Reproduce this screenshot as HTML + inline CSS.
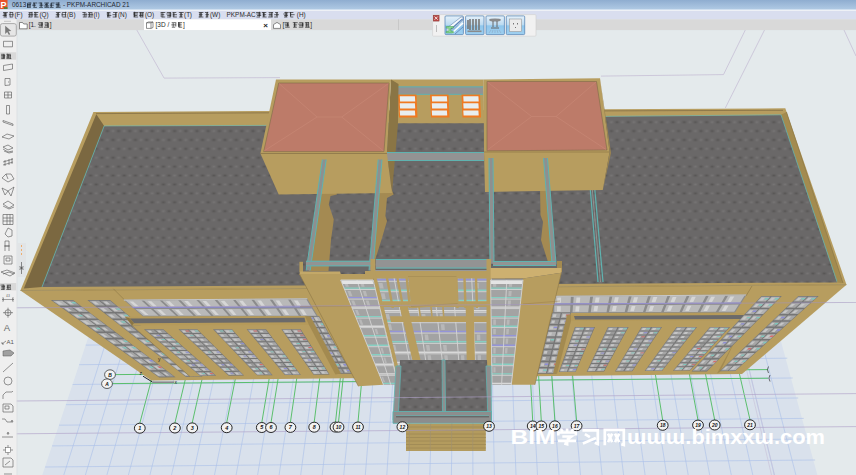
<!DOCTYPE html>
<html><head><meta charset="utf-8"><style>
html,body{margin:0;padding:0;width:856px;height:475px;overflow:hidden;background:#e5e9ec}
svg{display:block}
text{font-family:"Liberation Sans",sans-serif}
</style></head><body>
<svg width="856" height="475" viewBox="0 0 856 475">
<defs>
<radialGradient id="rd"><stop offset="0" stop-color="#545251"/><stop offset="1" stop-color="#6a6868" stop-opacity="0"/></radialGradient>
<radialGradient id="rl"><stop offset="0" stop-color="#7a7878"/><stop offset="1" stop-color="#6a6868" stop-opacity="0"/></radialGradient>
<pattern id="roof" patternUnits="userSpaceOnUse" width="11.2" height="17.8" x="1" y="2"><rect width="11.2" height="17.8" fill="#6a6868"/><ellipse cx="5.6" cy="4.45" rx="4" ry="2.6" fill="url(#rd)"/><ellipse cx="0" cy="13.35" rx="4" ry="2.6" fill="url(#rd)"/><ellipse cx="11.2" cy="13.35" rx="4" ry="2.6" fill="url(#rd)"/><ellipse cx="0" cy="4.45" rx="3.5" ry="2.5" fill="url(#rl)"/><ellipse cx="11.2" cy="4.45" rx="3.5" ry="2.5" fill="url(#rl)"/><ellipse cx="5.6" cy="13.35" rx="3.5" ry="2.5" fill="url(#rl)"/></pattern>
</defs>
<rect x="0" y="0" width="856" height="475" fill="#e4eaec"/>
<polyline points="136.8,30 164.1,78.1 280,77.6" fill="none" stroke="#c7bfd6" stroke-width="0.8"/>
<polyline points="745.3,30 723.5,74.6 601,76.1" fill="none" stroke="#c7bfd6" stroke-width="0.8"/>
<line x1="764.5" y1="30.0" x2="725.3" y2="108.0" stroke="#c7bfd6" stroke-width="0.8"/>
<line x1="844.0" y1="30.0" x2="856.0" y2="56.0" stroke="#c7bfd6" stroke-width="0.8"/>
<polygon points="100.7,300.0 769.7,300.0 817.4,475.0 42.3,475.0" fill="#d9e1ec"/>
<line x1="119.3" y1="300" x2="63.8" y2="475" stroke="#a9c0ea" stroke-width="0.6"/>
<line x1="137.9" y1="300" x2="85.4" y2="475" stroke="#a9c0ea" stroke-width="0.6"/>
<line x1="156.5" y1="300" x2="106.9" y2="475" stroke="#a9c0ea" stroke-width="0.6"/>
<line x1="175.1" y1="300" x2="128.4" y2="475" stroke="#a9c0ea" stroke-width="0.6"/>
<line x1="193.6" y1="300" x2="149.9" y2="475" stroke="#a9c0ea" stroke-width="0.6"/>
<line x1="212.2" y1="300" x2="171.5" y2="475" stroke="#a9c0ea" stroke-width="0.6"/>
<line x1="230.8" y1="300" x2="193.0" y2="475" stroke="#a9c0ea" stroke-width="0.6"/>
<line x1="249.4" y1="300" x2="214.5" y2="475" stroke="#a9c0ea" stroke-width="0.6"/>
<line x1="268.0" y1="300" x2="236.1" y2="475" stroke="#a9c0ea" stroke-width="0.6"/>
<line x1="286.5" y1="300" x2="257.6" y2="475" stroke="#a9c0ea" stroke-width="0.6"/>
<line x1="305.1" y1="300" x2="279.1" y2="475" stroke="#a9c0ea" stroke-width="0.6"/>
<line x1="323.7" y1="300" x2="300.7" y2="475" stroke="#a9c0ea" stroke-width="0.6"/>
<line x1="342.3" y1="300" x2="322.2" y2="475" stroke="#a9c0ea" stroke-width="0.6"/>
<line x1="360.9" y1="300" x2="343.7" y2="475" stroke="#a9c0ea" stroke-width="0.6"/>
<line x1="379.5" y1="300" x2="365.3" y2="475" stroke="#a9c0ea" stroke-width="0.6"/>
<line x1="398.0" y1="300" x2="386.8" y2="475" stroke="#a9c0ea" stroke-width="0.6"/>
<line x1="416.6" y1="300" x2="408.3" y2="475" stroke="#a9c0ea" stroke-width="0.6"/>
<line x1="435.2" y1="300" x2="429.8" y2="475" stroke="#a9c0ea" stroke-width="0.6"/>
<line x1="453.8" y1="300" x2="451.4" y2="475" stroke="#a9c0ea" stroke-width="0.6"/>
<line x1="472.4" y1="300" x2="472.9" y2="475" stroke="#a9c0ea" stroke-width="0.6"/>
<line x1="490.9" y1="300" x2="494.4" y2="475" stroke="#a9c0ea" stroke-width="0.6"/>
<line x1="509.5" y1="300" x2="516.0" y2="475" stroke="#a9c0ea" stroke-width="0.6"/>
<line x1="528.1" y1="300" x2="537.5" y2="475" stroke="#a9c0ea" stroke-width="0.6"/>
<line x1="546.7" y1="300" x2="559.0" y2="475" stroke="#a9c0ea" stroke-width="0.6"/>
<line x1="565.3" y1="300" x2="580.5" y2="475" stroke="#a9c0ea" stroke-width="0.6"/>
<line x1="583.9" y1="300" x2="602.1" y2="475" stroke="#a9c0ea" stroke-width="0.6"/>
<line x1="602.4" y1="300" x2="623.6" y2="475" stroke="#a9c0ea" stroke-width="0.6"/>
<line x1="621.0" y1="300" x2="645.1" y2="475" stroke="#a9c0ea" stroke-width="0.6"/>
<line x1="639.6" y1="300" x2="666.7" y2="475" stroke="#a9c0ea" stroke-width="0.6"/>
<line x1="658.2" y1="300" x2="688.2" y2="475" stroke="#a9c0ea" stroke-width="0.6"/>
<line x1="676.8" y1="300" x2="709.7" y2="475" stroke="#a9c0ea" stroke-width="0.6"/>
<line x1="695.3" y1="300" x2="731.3" y2="475" stroke="#a9c0ea" stroke-width="0.6"/>
<line x1="713.9" y1="300" x2="752.8" y2="475" stroke="#a9c0ea" stroke-width="0.6"/>
<line x1="732.5" y1="300" x2="774.3" y2="475" stroke="#a9c0ea" stroke-width="0.6"/>
<line x1="751.1" y1="300" x2="795.9" y2="475" stroke="#a9c0ea" stroke-width="0.6"/>
<line x1="98.4" y1="306.9" x2="771.6" y2="300.8" stroke="#a9c0ea" stroke-width="0.6"/>
<line x1="92.1" y1="325.9" x2="776.7" y2="319.6" stroke="#a9c0ea" stroke-width="0.6"/>
<line x1="85.7" y1="345.1" x2="782.0" y2="338.8" stroke="#a9c0ea" stroke-width="0.6"/>
<line x1="79.2" y1="364.7" x2="787.3" y2="358.2" stroke="#a9c0ea" stroke-width="0.6"/>
<line x1="72.6" y1="384.5" x2="792.7" y2="378.0" stroke="#a9c0ea" stroke-width="0.6"/>
<line x1="65.9" y1="404.7" x2="798.2" y2="398.0" stroke="#a9c0ea" stroke-width="0.6"/>
<line x1="59.1" y1="425.2" x2="803.7" y2="418.4" stroke="#a9c0ea" stroke-width="0.6"/>
<line x1="52.1" y1="445.9" x2="809.4" y2="439.0" stroke="#a9c0ea" stroke-width="0.6"/>
<line x1="45.1" y1="467.0" x2="815.1" y2="460.0" stroke="#a9c0ea" stroke-width="0.6"/>
<line x1="739.5" y1="340.0" x2="771.5" y2="475.0" stroke="#c7bfd6" stroke-width="0.6"/>
<line x1="742.2" y1="340.0" x2="774.5" y2="475.0" stroke="#c7bfd6" stroke-width="0.6"/>
<line x1="112.0" y1="383.6" x2="768.0" y2="378.2" stroke="#4dbb5f" stroke-width="0.9"/>
<line x1="115.0" y1="374.6" x2="768.0" y2="369.6" stroke="#4dbb5f" stroke-width="0.9"/>
<line x1="139.8" y1="423.2" x2="153.5" y2="372.0" stroke="#4dbb5f" stroke-width="0.9"/>
<line x1="174.9" y1="423.0" x2="187.1" y2="372.0" stroke="#4dbb5f" stroke-width="0.9"/>
<line x1="192.2" y1="422.9" x2="203.7" y2="372.0" stroke="#4dbb5f" stroke-width="0.9"/>
<line x1="226.7" y1="422.7" x2="236.7" y2="372.0" stroke="#4dbb5f" stroke-width="0.9"/>
<line x1="261.8" y1="422.5" x2="270.3" y2="372.0" stroke="#4dbb5f" stroke-width="0.9"/>
<line x1="271.0" y1="422.5" x2="279.2" y2="372.0" stroke="#4dbb5f" stroke-width="0.9"/>
<line x1="290.4" y1="422.4" x2="297.7" y2="372.0" stroke="#4dbb5f" stroke-width="0.9"/>
<line x1="314.2" y1="422.2" x2="320.5" y2="372.0" stroke="#4dbb5f" stroke-width="0.9"/>
<line x1="335.5" y1="422.1" x2="341.0" y2="372.0" stroke="#4dbb5f" stroke-width="0.9"/>
<line x1="338.5" y1="422.1" x2="343.8" y2="372.0" stroke="#4dbb5f" stroke-width="0.9"/>
<line x1="358.0" y1="422.0" x2="362.5" y2="372.0" stroke="#4dbb5f" stroke-width="0.9"/>
<line x1="402.4" y1="421.8" x2="405.1" y2="372.0" stroke="#4dbb5f" stroke-width="0.9"/>
<line x1="489.0" y1="421.3" x2="488.2" y2="372.0" stroke="#4dbb5f" stroke-width="0.9"/>
<line x1="532.7" y1="421.0" x2="530.1" y2="372.0" stroke="#4dbb5f" stroke-width="0.9"/>
<line x1="541.3" y1="421.0" x2="538.4" y2="372.0" stroke="#4dbb5f" stroke-width="0.9"/>
<line x1="554.9" y1="420.9" x2="551.5" y2="372.0" stroke="#4dbb5f" stroke-width="0.9"/>
<line x1="576.6" y1="420.8" x2="572.3" y2="372.0" stroke="#4dbb5f" stroke-width="0.9"/>
<line x1="662.7" y1="420.3" x2="655.0" y2="372.0" stroke="#4dbb5f" stroke-width="0.9"/>
<line x1="698.0" y1="420.1" x2="689.0" y2="372.0" stroke="#4dbb5f" stroke-width="0.9"/>
<line x1="714.7" y1="420.0" x2="705.1" y2="372.0" stroke="#4dbb5f" stroke-width="0.9"/>
<line x1="750.0" y1="419.8" x2="739.0" y2="372.0" stroke="#4dbb5f" stroke-width="0.9"/>
<polygon points="93.4,112.0 276.0,111.0 600.0,109.2 785.3,108.3 846.5,284.7 20.4,290.5" fill="#b79d5f"/>
<polyline points="96,113.6 276,112.8 600,110.9 783,110.3" fill="none" stroke="#8a7548" stroke-width="0.9"/>
<polygon points="96.3,114.2 104.2,125.9 42.0,287.0 23.8,288.5" fill="#7b6841"/>
<polygon points="781.0,114.8 786.5,112.0 843.0,283.0 837.0,282.4" fill="#a38b4f"/>
<line x1="786.5" y1="112.0" x2="843.0" y2="283.0" stroke="#7f6c40" stroke-width="0.5"/>
<polygon points="104.2,125.9 265.0,125.4 610.0,116.3 781.0,114.8 837.0,282.4 42.0,287.0" fill="url(#roof)"/>
<line x1="104.2" y1="125.9" x2="42.0" y2="287.0" stroke="#5fb3b0" stroke-width="0.8"/>
<line x1="781.0" y1="114.8" x2="837.0" y2="281.6" stroke="#5fb3b0" stroke-width="0.8"/>
<polyline points="104.2,125.9 265,125.4 610,116.3 781,114.8" fill="none" stroke="#7fb8a4" stroke-width="0.8"/>
<line x1="590.0" y1="186.0" x2="598.0" y2="282.0" stroke="#5fb3b0" stroke-width="1.2"/>
<line x1="594.5" y1="186.0" x2="603.0" y2="282.0" stroke="#5fb3b0" stroke-width="1.2"/>
<line x1="592.0" y1="186.0" x2="600.5" y2="282.0" stroke="#9a9a9a" stroke-width="0.8"/>
<polygon points="391.0,79.6 483.7,79.6 484.0,123.6 397.0,123.6" fill="#b79d5f"/>
<polygon points="392.6,86.4 483.0,86.4 483.0,94.8 392.6,94.8" fill="#939393"/>
<line x1="392.6" y1="86.9" x2="483.0" y2="86.9" stroke="#5fb3b0" stroke-width="1.0"/>
<line x1="392.6" y1="94.3" x2="483.0" y2="94.3" stroke="#5fb3b0" stroke-width="1.0"/>
<polygon points="398.0,94.5 416.5,94.5 417.5,117.5 399.0,117.5" fill="#f07a22"/>
<polygon points="399.8,96.2 414.9,96.2 415.2,101.4 400.1,101.4" fill="#e8eef0"/>
<polygon points="399.8,103.3 414.9,103.3 415.2,108.5 400.1,108.5" fill="#e8eef0"/>
<polygon points="399.8,110.4 414.9,110.4 415.2,115.6 400.1,115.6" fill="#e8eef0"/>
<polygon points="430.0,94.5 448.5,94.5 449.5,117.5 431.0,117.5" fill="#f07a22"/>
<polygon points="431.8,96.2 446.9,96.2 447.2,101.4 432.1,101.4" fill="#e8eef0"/>
<polygon points="431.8,103.3 446.9,103.3 447.2,108.5 432.1,108.5" fill="#e8eef0"/>
<polygon points="431.8,110.4 446.9,110.4 447.2,115.6 432.1,115.6" fill="#e8eef0"/>
<polygon points="461.5,94.5 480.0,94.5 481.0,117.5 462.5,117.5" fill="#f07a22"/>
<polygon points="463.3,96.2 478.4,96.2 478.7,101.4 463.6,101.4" fill="#e8eef0"/>
<polygon points="463.3,103.3 478.4,103.3 478.7,108.5 463.6,108.5" fill="#e8eef0"/>
<polygon points="463.3,110.4 478.4,110.4 478.7,115.6 463.6,115.6" fill="#e8eef0"/>
<polygon points="397.0,123.6 484.0,123.6 491.0,262.0 376.0,262.0" fill="url(#roof)"/>
<polygon points="391.0,79.6 398.5,84.0 398.0,123.6 392.0,193.0 386.9,153.5" fill="#8a7545"/>
<polygon points="387.0,152.0 484.0,152.0 484.0,161.0 387.0,161.0" fill="#939393"/>
<line x1="387.0" y1="152.5" x2="484.0" y2="152.5" stroke="#5fb3b0" stroke-width="1.0"/>
<line x1="387.0" y1="160.5" x2="484.0" y2="160.5" stroke="#5fb3b0" stroke-width="1.0"/>
<polygon points="325.0,161.0 337.0,194.6 330.5,196.0 328.8,204.6 333.8,219.5 331.0,240.0 328.5,271.0 309.0,271.0" fill="#a48a52"/>
<polygon points="380.0,161.3 393.7,194.6 387.0,198.0 385.4,216.0 387.0,221.0 382.0,238.0 373.7,264.5 371.0,266.0" fill="#a48a52"/>
<polygon points="544.5,158.0 540.0,188.0 540.5,215.0 543.0,222.0 541.0,240.0 548.0,262.0 552.0,264.0" fill="#a48a52"/>
<polygon points="276.0,79.6 391.0,79.6 386.9,153.5 260.4,153.5" fill="#b79d5f"/>
<polygon points="278.7,83.0 389.0,83.0 384.0,151.6 263.7,151.6" fill="#bd7b69" stroke="#7e6a48" stroke-width="0.6"/>
<line x1="279.0" y1="83.5" x2="317.0" y2="117.0" stroke="#c98a77" stroke-width="0.6"/>
<line x1="388.5" y1="83.5" x2="341.7" y2="117.0" stroke="#c98a77" stroke-width="0.6"/>
<line x1="264.0" y1="151.0" x2="317.0" y2="117.0" stroke="#c98a77" stroke-width="0.6"/>
<line x1="383.5" y1="151.0" x2="341.7" y2="117.0" stroke="#c98a77" stroke-width="0.6"/>
<line x1="317.0" y1="117.0" x2="341.7" y2="117.0" stroke="#c98a77" stroke-width="0.6"/>
<polygon points="260.4,153.5 386.9,153.5 392.0,193.0 278.7,194.5" fill="#b79d5f"/>
<line x1="260.4" y1="153.5" x2="386.9" y2="153.5" stroke="#8c7645" stroke-width="0.7"/>
<polygon points="483.7,79.6 600.0,78.2 609.6,152.0 484.0,152.0" fill="#b79d5f"/>
<polygon points="487.0,81.5 596.5,81.5 607.0,150.0 487.0,150.8" fill="#bd7b69" stroke="#7e6a48" stroke-width="0.6"/>
<line x1="487.5" y1="82.0" x2="531.6" y2="116.5" stroke="#c98a77" stroke-width="0.6"/>
<line x1="596.0" y1="82.0" x2="556.0" y2="116.5" stroke="#c98a77" stroke-width="0.6"/>
<line x1="487.5" y1="150.0" x2="531.6" y2="116.5" stroke="#c98a77" stroke-width="0.6"/>
<line x1="606.0" y1="149.5" x2="556.0" y2="116.5" stroke="#c98a77" stroke-width="0.6"/>
<line x1="531.6" y1="116.5" x2="556.0" y2="116.5" stroke="#c98a77" stroke-width="0.6"/>
<polygon points="484.0,152.0 609.6,152.0 602.8,190.0 485.0,192.0" fill="#b79d5f"/>
<line x1="484.0" y1="152.0" x2="609.6" y2="152.0" stroke="#8c7645" stroke-width="0.7"/>
<polygon points="600.0,78.2 609.6,152.0 602.8,190.0 611.0,153.0" fill="#9c8550"/>
<polygon points="322.4,159.6 326.2,159.6 310.2,270.4 306.2,270.4" fill="#8f8f8f"/>
<line x1="322.4" y1="159.6" x2="306.2" y2="270.4" stroke="#5fb3b0" stroke-width="1.0"/>
<line x1="326.2" y1="159.6" x2="310.2" y2="270.4" stroke="#5fb3b0" stroke-width="1.0"/>
<polygon points="378.2,159.6 382.0,159.6 372.8,270.4 369.0,270.4" fill="#8f8f8f"/>
<line x1="378.2" y1="159.6" x2="369.0" y2="270.4" stroke="#5fb3b0" stroke-width="1.0"/>
<line x1="382.0" y1="159.6" x2="372.8" y2="270.4" stroke="#5fb3b0" stroke-width="1.0"/>
<polygon points="489.0,158.0 493.0,158.0 494.0,263.7 490.0,263.7" fill="#8f8f8f"/>
<line x1="489.0" y1="158.0" x2="490.0" y2="263.7" stroke="#5fb3b0" stroke-width="1.0"/>
<line x1="493.0" y1="158.0" x2="494.0" y2="263.7" stroke="#5fb3b0" stroke-width="1.0"/>
<polygon points="543.5,158.0 547.5,158.0 556.0,263.7 552.0,263.7" fill="#8f8f8f"/>
<line x1="543.5" y1="158.0" x2="552.0" y2="263.7" stroke="#5fb3b0" stroke-width="1.0"/>
<line x1="547.5" y1="158.0" x2="556.0" y2="263.7" stroke="#5fb3b0" stroke-width="1.0"/>
<polygon points="20.4,290.5 846.5,284.7 742.0,374.0 151.5,380.5" fill="#b79d5f"/>
<line x1="20.4" y1="290.5" x2="846.5" y2="284.7" stroke="#8f7a48" stroke-width="0.6"/>
<line x1="113.4" y1="288.8" x2="124.1" y2="299.5" stroke="#8c7645" stroke-width="0.6"/>
<polygon points="50.8,299.9 73.0,299.9 175.5,377.2 159.2,377.4" fill="#767676"/>
<polygon points="52.7,300.7 62.2,300.7 68.9,305.6 59.5,305.6" fill="#b2b2b2"/>
<polygon points="55.3,301.6 59.0,301.6 63.1,304.6 59.5,304.6" fill="#c6c6c6"/>
<polygon points="61.7,307.1 71.0,307.1 77.7,312.0 68.5,312.0" fill="#999999"/>
<polygon points="64.3,308.1 67.9,308.1 72.0,311.1 68.5,311.1" fill="#c6c6c6"/>
<polygon points="70.7,313.6 79.8,313.6 86.5,318.5 77.5,318.5" fill="#a6a6a6"/>
<polygon points="73.3,314.6 76.8,314.6 80.9,317.5 77.4,317.5" fill="#c6c6c6"/>
<polygon points="77.8,314.9 81.4,314.9 83.4,316.3 79.7,316.3" fill="#80c8be"/>
<polygon points="79.7,320.1 88.6,320.0 95.3,324.9 86.6,325.0" fill="#b2b2b2"/>
<polygon points="82.3,321.0 85.7,321.0 89.8,324.0 86.4,324.0" fill="#c6c6c6"/>
<polygon points="88.7,326.5 97.4,326.5 104.1,331.4 95.6,331.4" fill="#999999"/>
<polygon points="91.3,327.5 94.6,327.5 98.7,330.4 95.4,330.4" fill="#c6c6c6"/>
<polygon points="95.5,327.8 99.1,327.8 101.0,329.2 97.5,329.2" fill="#80c8be"/>
<polygon points="97.7,333.0 106.2,332.9 112.9,337.8 104.6,337.9" fill="#a6a6a6"/>
<polygon points="100.3,333.9 103.5,333.9 107.6,336.9 104.4,336.9" fill="#c6c6c6"/>
<polygon points="106.7,339.4 115.0,339.4 121.7,344.3 113.6,344.3" fill="#a6a6a6"/>
<polygon points="109.2,340.4 112.4,340.4 116.5,343.3 113.4,343.4" fill="#c6c6c6"/>
<polygon points="115.8,345.9 123.8,345.8 130.5,350.7 122.6,350.8" fill="#a6a6a6"/>
<polygon points="118.2,346.9 121.3,346.8 125.4,349.8 122.4,349.8" fill="#c6c6c6"/>
<polygon points="122.2,347.2 125.5,347.1 127.4,348.6 124.2,348.6" fill="#80c8be"/>
<polygon points="124.8,352.3 132.6,352.3 139.3,357.2 131.6,357.3" fill="#a6a6a6"/>
<polygon points="127.2,353.3 130.2,353.3 134.3,356.3 131.4,356.3" fill="#c6c6c6"/>
<polygon points="133.8,358.8 141.4,358.7 148.1,363.7 140.6,363.7" fill="#a6a6a6"/>
<polygon points="136.2,359.8 139.1,359.7 143.2,362.7 140.3,362.7" fill="#c6c6c6"/>
<polygon points="142.8,365.3 150.2,365.2 156.9,370.1 149.7,370.2" fill="#a6a6a6"/>
<polygon points="145.2,366.2 148.0,366.2 152.1,369.2 149.3,369.2" fill="#c6c6c6"/>
<polygon points="148.9,366.5 151.9,366.5 153.8,367.9 150.8,367.9" fill="#80c8be"/>
<polygon points="151.8,371.7 159.0,371.7 165.7,376.6 158.7,376.6" fill="#a6a6a6"/>
<polygon points="154.2,372.7 156.9,372.7 161.0,375.6 158.3,375.7" fill="#c6c6c6"/>
<polygon points="63.7,300.7 73.2,300.7 79.8,305.6 70.4,305.6" fill="#999999"/>
<polygon points="66.4,301.6 70.0,301.6 74.0,304.6 70.4,304.6" fill="#c6c6c6"/>
<polygon points="71.0,302.0 74.9,302.0 76.7,303.4 72.9,303.4" fill="#80c8be"/>
<polygon points="72.5,307.1 81.8,307.1 88.3,312.0 79.2,312.0" fill="#a6a6a6"/>
<polygon points="75.1,308.1 78.7,308.1 82.7,311.1 79.1,311.1" fill="#c6c6c6"/>
<polygon points="81.3,313.6 90.4,313.6 96.9,318.5 87.9,318.5" fill="#a6a6a6"/>
<polygon points="83.8,314.5 87.3,314.5 91.3,317.5 87.9,317.5" fill="#c6c6c6"/>
<polygon points="90.0,320.0 98.9,320.0 105.4,324.9 96.7,324.9" fill="#a6a6a6"/>
<polygon points="92.6,321.0 96.0,321.0 100.0,324.0 96.6,324.0" fill="#c6c6c6"/>
<polygon points="98.8,326.5 107.5,326.5 114.0,331.4 105.5,331.4" fill="#999999"/>
<polygon points="101.3,327.4 104.6,327.4 108.6,330.4 105.3,330.4" fill="#c6c6c6"/>
<polygon points="107.6,332.9 116.0,332.9 122.5,337.8 114.2,337.8" fill="#999999"/>
<polygon points="110.1,333.9 113.3,333.9 117.3,336.8 114.1,336.9" fill="#c6c6c6"/>
<polygon points="116.3,339.4 124.6,339.3 131.1,344.2 123.0,344.3" fill="#a6a6a6"/>
<polygon points="118.8,340.3 122.0,340.3 125.9,343.3 122.8,343.3" fill="#c6c6c6"/>
<polygon points="122.9,340.7 126.2,340.6 128.1,342.1 124.8,342.1" fill="#80c8be"/>
<polygon points="125.1,345.8 133.2,345.8 139.7,350.7 131.8,350.7" fill="#b2b2b2"/>
<polygon points="127.5,346.8 130.6,346.8 134.6,349.7 131.6,349.8" fill="#c6c6c6"/>
<polygon points="131.5,347.1 134.8,347.1 136.7,348.5 133.4,348.5" fill="#80c8be"/>
<polygon points="133.9,352.3 141.7,352.2 148.2,357.1 140.5,357.2" fill="#a6a6a6"/>
<polygon points="136.3,353.2 139.3,353.2 143.3,356.2 140.3,356.2" fill="#c6c6c6"/>
<polygon points="142.7,358.7 150.3,358.7 156.8,363.6 149.3,363.6" fill="#a6a6a6"/>
<polygon points="145.0,359.7 147.9,359.7 151.9,362.6 149.0,362.7" fill="#c6c6c6"/>
<polygon points="148.8,360.0 151.9,360.0 153.8,361.4 150.7,361.4" fill="#8d8dd6"/>
<polygon points="151.4,365.2 158.8,365.1 165.3,370.0 158.1,370.1" fill="#a6a6a6"/>
<polygon points="153.8,366.1 156.6,366.1 160.6,369.1 157.8,369.1" fill="#c6c6c6"/>
<polygon points="157.5,366.4 160.5,366.4 162.3,367.8 159.4,367.9" fill="#d86a6a"/>
<polygon points="160.2,371.6 167.4,371.6 173.9,376.5 166.9,376.5" fill="#999999"/>
<polygon points="162.5,372.6 165.3,372.6 169.2,375.5 166.5,375.6" fill="#c6c6c6"/>
<polygon points="87.4,299.9 110.0,299.9 202.7,376.9 186.1,377.1" fill="#767676"/>
<polygon points="89.2,300.7 98.9,300.7 104.9,305.6 95.4,305.6" fill="#a6a6a6"/>
<polygon points="91.8,301.6 95.5,301.6 99.2,304.6 95.5,304.6" fill="#c6c6c6"/>
<polygon points="97.4,307.1 106.9,307.1 112.9,312.0 103.6,312.0" fill="#a6a6a6"/>
<polygon points="99.9,308.1 103.6,308.1 107.3,311.0 103.7,311.0" fill="#c6c6c6"/>
<polygon points="105.6,313.5 114.9,313.5 120.9,318.4 111.8,318.4" fill="#a6a6a6"/>
<polygon points="108.1,314.5 111.6,314.5 115.4,317.5 111.9,317.5" fill="#c6c6c6"/>
<polygon points="113.8,320.0 122.8,320.0 128.9,324.8 120.0,324.9" fill="#a6a6a6"/>
<polygon points="116.3,320.9 119.7,320.9 123.5,323.9 120.0,323.9" fill="#c6c6c6"/>
<polygon points="120.7,321.2 124.3,321.2 126.1,322.7 122.4,322.7" fill="#80c8be"/>
<polygon points="122.0,326.4 130.8,326.4 136.9,331.3 128.2,331.3" fill="#a6a6a6"/>
<polygon points="124.5,327.4 127.8,327.4 131.6,330.3 128.2,330.3" fill="#c6c6c6"/>
<polygon points="130.2,332.8 138.8,332.8 144.9,337.7 136.4,337.7" fill="#a6a6a6"/>
<polygon points="132.6,333.8 135.9,333.8 139.7,336.7 136.4,336.8" fill="#c6c6c6"/>
<polygon points="138.4,339.3 146.8,339.2 152.9,344.1 144.6,344.2" fill="#a6a6a6"/>
<polygon points="140.8,340.2 144.0,340.2 147.7,343.2 144.6,343.2" fill="#c6c6c6"/>
<polygon points="144.9,340.5 148.3,340.5 150.1,341.9 146.7,342.0" fill="#80c8be"/>
<polygon points="146.6,345.7 154.8,345.7 160.9,350.6 152.9,350.6" fill="#a6a6a6"/>
<polygon points="149.0,346.7 152.1,346.7 155.8,349.6 152.7,349.6" fill="#c6c6c6"/>
<polygon points="154.8,352.1 162.8,352.1 168.9,357.0 161.1,357.0" fill="#999999"/>
<polygon points="157.2,353.1 160.2,353.1 163.9,356.0 160.9,356.1" fill="#c6c6c6"/>
<polygon points="161.1,353.4 164.3,353.4 166.1,354.8 162.9,354.8" fill="#80c8be"/>
<polygon points="163.0,358.6 170.8,358.5 176.9,363.4 169.3,363.5" fill="#a6a6a6"/>
<polygon points="165.3,359.5 168.3,359.5 172.0,362.5 169.1,362.5" fill="#c6c6c6"/>
<polygon points="171.2,365.0 178.8,365.0 184.9,369.8 177.5,369.9" fill="#b2b2b2"/>
<polygon points="173.5,366.0 176.4,365.9 180.1,368.9 177.3,368.9" fill="#c6c6c6"/>
<polygon points="179.4,371.5 186.8,371.4 192.9,376.3 185.7,376.3" fill="#999999"/>
<polygon points="181.7,372.4 184.5,372.4 188.2,375.3 185.5,375.4" fill="#c6c6c6"/>
<polygon points="185.3,372.7 188.3,372.7 190.1,374.1 187.1,374.1" fill="#80c8be"/>
<polygon points="100.4,300.7 110.1,300.7 116.0,305.5 106.5,305.6" fill="#999999"/>
<polygon points="103.0,301.6 106.7,301.6 110.3,304.6 106.6,304.6" fill="#c6c6c6"/>
<polygon points="108.4,307.1 117.9,307.1 123.8,312.0 114.5,312.0" fill="#a6a6a6"/>
<polygon points="110.9,308.1 114.5,308.1 118.1,311.0 114.6,311.0" fill="#c6c6c6"/>
<polygon points="115.5,308.4 119.3,308.4 121.0,309.8 117.2,309.8" fill="#80c8be"/>
<polygon points="116.4,313.5 125.6,313.5 131.5,318.4 122.4,318.4" fill="#a6a6a6"/>
<polygon points="118.8,314.5 122.4,314.5 126.0,317.4 122.5,317.4" fill="#c6c6c6"/>
<polygon points="123.3,314.8 127.1,314.8 128.8,316.2 125.0,316.2" fill="#80c8be"/>
<polygon points="124.3,320.0 133.4,319.9 139.3,324.8 130.4,324.8" fill="#a6a6a6"/>
<polygon points="126.8,320.9 130.2,320.9 133.8,323.9 130.4,323.9" fill="#c6c6c6"/>
<polygon points="131.1,321.2 134.8,321.2 136.5,322.6 132.9,322.6" fill="#8d8dd6"/>
<polygon points="132.3,326.4 141.1,326.4 147.0,331.2 138.3,331.3" fill="#a6a6a6"/>
<polygon points="134.7,327.3 138.1,327.3 141.7,330.3 138.3,330.3" fill="#c6c6c6"/>
<polygon points="140.2,332.8 148.9,332.8 154.7,337.7 146.3,337.7" fill="#a6a6a6"/>
<polygon points="142.6,333.8 145.9,333.8 149.5,336.7 146.3,336.7" fill="#c6c6c6"/>
<polygon points="148.2,339.2 156.6,339.2 162.5,344.1 154.2,344.1" fill="#999999"/>
<polygon points="150.6,340.2 153.8,340.2 157.4,343.1 154.2,343.1" fill="#c6c6c6"/>
<polygon points="154.6,340.5 158.1,340.5 159.8,341.9 156.4,341.9" fill="#80c8be"/>
<polygon points="156.1,345.7 164.3,345.6 170.2,350.5 162.2,350.5" fill="#a6a6a6"/>
<polygon points="158.5,346.6 161.6,346.6 165.2,349.6 162.1,349.6" fill="#c6c6c6"/>
<polygon points="162.5,346.9 165.8,346.9 167.5,348.3 164.2,348.3" fill="#80c8be"/>
<polygon points="164.1,352.1 172.1,352.0 178.0,356.9 170.2,357.0" fill="#b2b2b2"/>
<polygon points="166.4,353.0 169.5,353.0 173.1,356.0 170.1,356.0" fill="#c6c6c6"/>
<polygon points="170.3,353.3 173.5,353.3 175.3,354.7 172.0,354.8" fill="#d86a6a"/>
<polygon points="172.1,358.5 179.8,358.5 185.7,363.3 178.1,363.4" fill="#a6a6a6"/>
<polygon points="174.3,359.5 177.3,359.4 180.9,362.4 178.0,362.4" fill="#c6c6c6"/>
<polygon points="178.1,359.8 181.3,359.7 183.0,361.2 179.9,361.2" fill="#80c8be"/>
<polygon points="180.0,364.9 187.6,364.9 193.5,369.8 186.1,369.8" fill="#b2b2b2"/>
<polygon points="182.3,365.9 185.2,365.9 188.8,368.8 185.9,368.9" fill="#c6c6c6"/>
<polygon points="188.0,371.4 195.3,371.3 201.2,376.2 194.0,376.3" fill="#999999"/>
<polygon points="190.2,372.3 193.0,372.3 196.6,375.2 193.8,375.3" fill="#c6c6c6"/>
<polygon points="123.2,299.6 307.0,298.3 318.0,316.5 143.0,316.5" fill="#8b8b8b"/>
<polygon points="125.7,300.6 141.4,300.5 149.0,307.3 133.6,307.4" fill="#b9b9b9"/>
<polygon points="129.4,301.4 133.1,301.4 138.9,306.5 135.3,306.5" fill="#d6d6d6"/>
<polygon points="144.0,300.5 159.8,300.4 167.0,307.2 151.5,307.3" fill="#b9b9b9"/>
<polygon points="147.7,301.3 151.3,301.3 156.9,306.4 153.3,306.4" fill="#d6d6d6"/>
<polygon points="162.3,300.4 178.1,300.3 185.0,307.2 169.5,307.2" fill="#b9b9b9"/>
<polygon points="166.0,301.2 169.6,301.2 174.9,306.3 171.3,306.4" fill="#d6d6d6"/>
<polygon points="180.7,300.2 196.4,300.1 203.0,307.1 187.5,307.2" fill="#b9b9b9"/>
<polygon points="184.2,301.1 187.9,301.1 192.9,306.3 189.3,306.3" fill="#d6d6d6"/>
<polygon points="199.0,300.1 214.7,300.0 220.9,307.0 205.5,307.1" fill="#b9b9b9"/>
<polygon points="202.5,301.0 206.2,300.9 211.0,306.2 207.4,306.2" fill="#d6d6d6"/>
<polygon points="217.3,300.0 233.1,299.9 238.9,307.0 223.4,307.0" fill="#b9b9b9"/>
<polygon points="220.8,300.9 224.5,300.8 229.0,306.1 225.4,306.1" fill="#d6d6d6"/>
<polygon points="235.6,299.9 251.4,299.8 256.9,306.9 241.4,306.9" fill="#b9b9b9"/>
<polygon points="239.1,300.7 242.8,300.7 247.0,306.0 243.4,306.1" fill="#d6d6d6"/>
<polygon points="254.0,299.8 269.7,299.6 274.9,306.8 259.4,306.9" fill="#b9b9b9"/>
<polygon points="257.4,300.6 261.0,300.6 265.0,306.0 261.4,306.0" fill="#d6d6d6"/>
<polygon points="272.3,299.6 288.0,299.5 292.8,306.7 277.4,306.8" fill="#b9b9b9"/>
<polygon points="275.7,300.5 279.3,300.5 283.0,305.9 279.4,305.9" fill="#d6d6d6"/>
<polygon points="290.6,299.5 306.4,299.4 310.8,306.7 295.3,306.7" fill="#b9b9b9"/>
<polygon points="293.9,300.4 297.6,300.4 301.1,305.8 297.5,305.8" fill="#d6d6d6"/>
<polygon points="135.5,309.1 150.9,309.0 158.5,315.8 143.4,315.8" fill="#b9b9b9"/>
<polygon points="139.2,309.9 142.8,309.9 148.6,315.0 145.1,315.0" fill="#d6d6d6"/>
<polygon points="153.4,309.0 168.8,309.0 176.1,315.8 161.0,315.8" fill="#b9b9b9"/>
<polygon points="157.0,309.8 160.6,309.8 166.2,315.0 162.7,315.0" fill="#d6d6d6"/>
<polygon points="171.3,308.9 186.7,308.9 193.6,315.8 178.5,315.8" fill="#b9b9b9"/>
<polygon points="174.9,309.8 178.5,309.8 183.8,315.0 180.2,315.0" fill="#d6d6d6"/>
<polygon points="189.2,308.9 204.6,308.8 211.1,315.8 196.0,315.8" fill="#b9b9b9"/>
<polygon points="192.7,309.7 196.3,309.7 201.3,314.9 197.8,314.9" fill="#d6d6d6"/>
<polygon points="207.1,308.8 222.5,308.8 228.7,315.8 213.6,315.8" fill="#b9b9b9"/>
<polygon points="210.6,309.7 214.1,309.7 218.9,314.9 215.4,314.9" fill="#d6d6d6"/>
<polygon points="225.0,308.8 240.4,308.7 246.2,315.8 231.1,315.8" fill="#b9b9b9"/>
<polygon points="228.4,309.6 232.0,309.6 236.5,314.9 233.0,314.9" fill="#d6d6d6"/>
<polygon points="242.9,308.7 258.2,308.7 263.7,315.8 248.6,315.8" fill="#b9b9b9"/>
<polygon points="246.3,309.6 249.8,309.6 254.1,314.9 250.6,314.9" fill="#d6d6d6"/>
<polygon points="260.8,308.7 276.1,308.6 281.3,315.8 266.2,315.8" fill="#b9b9b9"/>
<polygon points="264.1,309.5 267.7,309.5 271.7,314.9 268.1,314.9" fill="#d6d6d6"/>
<polygon points="278.6,308.6 294.0,308.6 298.8,315.8 283.7,315.8" fill="#b9b9b9"/>
<polygon points="281.9,309.5 285.5,309.5 289.2,314.9 285.7,314.9" fill="#d6d6d6"/>
<polygon points="296.5,308.5 311.9,308.5 316.3,315.8 301.3,315.8" fill="#b9b9b9"/>
<polygon points="299.8,309.4 303.4,309.4 306.8,314.9 303.3,314.9" fill="#d6d6d6"/>
<line x1="132.5" y1="307.5" x2="312.2" y2="306.9" stroke="#8a8ad8" stroke-width="1.0"/>
<line x1="123.8" y1="300.1" x2="307.3" y2="298.8" stroke="#d8d8d8" stroke-width="0.8"/>
<polygon points="306.0,316.0 319.0,316.0 352.0,373.8 337.0,373.8" fill="#767676"/>
<polygon points="306.8,316.7 312.4,316.7 314.9,321.1 309.2,321.1" fill="#a6a6a6"/>
<polygon points="308.1,317.6 310.2,317.6 311.7,320.2 309.5,320.2" fill="#c6c6c6"/>
<polygon points="310.7,317.8 313.0,317.8 313.7,319.1 311.4,319.1" fill="#8d8dd6"/>
<polygon points="309.9,322.5 315.6,322.5 318.0,326.9 312.3,326.9" fill="#a6a6a6"/>
<polygon points="311.2,323.3 313.4,323.3 314.8,326.0 312.6,326.0" fill="#c6c6c6"/>
<polygon points="313.0,328.3 318.8,328.3 321.2,332.6 315.4,332.6" fill="#a6a6a6"/>
<polygon points="314.3,329.1 316.5,329.1 318.0,331.8 315.7,331.8" fill="#c6c6c6"/>
<polygon points="316.1,334.0 322.0,334.0 324.4,338.4 318.5,338.4" fill="#a6a6a6"/>
<polygon points="317.4,334.9 319.7,334.9 321.1,337.6 318.9,337.6" fill="#c6c6c6"/>
<polygon points="319.3,339.8 325.2,339.8 327.6,344.2 321.6,344.2" fill="#a6a6a6"/>
<polygon points="320.6,340.7 322.8,340.7 324.3,343.3 322.0,343.3" fill="#c6c6c6"/>
<polygon points="322.4,345.6 328.4,345.6 330.8,350.0 324.7,350.0" fill="#999999"/>
<polygon points="323.7,346.5 326.0,346.5 327.4,349.1 325.1,349.1" fill="#c6c6c6"/>
<polygon points="325.5,351.4 331.6,351.4 334.0,355.8 327.8,355.8" fill="#b2b2b2"/>
<polygon points="326.8,352.2 329.1,352.2 330.6,354.9 328.2,354.9" fill="#c6c6c6"/>
<polygon points="329.7,352.5 332.2,352.5 332.9,353.8 330.4,353.8" fill="#8d8dd6"/>
<polygon points="328.6,357.2 334.8,357.2 337.2,361.5 330.9,361.5" fill="#a6a6a6"/>
<polygon points="329.9,358.0 332.3,358.0 333.7,360.7 331.3,360.7" fill="#c6c6c6"/>
<polygon points="331.7,362.9 338.0,362.9 340.4,367.3 334.0,367.3" fill="#a6a6a6"/>
<polygon points="333.0,363.8 335.4,363.8 336.9,366.5 334.5,366.5" fill="#c6c6c6"/>
<polygon points="336.0,364.1 338.5,364.1 339.2,365.4 336.7,365.4" fill="#80c8be"/>
<polygon points="334.8,368.7 341.2,368.7 343.6,373.1 337.2,373.1" fill="#999999"/>
<polygon points="336.1,369.6 338.6,369.6 340.0,372.2 337.6,372.2" fill="#c6c6c6"/>
<polygon points="313.3,316.7 318.9,316.7 321.4,321.1 315.8,321.1" fill="#b2b2b2"/>
<polygon points="314.6,317.6 316.8,317.6 318.3,320.2 316.1,320.2" fill="#c6c6c6"/>
<polygon points="316.5,322.5 322.2,322.5 324.7,326.9 319.0,326.9" fill="#a6a6a6"/>
<polygon points="317.8,323.3 320.0,323.3 321.5,326.0 319.3,326.0" fill="#c6c6c6"/>
<polygon points="320.5,323.6 322.8,323.6 323.5,324.9 321.2,324.9" fill="#80c8be"/>
<polygon points="319.8,328.3 325.5,328.3 328.0,332.6 322.2,332.6" fill="#a6a6a6"/>
<polygon points="321.0,329.1 323.3,329.1 324.8,331.8 322.5,331.8" fill="#c6c6c6"/>
<polygon points="323.0,334.0 328.8,334.0 331.3,338.4 325.4,338.4" fill="#a6a6a6"/>
<polygon points="324.3,334.9 326.5,334.9 328.0,337.6 325.7,337.6" fill="#c6c6c6"/>
<polygon points="327.0,335.2 329.4,335.2 330.1,336.5 327.7,336.5" fill="#8d8dd6"/>
<polygon points="326.2,339.8 332.1,339.8 334.6,344.2 328.6,344.2" fill="#a6a6a6"/>
<polygon points="327.5,340.7 329.8,340.7 331.3,343.3 329.0,343.3" fill="#c6c6c6"/>
<polygon points="329.4,345.6 335.4,345.6 337.9,350.0 331.8,350.0" fill="#b2b2b2"/>
<polygon points="330.7,346.5 333.0,346.5 334.5,349.1 332.2,349.1" fill="#c6c6c6"/>
<polygon points="333.5,346.7 336.0,346.7 336.7,348.0 334.2,348.0" fill="#80c8be"/>
<polygon points="332.6,351.4 338.7,351.4 341.2,355.8 335.0,355.8" fill="#a6a6a6"/>
<polygon points="333.9,352.2 336.3,352.2 337.8,354.9 335.4,354.9" fill="#c6c6c6"/>
<polygon points="335.8,357.2 342.0,357.2 344.5,361.5 338.2,361.5" fill="#999999"/>
<polygon points="337.1,358.0 339.5,358.0 341.0,360.7 338.6,360.7" fill="#c6c6c6"/>
<polygon points="339.0,362.9 345.3,362.9 347.8,367.3 341.4,367.3" fill="#a6a6a6"/>
<polygon points="340.4,363.8 342.8,363.8 344.3,366.5 341.8,366.5" fill="#c6c6c6"/>
<polygon points="343.3,364.1 345.9,364.1 346.6,365.4 344.0,365.4" fill="#8d8dd6"/>
<polygon points="342.2,368.7 348.6,368.7 351.1,373.1 344.6,373.1" fill="#999999"/>
<polygon points="343.6,369.6 346.0,369.6 347.5,372.2 345.1,372.2" fill="#c6c6c6"/>
<polygon points="346.6,369.9 349.2,369.9 349.9,371.1 347.3,371.1" fill="#8d8dd6"/>
<polygon points="125.0,316.8 306.5,315.9 309.0,325.0 132.0,325.5" fill="#b59a5a"/>
<polygon points="130.0,318.5 304.5,317.8 305.5,322.3 134.0,323.2" fill="#6b6a6a"/>
<polygon points="125.0,316.8 130.0,318.5 134.0,323.2 132.0,325.5" fill="#8a7545"/>
<polygon points="132.0,325.5 309.0,325.0 335.4,374.5 190.0,376.6" fill="#b79d5f"/>
<polygon points="305.0,315.9 310.5,316.5 341.0,373.5 335.4,374.5 309.0,325.0" fill="#a38a50"/>
<line x1="132.0" y1="325.5" x2="190.0" y2="376.6" stroke="#8c7645" stroke-width="0.6"/>
<polygon points="144.0,329.3 163.3,329.3 216.2,375.8 200.4,376.0" fill="#767676"/>
<polygon points="145.3,329.8 153.6,329.8 157.4,333.0 149.2,333.0" fill="#999999"/>
<polygon points="147.2,330.4 150.4,330.4 152.7,332.4 149.6,332.4" fill="#c6c6c6"/>
<polygon points="150.4,334.1 158.6,334.0 162.3,337.3 154.3,337.3" fill="#999999"/>
<polygon points="152.3,334.7 155.4,334.7 157.7,336.6 154.7,336.6" fill="#c6c6c6"/>
<polygon points="156.1,334.9 159.5,334.9 160.5,335.8 157.3,335.8" fill="#8d8dd6"/>
<polygon points="155.5,338.3 163.5,338.3 167.3,341.5 159.4,341.5" fill="#a6a6a6"/>
<polygon points="157.4,338.9 160.5,338.9 162.8,340.9 159.7,340.9" fill="#c6c6c6"/>
<polygon points="161.2,339.1 164.4,339.1 165.5,340.1 162.3,340.1" fill="#80c8be"/>
<polygon points="160.6,342.5 168.5,342.5 172.3,345.7 164.5,345.8" fill="#a6a6a6"/>
<polygon points="162.5,343.2 165.5,343.2 167.8,345.1 164.8,345.1" fill="#c6c6c6"/>
<polygon points="165.8,346.8 173.5,346.7 177.3,350.0 169.6,350.0" fill="#999999"/>
<polygon points="167.6,347.4 170.6,347.4 172.9,349.3 169.9,349.4" fill="#c6c6c6"/>
<polygon points="171.3,347.6 174.4,347.6 175.5,348.5 172.4,348.5" fill="#80c8be"/>
<polygon points="170.9,351.0 178.5,351.0 182.3,354.2 174.8,354.2" fill="#a6a6a6"/>
<polygon points="172.7,351.6 175.6,351.6 177.9,353.6 175.0,353.6" fill="#c6c6c6"/>
<polygon points="176.3,351.8 179.4,351.8 180.5,352.8 177.4,352.8" fill="#80c8be"/>
<polygon points="176.0,355.3 183.5,355.2 187.2,358.4 179.9,358.5" fill="#b2b2b2"/>
<polygon points="177.8,355.9 180.6,355.9 183.0,357.8 180.1,357.8" fill="#c6c6c6"/>
<polygon points="181.1,359.5 188.4,359.5 192.2,362.7 185.0,362.7" fill="#a6a6a6"/>
<polygon points="182.9,360.1 185.7,360.1 188.0,362.1 185.2,362.1" fill="#c6c6c6"/>
<polygon points="186.4,360.3 189.3,360.3 190.4,361.2 187.5,361.3" fill="#80c8be"/>
<polygon points="186.2,363.7 193.4,363.7 197.2,366.9 190.1,367.0" fill="#999999"/>
<polygon points="188.0,364.4 190.7,364.3 193.1,366.3 190.3,366.3" fill="#c6c6c6"/>
<polygon points="191.4,364.6 194.3,364.5 195.4,365.5 192.5,365.5" fill="#8d8dd6"/>
<polygon points="191.3,368.0 198.4,367.9 202.2,371.1 195.2,371.2" fill="#a6a6a6"/>
<polygon points="193.1,368.6 195.8,368.6 198.1,370.5 195.4,370.6" fill="#c6c6c6"/>
<polygon points="196.4,372.2 203.4,372.2 207.2,375.4 200.3,375.4" fill="#a6a6a6"/>
<polygon points="198.2,372.9 200.8,372.8 203.1,374.8 200.5,374.8" fill="#c6c6c6"/>
<polygon points="201.5,373.0 204.3,373.0 205.4,373.9 202.6,374.0" fill="#80c8be"/>
<polygon points="154.9,329.8 163.2,329.8 166.9,333.0 158.7,333.0" fill="#999999"/>
<polygon points="156.8,330.4 160.0,330.4 162.2,332.4 159.1,332.4" fill="#c6c6c6"/>
<polygon points="159.9,334.0 168.0,334.0 171.7,337.2 163.6,337.3" fill="#a6a6a6"/>
<polygon points="161.8,334.7 164.9,334.7 167.1,336.6 164.0,336.6" fill="#c6c6c6"/>
<polygon points="164.8,338.3 172.8,338.3 176.5,341.5 168.6,341.5" fill="#b2b2b2"/>
<polygon points="166.7,338.9 169.8,338.9 172.0,340.8 169.0,340.9" fill="#c6c6c6"/>
<polygon points="170.5,339.1 173.7,339.1 174.8,340.0 171.5,340.0" fill="#80c8be"/>
<polygon points="169.8,342.5 177.7,342.5 181.3,345.7 173.6,345.7" fill="#a6a6a6"/>
<polygon points="171.6,343.1 174.6,343.1 176.9,345.1 173.9,345.1" fill="#c6c6c6"/>
<polygon points="175.3,343.3 178.5,343.3 179.6,344.3 176.4,344.3" fill="#80c8be"/>
<polygon points="174.8,346.7 182.5,346.7 186.2,349.9 178.5,350.0" fill="#a6a6a6"/>
<polygon points="176.6,347.4 179.5,347.4 181.8,349.3 178.8,349.3" fill="#c6c6c6"/>
<polygon points="179.7,351.0 187.3,350.9 191.0,354.2 183.5,354.2" fill="#b2b2b2"/>
<polygon points="181.5,351.6 184.4,351.6 186.7,353.5 183.8,353.6" fill="#c6c6c6"/>
<polygon points="185.1,351.8 188.2,351.8 189.3,352.7 186.2,352.7" fill="#8d8dd6"/>
<polygon points="184.7,355.2 192.1,355.2 195.8,358.4 188.4,358.4" fill="#a6a6a6"/>
<polygon points="186.5,355.8 189.3,355.8 191.6,357.8 188.7,357.8" fill="#c6c6c6"/>
<polygon points="189.6,359.4 197.0,359.4 200.6,362.6 193.4,362.7" fill="#a6a6a6"/>
<polygon points="191.4,360.1 194.2,360.1 196.4,362.0 193.7,362.0" fill="#c6c6c6"/>
<polygon points="194.9,360.3 197.8,360.2 198.9,361.2 195.9,361.2" fill="#8d8dd6"/>
<polygon points="194.6,363.7 201.8,363.6 205.4,366.8 198.4,366.9" fill="#b2b2b2"/>
<polygon points="196.3,364.3 199.1,364.3 201.3,366.2 198.6,366.3" fill="#c6c6c6"/>
<polygon points="199.7,364.5 202.7,364.5 203.7,365.4 200.8,365.4" fill="#8d8dd6"/>
<polygon points="199.5,367.9 206.6,367.8 210.3,371.1 203.3,371.1" fill="#a6a6a6"/>
<polygon points="201.3,368.5 204.0,368.5 206.2,370.5 203.5,370.5" fill="#c6c6c6"/>
<polygon points="204.6,368.7 207.5,368.7 208.5,369.6 205.7,369.7" fill="#8d8dd6"/>
<polygon points="204.5,372.1 211.4,372.1 215.1,375.3 208.3,375.4" fill="#999999"/>
<polygon points="206.2,372.8 208.9,372.7 211.1,374.7 208.5,374.7" fill="#c6c6c6"/>
<polygon points="209.5,372.9 212.3,372.9 213.4,373.9 210.6,373.9" fill="#d86a6a"/>
<polygon points="178.5,329.3 197.2,329.3 244.1,375.5 228.7,375.7" fill="#767676"/>
<polygon points="179.7,329.8 187.7,329.8 191.1,333.0 183.2,333.0" fill="#999999"/>
<polygon points="181.5,330.4 184.6,330.4 186.6,332.4 183.6,332.4" fill="#c6c6c6"/>
<polygon points="185.3,330.6 188.5,330.6 189.5,331.6 186.2,331.6" fill="#d86a6a"/>
<polygon points="184.3,334.0 192.1,334.0 195.5,337.2 187.7,337.2" fill="#a6a6a6"/>
<polygon points="186.0,334.6 189.1,334.6 191.1,336.6 188.1,336.6" fill="#c6c6c6"/>
<polygon points="189.7,334.9 192.9,334.9 193.9,335.8 190.7,335.8" fill="#80c8be"/>
<polygon points="188.8,338.2 196.6,338.2 199.9,341.4 192.3,341.4" fill="#b2b2b2"/>
<polygon points="190.6,338.9 193.5,338.9 195.6,340.8 192.7,340.8" fill="#c6c6c6"/>
<polygon points="193.4,342.4 201.0,342.4 204.4,345.6 196.8,345.6" fill="#a6a6a6"/>
<polygon points="195.1,343.1 198.0,343.1 200.1,345.0 197.2,345.0" fill="#c6c6c6"/>
<polygon points="197.9,346.7 205.4,346.6 208.8,349.8 201.4,349.9" fill="#999999"/>
<polygon points="199.6,347.3 202.5,347.3 204.6,349.2 201.7,349.2" fill="#c6c6c6"/>
<polygon points="202.5,350.9 209.8,350.8 213.2,354.0 205.9,354.1" fill="#a6a6a6"/>
<polygon points="204.2,351.5 207.0,351.5 209.1,353.4 206.3,353.4" fill="#c6c6c6"/>
<polygon points="207.6,351.7 210.6,351.7 211.6,352.6 208.6,352.6" fill="#80c8be"/>
<polygon points="207.0,355.1 214.3,355.0 217.6,358.2 210.5,358.3" fill="#a6a6a6"/>
<polygon points="208.7,355.7 211.5,355.7 213.5,357.6 210.8,357.6" fill="#c6c6c6"/>
<polygon points="211.6,359.3 218.7,359.3 222.0,362.4 215.0,362.5" fill="#a6a6a6"/>
<polygon points="213.2,359.9 216.0,359.9 218.0,361.8 215.3,361.9" fill="#c6c6c6"/>
<polygon points="216.1,363.5 223.1,363.5 226.5,366.7 219.6,366.7" fill="#999999"/>
<polygon points="217.8,364.1 220.5,364.1 222.5,366.1 219.9,366.1" fill="#c6c6c6"/>
<polygon points="221.1,364.3 223.9,364.3 224.9,365.2 222.1,365.2" fill="#8d8dd6"/>
<polygon points="220.7,367.7 227.5,367.7 230.9,370.9 224.1,370.9" fill="#b2b2b2"/>
<polygon points="222.3,368.3 224.9,368.3 227.0,370.3 224.4,370.3" fill="#c6c6c6"/>
<polygon points="225.6,368.5 228.3,368.5 229.3,369.4 226.5,369.5" fill="#80c8be"/>
<polygon points="225.2,371.9 232.0,371.9 235.3,375.1 228.7,375.1" fill="#a6a6a6"/>
<polygon points="226.8,372.6 229.4,372.5 231.5,374.5 228.9,374.5" fill="#c6c6c6"/>
<polygon points="230.0,372.7 232.8,372.7 233.7,373.6 231.0,373.7" fill="#8d8dd6"/>
<polygon points="189.0,329.8 197.1,329.8 200.3,333.0 192.4,333.0" fill="#a6a6a6"/>
<polygon points="190.8,330.4 193.9,330.4 195.9,332.4 192.8,332.4" fill="#c6c6c6"/>
<polygon points="194.6,330.6 197.8,330.6 198.8,331.6 195.5,331.6" fill="#80c8be"/>
<polygon points="193.4,334.0 201.3,334.0 204.6,337.2 196.8,337.2" fill="#a6a6a6"/>
<polygon points="195.2,334.6 198.2,334.6 200.2,336.6 197.2,336.6" fill="#c6c6c6"/>
<polygon points="197.8,338.2 205.6,338.2 208.8,341.4 201.2,341.4" fill="#a6a6a6"/>
<polygon points="199.6,338.8 202.5,338.8 204.5,340.8 201.6,340.8" fill="#c6c6c6"/>
<polygon points="202.2,342.4 209.9,342.4 213.1,345.6 205.6,345.6" fill="#a6a6a6"/>
<polygon points="204.0,343.0 206.9,343.0 208.9,345.0 206.0,345.0" fill="#c6c6c6"/>
<polygon points="206.6,346.6 214.1,346.6 217.4,349.8 210.0,349.8" fill="#b2b2b2"/>
<polygon points="208.3,347.3 211.2,347.2 213.2,349.2 210.4,349.2" fill="#c6c6c6"/>
<polygon points="211.0,350.8 218.4,350.8 221.7,354.0 214.4,354.0" fill="#b2b2b2"/>
<polygon points="212.7,351.5 215.6,351.4 217.5,353.4 214.7,353.4" fill="#c6c6c6"/>
<polygon points="216.2,351.7 219.2,351.6 220.1,352.6 217.1,352.6" fill="#8d8dd6"/>
<polygon points="215.4,355.0 222.7,355.0 225.9,358.2 218.8,358.2" fill="#a6a6a6"/>
<polygon points="217.1,355.7 219.9,355.6 221.9,357.6 219.1,357.6" fill="#c6c6c6"/>
<polygon points="219.8,359.2 227.0,359.2 230.2,362.4 223.2,362.4" fill="#999999"/>
<polygon points="221.5,359.9 224.2,359.8 226.2,361.8 223.5,361.8" fill="#c6c6c6"/>
<polygon points="224.2,363.4 231.2,363.4 234.5,366.6 227.6,366.6" fill="#a6a6a6"/>
<polygon points="225.9,364.1 228.6,364.1 230.5,366.0 227.9,366.0" fill="#c6c6c6"/>
<polygon points="229.2,364.3 232.0,364.2 232.9,365.2 230.1,365.2" fill="#8d8dd6"/>
<polygon points="228.6,367.7 235.5,367.6 238.7,370.8 232.0,370.9" fill="#999999"/>
<polygon points="230.3,368.3 232.9,368.3 234.9,370.2 232.3,370.2" fill="#c6c6c6"/>
<polygon points="233.0,371.9 239.8,371.8 243.0,375.0 236.4,375.1" fill="#a6a6a6"/>
<polygon points="234.6,372.5 237.2,372.5 239.2,374.4 236.7,374.4" fill="#c6c6c6"/>
<polygon points="213.0,329.3 232.0,329.3 272.7,375.2 257.1,375.3" fill="#767676"/>
<polygon points="214.1,329.8 222.3,329.8 225.2,333.0 217.2,333.0" fill="#999999"/>
<polygon points="215.9,330.4 219.0,330.4 220.8,332.4 217.7,332.4" fill="#c6c6c6"/>
<polygon points="219.7,330.6 223.0,330.6 223.8,331.6 220.5,331.6" fill="#80c8be"/>
<polygon points="218.1,334.0 226.2,334.0 229.1,337.2 221.2,337.2" fill="#a6a6a6"/>
<polygon points="219.9,334.6 222.9,334.6 224.7,336.5 221.7,336.5" fill="#c6c6c6"/>
<polygon points="222.1,338.2 230.0,338.2 233.0,341.3 225.2,341.4" fill="#b2b2b2"/>
<polygon points="223.8,338.8 226.9,338.8 228.7,340.7 225.7,340.7" fill="#c6c6c6"/>
<polygon points="226.1,342.4 233.9,342.3 236.8,345.5 229.2,345.5" fill="#a6a6a6"/>
<polygon points="227.8,343.0 230.8,343.0 232.6,344.9 229.6,344.9" fill="#c6c6c6"/>
<polygon points="230.1,346.5 237.8,346.5 240.7,349.7 233.2,349.7" fill="#a6a6a6"/>
<polygon points="231.8,347.2 234.7,347.2 236.5,349.1 233.6,349.1" fill="#c6c6c6"/>
<polygon points="235.4,347.4 238.4,347.3 239.3,348.3 236.2,348.3" fill="#80c8be"/>
<polygon points="234.1,350.7 241.6,350.7 244.6,353.9 237.2,353.9" fill="#a6a6a6"/>
<polygon points="235.8,351.3 238.6,351.3 240.4,353.3 237.6,353.3" fill="#c6c6c6"/>
<polygon points="238.1,354.9 245.5,354.9 248.4,358.0 241.2,358.1" fill="#b2b2b2"/>
<polygon points="239.7,355.5 242.6,355.5 244.4,357.4 241.6,357.5" fill="#c6c6c6"/>
<polygon points="243.2,355.7 246.2,355.7 247.0,356.6 244.1,356.6" fill="#8d8dd6"/>
<polygon points="242.1,359.1 249.4,359.0 252.3,362.2 245.2,362.3" fill="#999999"/>
<polygon points="243.7,359.7 246.5,359.7 248.3,361.6 245.6,361.6" fill="#c6c6c6"/>
<polygon points="246.1,363.3 253.2,363.2 256.2,366.4 249.2,366.5" fill="#999999"/>
<polygon points="247.7,363.9 250.4,363.9 252.2,365.8 249.5,365.8" fill="#c6c6c6"/>
<polygon points="250.1,367.5 257.1,367.4 260.0,370.6 253.2,370.6" fill="#a6a6a6"/>
<polygon points="251.7,368.1 254.4,368.1 256.2,370.0 253.5,370.0" fill="#c6c6c6"/>
<polygon points="255.0,368.3 257.8,368.2 258.6,369.2 255.8,369.2" fill="#80c8be"/>
<polygon points="254.1,371.7 261.0,371.6 263.9,374.8 257.1,374.8" fill="#b2b2b2"/>
<polygon points="255.7,372.3 258.3,372.2 260.1,374.2 257.5,374.2" fill="#c6c6c6"/>
<polygon points="258.9,372.4 261.7,372.4 262.5,373.3 259.7,373.4" fill="#80c8be"/>
<polygon points="223.6,329.8 231.8,329.8 234.6,333.0 226.5,333.0" fill="#b2b2b2"/>
<polygon points="225.3,330.4 228.5,330.4 230.2,332.3 227.1,332.3" fill="#c6c6c6"/>
<polygon points="229.1,330.6 232.4,330.6 233.2,331.6 230.0,331.6" fill="#80c8be"/>
<polygon points="227.5,334.0 235.5,334.0 238.3,337.1 230.4,337.2" fill="#a6a6a6"/>
<polygon points="229.2,334.6 232.2,334.6 234.0,336.5 230.9,336.5" fill="#c6c6c6"/>
<polygon points="231.3,338.2 239.2,338.1 242.0,341.3 234.2,341.3" fill="#b2b2b2"/>
<polygon points="233.0,338.8 236.0,338.8 237.8,340.7 234.8,340.7" fill="#c6c6c6"/>
<polygon points="235.2,342.3 242.9,342.3 245.7,345.5 238.1,345.5" fill="#999999"/>
<polygon points="236.8,343.0 239.8,342.9 241.5,344.9 238.6,344.9" fill="#c6c6c6"/>
<polygon points="240.4,343.2 243.6,343.1 244.4,344.1 241.3,344.1" fill="#8d8dd6"/>
<polygon points="239.0,346.5 246.6,346.5 249.5,349.7 241.9,349.7" fill="#999999"/>
<polygon points="240.6,347.1 243.6,347.1 245.3,349.0 242.4,349.1" fill="#c6c6c6"/>
<polygon points="242.9,350.7 250.4,350.7 253.2,353.8 245.8,353.9" fill="#a6a6a6"/>
<polygon points="244.5,351.3 247.3,351.3 249.1,353.2 246.2,353.2" fill="#c6c6c6"/>
<polygon points="248.0,351.5 251.0,351.5 251.8,352.4 248.8,352.4" fill="#8d8dd6"/>
<polygon points="246.7,354.9 254.1,354.8 256.9,358.0 249.6,358.0" fill="#b2b2b2"/>
<polygon points="248.3,355.5 251.1,355.5 252.9,357.4 250.1,357.4" fill="#c6c6c6"/>
<polygon points="251.7,355.7 254.7,355.7 255.5,356.6 252.6,356.6" fill="#8d8dd6"/>
<polygon points="250.5,359.0 257.8,359.0 260.6,362.2 253.5,362.2" fill="#b2b2b2"/>
<polygon points="252.1,359.7 254.9,359.6 256.6,361.6 253.9,361.6" fill="#c6c6c6"/>
<polygon points="254.4,363.2 261.5,363.2 264.3,366.3 257.3,366.4" fill="#a6a6a6"/>
<polygon points="256.0,363.8 258.7,363.8 260.4,365.7 257.7,365.8" fill="#c6c6c6"/>
<polygon points="259.3,364.0 262.2,364.0 263.0,364.9 260.1,364.9" fill="#d86a6a"/>
<polygon points="258.2,367.4 265.2,367.3 268.0,370.5 261.2,370.6" fill="#b2b2b2"/>
<polygon points="259.8,368.0 262.4,368.0 264.2,369.9 261.5,369.9" fill="#c6c6c6"/>
<polygon points="263.0,368.2 265.9,368.2 266.7,369.1 263.9,369.1" fill="#80c8be"/>
<polygon points="262.1,371.6 268.9,371.5 271.7,374.7 265.0,374.7" fill="#999999"/>
<polygon points="263.6,372.2 266.2,372.2 268.0,374.1 265.4,374.1" fill="#c6c6c6"/>
<polygon points="246.7,329.3 266.0,329.3 300.8,374.9 284.9,375.0" fill="#767676"/>
<polygon points="247.8,329.8 256.1,329.8 258.6,333.0 250.4,333.0" fill="#a6a6a6"/>
<polygon points="249.5,330.4 252.6,330.4 254.2,332.3 251.0,332.3" fill="#c6c6c6"/>
<polygon points="253.3,330.6 256.6,330.6 257.4,331.5 254.0,331.5" fill="#d86a6a"/>
<polygon points="251.3,334.0 259.4,333.9 261.9,337.1 253.9,337.1" fill="#a6a6a6"/>
<polygon points="252.9,334.6 256.0,334.6 257.6,336.5 254.5,336.5" fill="#c6c6c6"/>
<polygon points="254.7,338.1 262.7,338.1 265.3,341.3 257.3,341.3" fill="#999999"/>
<polygon points="256.3,338.7 259.4,338.7 261.0,340.6 257.9,340.6" fill="#c6c6c6"/>
<polygon points="260.1,338.9 263.3,338.9 264.0,339.8 260.8,339.8" fill="#8d8dd6"/>
<polygon points="258.2,342.3 266.1,342.2 268.6,345.4 260.8,345.4" fill="#a6a6a6"/>
<polygon points="259.8,342.9 262.8,342.9 264.4,344.8 261.4,344.8" fill="#c6c6c6"/>
<polygon points="261.6,346.4 269.4,346.4 271.9,349.6 264.3,349.6" fill="#999999"/>
<polygon points="263.2,347.0 266.2,347.0 267.8,348.9 264.8,349.0" fill="#c6c6c6"/>
<polygon points="265.1,350.6 272.7,350.5 275.2,353.7 267.7,353.7" fill="#a6a6a6"/>
<polygon points="266.7,351.2 269.6,351.2 271.2,353.1 268.3,353.1" fill="#c6c6c6"/>
<polygon points="270.2,351.4 273.3,351.4 274.0,352.3 270.9,352.3" fill="#80c8be"/>
<polygon points="268.5,354.7 276.0,354.7 278.6,357.9 271.2,357.9" fill="#a6a6a6"/>
<polygon points="270.1,355.4 273.0,355.3 274.5,357.3 271.7,357.3" fill="#c6c6c6"/>
<polygon points="272.0,358.9 279.4,358.8 281.9,362.0 274.6,362.1" fill="#b2b2b2"/>
<polygon points="273.6,359.5 276.4,359.5 277.9,361.4 275.1,361.4" fill="#c6c6c6"/>
<polygon points="275.5,363.1 282.7,363.0 285.2,366.2 278.1,366.2" fill="#999999"/>
<polygon points="277.0,363.7 279.8,363.6 281.3,365.6 278.6,365.6" fill="#c6c6c6"/>
<polygon points="278.9,367.2 286.0,367.2 288.6,370.3 281.6,370.4" fill="#a6a6a6"/>
<polygon points="280.4,367.8 283.2,367.8 284.7,369.7 282.0,369.7" fill="#c6c6c6"/>
<polygon points="283.7,368.0 286.6,368.0 287.4,368.9 284.5,368.9" fill="#8d8dd6"/>
<polygon points="282.4,371.4 289.4,371.3 291.9,374.5 285.0,374.5" fill="#a6a6a6"/>
<polygon points="283.9,372.0 286.5,372.0 288.1,373.9 285.5,373.9" fill="#c6c6c6"/>
<polygon points="257.4,329.8 265.7,329.8 268.1,332.9 259.9,333.0" fill="#999999"/>
<polygon points="259.1,330.4 262.2,330.4 263.7,332.3 260.6,332.3" fill="#c6c6c6"/>
<polygon points="260.7,333.9 268.9,333.9 271.3,337.1 263.2,337.1" fill="#b2b2b2"/>
<polygon points="262.4,334.6 265.5,334.6 267.0,336.5 263.9,336.5" fill="#c6c6c6"/>
<polygon points="264.0,338.1 272.1,338.1 274.5,341.2 266.6,341.2" fill="#a6a6a6"/>
<polygon points="265.7,338.7 268.7,338.7 270.2,340.6 267.2,340.6" fill="#c6c6c6"/>
<polygon points="267.3,342.2 275.2,342.2 277.7,345.4 269.9,345.4" fill="#a6a6a6"/>
<polygon points="268.9,342.9 272.0,342.9 273.5,344.8 270.5,344.8" fill="#c6c6c6"/>
<polygon points="270.7,346.4 278.4,346.4 280.8,349.5 273.2,349.5" fill="#a6a6a6"/>
<polygon points="272.2,347.0 275.2,347.0 276.7,348.9 273.7,348.9" fill="#c6c6c6"/>
<polygon points="274.0,350.5 281.6,350.5 284.0,353.7 276.5,353.7" fill="#b2b2b2"/>
<polygon points="275.5,351.2 278.4,351.1 279.9,353.1 277.0,353.1" fill="#c6c6c6"/>
<polygon points="277.3,354.7 284.8,354.7 287.2,357.8 279.8,357.8" fill="#b2b2b2"/>
<polygon points="278.8,355.3 281.7,355.3 283.2,357.2 280.3,357.2" fill="#c6c6c6"/>
<polygon points="282.3,355.5 285.3,355.5 286.0,356.4 283.0,356.4" fill="#80c8be"/>
<polygon points="280.6,358.8 287.9,358.8 290.4,361.9 283.1,362.0" fill="#a6a6a6"/>
<polygon points="282.1,359.5 284.9,359.4 286.4,361.3 283.6,361.4" fill="#c6c6c6"/>
<polygon points="285.5,359.6 288.5,359.6 289.2,360.5 286.2,360.6" fill="#80c8be"/>
<polygon points="283.9,363.0 291.1,362.9 293.5,366.1 286.4,366.1" fill="#b2b2b2"/>
<polygon points="285.4,363.6 288.2,363.6 289.6,365.5 286.9,365.5" fill="#c6c6c6"/>
<polygon points="288.7,363.8 291.7,363.8 292.4,364.7 289.4,364.7" fill="#80c8be"/>
<polygon points="287.2,367.1 294.3,367.1 296.7,370.2 289.7,370.3" fill="#a6a6a6"/>
<polygon points="288.7,367.8 291.4,367.7 292.9,369.6 290.2,369.7" fill="#c6c6c6"/>
<polygon points="292.0,367.9 294.9,367.9 295.5,368.8 292.7,368.8" fill="#80c8be"/>
<polygon points="290.5,371.3 297.5,371.2 299.9,374.4 293.0,374.4" fill="#b2b2b2"/>
<polygon points="292.0,371.9 294.6,371.9 296.1,373.8 293.5,373.8" fill="#c6c6c6"/>
<polygon points="281.4,329.3 300.7,329.3 329.6,374.5 313.6,374.7" fill="#767676"/>
<polygon points="282.4,329.8 290.7,329.8 292.8,332.9 284.6,332.9" fill="#b2b2b2"/>
<polygon points="284.0,330.4 287.2,330.4 288.5,332.3 285.3,332.3" fill="#c6c6c6"/>
<polygon points="285.3,333.9 293.5,333.9 295.6,337.0 287.6,337.1" fill="#a6a6a6"/>
<polygon points="286.9,334.5 290.0,334.5 291.3,336.4 288.2,336.4" fill="#c6c6c6"/>
<polygon points="288.3,338.1 296.3,338.0 298.4,341.2 290.5,341.2" fill="#a6a6a6"/>
<polygon points="289.8,338.7 292.9,338.7 294.2,340.6 291.1,340.6" fill="#c6c6c6"/>
<polygon points="291.2,342.2 299.1,342.2 301.2,345.3 293.4,345.3" fill="#a6a6a6"/>
<polygon points="292.7,342.8 295.7,342.8 297.0,344.7 294.0,344.7" fill="#c6c6c6"/>
<polygon points="296.3,343.0 299.5,343.0 300.1,343.9 297.0,343.9" fill="#80c8be"/>
<polygon points="294.1,346.3 301.9,346.3 304.0,349.4 296.3,349.4" fill="#a6a6a6"/>
<polygon points="295.6,346.9 298.6,346.9 299.9,348.8 296.9,348.8" fill="#c6c6c6"/>
<polygon points="297.0,350.4 304.6,350.4 306.8,353.5 299.2,353.6" fill="#a6a6a6"/>
<polygon points="298.5,351.1 301.4,351.0 302.7,352.9 299.8,353.0" fill="#c6c6c6"/>
<polygon points="302.0,351.2 305.1,351.2 305.7,352.1 302.6,352.1" fill="#80c8be"/>
<polygon points="299.9,354.6 307.4,354.5 309.5,357.7 302.1,357.7" fill="#a6a6a6"/>
<polygon points="301.4,355.2 304.3,355.2 305.6,357.1 302.7,357.1" fill="#c6c6c6"/>
<polygon points="302.8,358.7 310.2,358.6 312.3,361.8 305.0,361.8" fill="#b2b2b2"/>
<polygon points="304.3,359.3 307.1,359.3 308.4,361.2 305.6,361.2" fill="#c6c6c6"/>
<polygon points="307.7,359.5 310.7,359.5 311.3,360.4 308.3,360.4" fill="#8d8dd6"/>
<polygon points="305.7,362.8 313.0,362.8 315.1,365.9 308.0,366.0" fill="#a6a6a6"/>
<polygon points="307.2,363.4 310.0,363.4 311.3,365.3 308.5,365.3" fill="#c6c6c6"/>
<polygon points="308.7,367.0 315.8,366.9 317.9,370.0 310.9,370.1" fill="#b2b2b2"/>
<polygon points="310.1,367.6 312.8,367.5 314.1,369.4 311.4,369.5" fill="#c6c6c6"/>
<polygon points="313.4,367.7 316.3,367.7 316.9,368.6 314.0,368.6" fill="#80c8be"/>
<polygon points="311.6,371.1 318.6,371.0 320.7,374.1 313.8,374.2" fill="#b2b2b2"/>
<polygon points="313.0,371.7 315.7,371.7 317.0,373.6 314.3,373.6" fill="#c6c6c6"/>
<polygon points="292.1,329.8 300.3,329.8 302.3,332.9 294.2,332.9" fill="#a6a6a6"/>
<polygon points="293.6,330.4 296.8,330.4 298.0,332.3 294.9,332.3" fill="#c6c6c6"/>
<polygon points="297.4,330.6 300.8,330.6 301.4,331.5 298.0,331.5" fill="#d86a6a"/>
<polygon points="294.8,333.9 303.0,333.9 305.0,337.0 296.9,337.0" fill="#999999"/>
<polygon points="296.4,334.5 299.5,334.5 300.7,336.4 297.6,336.4" fill="#c6c6c6"/>
<polygon points="300.1,334.7 303.4,334.7 304.0,335.6 300.7,335.6" fill="#d86a6a"/>
<polygon points="297.6,338.0 305.6,338.0 307.6,341.1 299.7,341.2" fill="#999999"/>
<polygon points="299.1,338.7 302.2,338.6 303.4,340.5 300.4,340.5" fill="#c6c6c6"/>
<polygon points="302.8,338.9 306.0,338.8 306.6,339.7 303.4,339.8" fill="#d86a6a"/>
<polygon points="300.4,342.2 308.2,342.1 310.2,345.3 302.5,345.3" fill="#b2b2b2"/>
<polygon points="301.9,342.8 304.9,342.8 306.1,344.7 303.1,344.7" fill="#c6c6c6"/>
<polygon points="303.1,346.3 310.9,346.2 312.9,349.4 305.2,349.4" fill="#a6a6a6"/>
<polygon points="304.6,346.9 307.6,346.9 308.8,348.8 305.9,348.8" fill="#c6c6c6"/>
<polygon points="308.2,347.1 311.3,347.1 311.9,348.0 308.8,348.0" fill="#d86a6a"/>
<polygon points="305.9,350.4 313.5,350.4 315.5,353.5 308.0,353.5" fill="#a6a6a6"/>
<polygon points="307.4,351.0 310.3,351.0 311.5,352.9 308.6,352.9" fill="#c6c6c6"/>
<polygon points="310.9,351.2 314.0,351.2 314.5,352.1 311.4,352.1" fill="#80c8be"/>
<polygon points="308.6,354.5 316.2,354.5 318.2,357.6 310.7,357.6" fill="#a6a6a6"/>
<polygon points="310.1,355.1 313.0,355.1 314.2,357.0 311.4,357.0" fill="#c6c6c6"/>
<polygon points="311.4,358.6 318.8,358.6 320.8,361.7 313.5,361.8" fill="#a6a6a6"/>
<polygon points="312.8,359.2 315.7,359.2 316.9,361.1 314.1,361.1" fill="#c6c6c6"/>
<polygon points="314.2,362.8 321.4,362.7 323.4,365.8 316.3,365.9" fill="#a6a6a6"/>
<polygon points="315.6,363.4 318.4,363.3 319.6,365.2 316.9,365.3" fill="#c6c6c6"/>
<polygon points="316.9,366.9 324.1,366.8 326.1,369.9 319.0,370.0" fill="#a6a6a6"/>
<polygon points="318.3,367.5 321.1,367.5 322.3,369.4 319.6,369.4" fill="#c6c6c6"/>
<polygon points="321.6,367.7 324.5,367.6 325.1,368.5 322.2,368.6" fill="#80c8be"/>
<polygon points="319.7,371.0 326.7,370.9 328.7,374.1 321.8,374.1" fill="#b2b2b2"/>
<polygon points="321.1,371.6 323.8,371.6 325.0,373.5 322.4,373.5" fill="#c6c6c6"/>
<polygon points="553.0,295.8 746.7,294.5 735.0,312.5 553.0,313.0" fill="#8b8b8b"/>
<polygon points="554.4,296.8 570.9,296.7 570.5,303.6 554.3,303.7" fill="#b9b9b9"/>
<polygon points="557.2,297.7 561.1,297.6 560.9,302.8 557.2,302.8" fill="#d6d6d6"/>
<polygon points="573.7,296.7 590.2,296.6 589.3,303.5 573.2,303.6" fill="#b9b9b9"/>
<polygon points="576.5,297.5 580.3,297.5 579.8,302.7 576.0,302.7" fill="#d6d6d6"/>
<polygon points="593.0,296.6 609.5,296.5 608.2,303.4 592.0,303.5" fill="#b9b9b9"/>
<polygon points="595.7,297.4 599.6,297.4 598.7,302.6 594.9,302.6" fill="#d6d6d6"/>
<polygon points="612.3,296.4 628.8,296.3 627.0,303.3 610.8,303.4" fill="#b9b9b9"/>
<polygon points="615.0,297.3 618.8,297.3 617.6,302.5 613.8,302.5" fill="#d6d6d6"/>
<polygon points="631.6,296.3 648.1,296.2 645.8,303.3 629.6,303.3" fill="#b9b9b9"/>
<polygon points="634.2,297.2 638.0,297.2 636.5,302.4 632.7,302.4" fill="#d6d6d6"/>
<polygon points="650.8,296.2 667.4,296.1 664.7,303.2 648.5,303.2" fill="#b9b9b9"/>
<polygon points="653.4,297.1 657.3,297.0 655.4,302.3 651.6,302.3" fill="#d6d6d6"/>
<polygon points="670.1,296.1 686.7,296.0 683.5,303.1 667.3,303.1" fill="#b9b9b9"/>
<polygon points="672.7,296.9 676.5,296.9 674.3,302.2 670.5,302.2" fill="#d6d6d6"/>
<polygon points="689.4,295.9 706.0,295.8 702.3,303.0 686.1,303.1" fill="#b9b9b9"/>
<polygon points="691.9,296.8 695.8,296.8 693.2,302.1 689.4,302.2" fill="#d6d6d6"/>
<polygon points="708.7,295.8 725.3,295.7 721.2,302.9 705.0,303.0" fill="#b9b9b9"/>
<polygon points="711.2,296.7 715.0,296.7 712.1,302.0 708.3,302.1" fill="#d6d6d6"/>
<polygon points="728.0,295.7 744.6,295.6 740.0,302.8 723.8,302.9" fill="#b9b9b9"/>
<polygon points="730.4,296.6 734.3,296.6 730.9,301.9 727.2,302.0" fill="#d6d6d6"/>
<polygon points="554.3,305.4 570.4,305.4 570.0,312.3 554.3,312.3" fill="#b9b9b9"/>
<polygon points="557.1,306.3 560.8,306.3 560.7,311.4 557.0,311.4" fill="#d6d6d6"/>
<polygon points="573.0,305.3 589.1,305.3 588.2,312.2 572.5,312.3" fill="#b9b9b9"/>
<polygon points="575.8,306.2 579.5,306.2 579.0,311.4 575.3,311.4" fill="#d6d6d6"/>
<polygon points="591.7,305.3 607.8,305.2 606.5,312.2 590.8,312.2" fill="#b9b9b9"/>
<polygon points="594.4,306.1 598.1,306.1 597.3,311.3 593.6,311.3" fill="#d6d6d6"/>
<polygon points="610.5,305.2 626.5,305.1 624.7,312.1 609.0,312.1" fill="#b9b9b9"/>
<polygon points="613.1,306.0 616.8,306.0 615.6,311.3 611.9,311.3" fill="#d6d6d6"/>
<polygon points="629.2,305.1 645.3,305.0 643.0,312.0 627.3,312.1" fill="#b9b9b9"/>
<polygon points="631.7,305.9 635.5,305.9 633.9,311.2 630.2,311.2" fill="#d6d6d6"/>
<polygon points="647.9,305.0 664.0,304.9 661.2,312.0 645.5,312.0" fill="#b9b9b9"/>
<polygon points="650.4,305.9 654.1,305.9 652.2,311.1 648.6,311.2" fill="#d6d6d6"/>
<polygon points="666.6,304.9 682.7,304.8 679.5,311.9 663.8,312.0" fill="#b9b9b9"/>
<polygon points="669.0,305.8 672.8,305.8 670.5,311.1 666.9,311.1" fill="#d6d6d6"/>
<polygon points="685.3,304.8 701.4,304.8 697.7,311.9 682.0,311.9" fill="#b9b9b9"/>
<polygon points="687.7,305.7 691.4,305.7 688.8,311.0 685.2,311.0" fill="#d6d6d6"/>
<polygon points="704.0,304.7 720.1,304.7 715.9,311.8 700.3,311.9" fill="#b9b9b9"/>
<polygon points="706.4,305.6 710.1,305.6 707.1,311.0 703.5,311.0" fill="#d6d6d6"/>
<polygon points="722.7,304.7 738.8,304.6 734.2,311.8 718.5,311.8" fill="#b9b9b9"/>
<polygon points="725.0,305.5 728.7,305.5 725.4,310.9 721.8,310.9" fill="#d6d6d6"/>
<line x1="553.0" y1="303.9" x2="741.2" y2="303.0" stroke="#8a8ad8" stroke-width="1.0"/>
<line x1="553.0" y1="296.3" x2="746.3" y2="295.0" stroke="#d8d8d8" stroke-width="0.8"/>
<polygon points="552.0,312.6 571.0,312.6 556.0,373.8 537.0,373.8" fill="#767676"/>
<polygon points="552.5,313.3 560.7,313.3 559.5,318.0 551.3,318.0" fill="#a6a6a6"/>
<polygon points="553.4,314.3 556.5,314.3 555.8,317.1 552.7,317.1" fill="#c6c6c6"/>
<polygon points="551.0,319.5 559.2,319.5 558.0,324.1 549.8,324.1" fill="#999999"/>
<polygon points="551.9,320.4 555.0,320.4 554.3,323.2 551.2,323.2" fill="#c6c6c6"/>
<polygon points="549.5,325.6 557.7,325.6 556.5,330.2 548.3,330.2" fill="#b2b2b2"/>
<polygon points="550.4,326.5 553.5,326.5 552.8,329.3 549.7,329.3" fill="#c6c6c6"/>
<polygon points="553.9,326.8 557.3,326.8 556.9,328.1 553.6,328.1" fill="#8d8dd6"/>
<polygon points="548.0,331.7 556.2,331.7 555.0,336.3 546.8,336.3" fill="#b2b2b2"/>
<polygon points="548.9,332.6 552.0,332.6 551.3,335.4 548.2,335.4" fill="#c6c6c6"/>
<polygon points="546.5,337.8 554.7,337.8 553.5,342.5 545.3,342.5" fill="#999999"/>
<polygon points="547.4,338.7 550.5,338.7 549.8,341.5 546.7,341.5" fill="#c6c6c6"/>
<polygon points="550.9,339.0 554.3,339.0 553.9,340.4 550.6,340.4" fill="#80c8be"/>
<polygon points="545.0,343.9 553.2,343.9 552.0,348.6 543.8,348.6" fill="#a6a6a6"/>
<polygon points="545.9,344.9 549.0,344.9 548.3,347.7 545.2,347.7" fill="#c6c6c6"/>
<polygon points="543.5,350.1 551.7,350.1 550.5,354.7 542.3,354.7" fill="#999999"/>
<polygon points="544.4,351.0 547.5,351.0 546.8,353.8 543.7,353.8" fill="#c6c6c6"/>
<polygon points="542.0,356.2 550.2,356.2 549.0,360.8 540.8,360.8" fill="#999999"/>
<polygon points="542.9,357.1 546.0,357.1 545.3,359.9 542.2,359.9" fill="#c6c6c6"/>
<polygon points="540.5,362.3 548.7,362.3 547.5,366.9 539.3,366.9" fill="#a6a6a6"/>
<polygon points="541.4,363.2 544.5,363.2 543.8,366.0 540.7,366.0" fill="#c6c6c6"/>
<polygon points="544.9,363.5 548.3,363.5 547.9,364.9 544.6,364.9" fill="#8d8dd6"/>
<polygon points="539.0,368.4 547.2,368.4 546.0,373.1 537.8,373.1" fill="#b2b2b2"/>
<polygon points="539.9,369.3 543.0,369.3 542.3,372.1 539.2,372.1" fill="#c6c6c6"/>
<polygon points="543.4,369.6 546.8,369.6 546.4,371.0 543.1,371.0" fill="#80c8be"/>
<polygon points="562.0,313.3 570.2,313.3 569.0,318.0 560.8,318.0" fill="#a6a6a6"/>
<polygon points="562.9,314.3 566.0,314.3 565.3,317.1 562.2,317.1" fill="#c6c6c6"/>
<polygon points="566.4,314.6 569.8,314.6 569.4,315.9 566.1,315.9" fill="#d86a6a"/>
<polygon points="560.5,319.5 568.7,319.5 567.5,324.1 559.3,324.1" fill="#b2b2b2"/>
<polygon points="561.4,320.4 564.5,320.4 563.8,323.2 560.7,323.2" fill="#c6c6c6"/>
<polygon points="564.9,320.7 568.3,320.7 567.9,322.0 564.6,322.0" fill="#8d8dd6"/>
<polygon points="559.0,325.6 567.2,325.6 566.0,330.2 557.8,330.2" fill="#999999"/>
<polygon points="559.9,326.5 563.0,326.5 562.3,329.3 559.2,329.3" fill="#c6c6c6"/>
<polygon points="557.5,331.7 565.7,331.7 564.5,336.3 556.3,336.3" fill="#b2b2b2"/>
<polygon points="558.4,332.6 561.5,332.6 560.8,335.4 557.7,335.4" fill="#c6c6c6"/>
<polygon points="556.0,337.8 564.2,337.8 563.0,342.5 554.8,342.5" fill="#a6a6a6"/>
<polygon points="556.9,338.7 560.0,338.7 559.3,341.5 556.2,341.5" fill="#c6c6c6"/>
<polygon points="554.5,343.9 562.7,343.9 561.5,348.6 553.3,348.6" fill="#a6a6a6"/>
<polygon points="555.4,344.9 558.5,344.9 557.8,347.7 554.7,347.7" fill="#c6c6c6"/>
<polygon points="553.0,350.1 561.2,350.1 560.0,354.7 551.8,354.7" fill="#a6a6a6"/>
<polygon points="553.9,351.0 557.0,351.0 556.3,353.8 553.2,353.8" fill="#c6c6c6"/>
<polygon points="551.5,356.2 559.7,356.2 558.5,360.8 550.3,360.8" fill="#a6a6a6"/>
<polygon points="552.4,357.1 555.5,357.1 554.8,359.9 551.7,359.9" fill="#c6c6c6"/>
<polygon points="550.0,362.3 558.2,362.3 557.0,366.9 548.8,366.9" fill="#a6a6a6"/>
<polygon points="550.9,363.2 554.0,363.2 553.3,366.0 550.2,366.0" fill="#c6c6c6"/>
<polygon points="554.4,363.5 557.8,363.5 557.4,364.9 554.1,364.9" fill="#d86a6a"/>
<polygon points="548.5,368.4 556.7,368.4 555.5,373.1 547.3,373.1" fill="#a6a6a6"/>
<polygon points="549.4,369.3 552.5,369.3 551.8,372.1 548.7,372.1" fill="#c6c6c6"/>
<polygon points="571.0,314.5 748.6,313.0 746.0,320.5 571.0,321.0" fill="#b59a5a"/>
<polygon points="574.0,316.0 744.0,315.0 742.0,319.0 575.0,319.5" fill="#6b6a6a"/>
<polygon points="571.0,321.0 746.0,320.5 717.0,373.5 557.0,373.8" fill="#b79d5f"/>
<polygon points="567.0,315.0 571.0,314.5 571.0,321.0 557.0,373.8 553.0,373.8" fill="#a38a50"/>
<polygon points="746.0,320.5 748.6,313.0 720.0,372.0 717.0,373.5" fill="#a38a50"/>
<polygon points="575.0,327.0 595.0,327.0 575.7,371.8 558.9,372.0" fill="#767676"/>
<polygon points="575.5,327.5 584.1,327.5 582.9,330.6 574.4,330.6" fill="#a6a6a6"/>
<polygon points="576.5,328.1 579.8,328.1 579.1,330.0 575.8,330.0" fill="#c6c6c6"/>
<polygon points="580.2,328.3 583.7,328.3 583.3,329.2 579.9,329.2" fill="#80c8be"/>
<polygon points="574.1,331.6 582.5,331.6 581.3,334.7 572.9,334.7" fill="#b2b2b2"/>
<polygon points="575.0,332.2 578.2,332.2 577.5,334.1 574.3,334.1" fill="#c6c6c6"/>
<polygon points="572.6,335.7 580.9,335.7 579.7,338.8 571.5,338.8" fill="#a6a6a6"/>
<polygon points="573.5,336.3 576.7,336.3 576.0,338.2 572.8,338.2" fill="#c6c6c6"/>
<polygon points="571.1,339.8 579.3,339.7 578.1,342.9 570.0,342.9" fill="#a6a6a6"/>
<polygon points="572.0,340.4 575.2,340.4 574.5,342.3 571.3,342.3" fill="#c6c6c6"/>
<polygon points="575.6,340.6 578.9,340.6 578.6,341.5 575.2,341.5" fill="#80c8be"/>
<polygon points="569.6,343.9 577.7,343.8 576.5,346.9 568.5,347.0" fill="#b2b2b2"/>
<polygon points="570.5,344.5 573.6,344.5 572.9,346.3 569.9,346.4" fill="#c6c6c6"/>
<polygon points="574.0,344.7 577.3,344.6 577.0,345.5 573.7,345.6" fill="#8d8dd6"/>
<polygon points="568.2,348.0 576.1,347.9 574.9,351.0 567.0,351.1" fill="#b2b2b2"/>
<polygon points="569.0,348.6 572.1,348.5 571.4,350.4 568.4,350.4" fill="#c6c6c6"/>
<polygon points="566.7,352.0 574.5,352.0 573.3,355.1 565.6,355.2" fill="#a6a6a6"/>
<polygon points="567.6,352.7 570.6,352.6 569.9,354.5 566.9,354.5" fill="#c6c6c6"/>
<polygon points="565.2,356.1 572.9,356.1 571.7,359.2 564.1,359.2" fill="#999999"/>
<polygon points="566.1,356.7 569.0,356.7 568.3,358.6 565.4,358.6" fill="#c6c6c6"/>
<polygon points="563.7,360.2 571.3,360.2 570.1,363.3 562.6,363.3" fill="#999999"/>
<polygon points="564.6,360.8 567.5,360.8 566.8,362.7 563.9,362.7" fill="#c6c6c6"/>
<polygon points="562.3,364.3 569.7,364.3 568.5,367.4 561.1,367.4" fill="#a6a6a6"/>
<polygon points="563.1,364.9 565.9,364.9 565.2,366.8 562.4,366.8" fill="#c6c6c6"/>
<polygon points="566.3,365.1 569.3,365.1 569.0,366.0 566.0,366.0" fill="#80c8be"/>
<polygon points="560.8,368.4 568.1,368.3 566.9,371.4 559.7,371.5" fill="#b2b2b2"/>
<polygon points="561.6,369.0 564.4,369.0 563.7,370.9 560.9,370.9" fill="#c6c6c6"/>
<polygon points="585.5,327.5 594.1,327.5 592.8,330.6 584.3,330.6" fill="#999999"/>
<polygon points="586.5,328.1 589.7,328.1 589.0,330.0 585.7,330.0" fill="#c6c6c6"/>
<polygon points="590.2,328.3 593.6,328.3 593.3,329.2 589.8,329.2" fill="#8d8dd6"/>
<polygon points="583.9,331.6 592.4,331.6 591.0,334.7 582.7,334.7" fill="#a6a6a6"/>
<polygon points="584.8,332.2 588.1,332.2 587.3,334.1 584.1,334.1" fill="#c6c6c6"/>
<polygon points="582.3,335.7 590.6,335.6 589.3,338.7 581.0,338.8" fill="#b2b2b2"/>
<polygon points="583.2,336.3 586.4,336.3 585.6,338.1 582.4,338.1" fill="#c6c6c6"/>
<polygon points="586.8,336.5 590.2,336.5 589.8,337.4 586.4,337.4" fill="#8d8dd6"/>
<polygon points="580.7,339.7 588.9,339.7 587.5,342.8 579.4,342.8" fill="#999999"/>
<polygon points="581.6,340.4 584.7,340.3 583.9,342.2 580.8,342.2" fill="#c6c6c6"/>
<polygon points="579.0,343.8 587.1,343.8 585.8,346.9 577.8,346.9" fill="#b2b2b2"/>
<polygon points="579.9,344.4 583.0,344.4 582.2,346.3 579.2,346.3" fill="#c6c6c6"/>
<polygon points="577.4,347.9 585.4,347.9 584.1,351.0 576.2,351.0" fill="#a6a6a6"/>
<polygon points="578.3,348.5 581.3,348.5 580.6,350.4 577.5,350.4" fill="#c6c6c6"/>
<polygon points="581.7,348.7 584.9,348.7 584.6,349.6 581.3,349.6" fill="#d86a6a"/>
<polygon points="575.8,352.0 583.6,351.9 582.3,355.0 574.6,355.1" fill="#a6a6a6"/>
<polygon points="576.7,352.6 579.7,352.6 578.9,354.5 575.9,354.5" fill="#c6c6c6"/>
<polygon points="580.0,352.8 583.2,352.8 582.8,353.7 579.7,353.7" fill="#80c8be"/>
<polygon points="574.2,356.1 581.9,356.0 580.6,359.1 573.0,359.2" fill="#999999"/>
<polygon points="575.0,356.7 578.0,356.7 577.2,358.5 574.3,358.6" fill="#c6c6c6"/>
<polygon points="572.6,360.2 580.2,360.1 578.8,363.2 571.3,363.3" fill="#b2b2b2"/>
<polygon points="573.4,360.8 576.3,360.7 575.5,362.6 572.6,362.6" fill="#c6c6c6"/>
<polygon points="571.0,364.2 578.4,364.2 577.1,367.3 569.7,367.3" fill="#a6a6a6"/>
<polygon points="571.7,364.8 574.6,364.8 573.8,366.7 571.0,366.7" fill="#c6c6c6"/>
<polygon points="575.0,365.0 578.0,365.0 577.6,365.9 574.6,365.9" fill="#80c8be"/>
<polygon points="569.3,368.3 576.7,368.3 575.4,371.4 568.1,371.4" fill="#a6a6a6"/>
<polygon points="570.1,368.9 572.9,368.9 572.2,370.8 569.4,370.8" fill="#c6c6c6"/>
<polygon points="573.3,369.1 576.2,369.1 575.9,370.0 572.9,370.0" fill="#8d8dd6"/>
<polygon points="608.0,327.0 628.6,327.0 604.1,371.5 586.7,371.7" fill="#767676"/>
<polygon points="608.5,327.5 617.3,327.5 615.8,330.6 607.0,330.6" fill="#a6a6a6"/>
<polygon points="609.4,328.1 612.8,328.1 611.9,330.0 608.5,330.0" fill="#c6c6c6"/>
<polygon points="606.5,331.6 615.3,331.5 613.7,334.6 605.1,334.6" fill="#999999"/>
<polygon points="607.5,332.2 610.8,332.2 609.9,334.0 606.6,334.0" fill="#c6c6c6"/>
<polygon points="604.6,335.6 613.2,335.6 611.6,338.7 603.1,338.7" fill="#a6a6a6"/>
<polygon points="605.5,336.2 608.8,336.2 607.9,338.1 604.6,338.1" fill="#c6c6c6"/>
<polygon points="602.6,339.7 611.1,339.7 609.5,342.7 601.2,342.8" fill="#999999"/>
<polygon points="603.5,340.3 606.8,340.3 605.8,342.1 602.6,342.2" fill="#c6c6c6"/>
<polygon points="600.7,343.7 609.0,343.7 607.5,346.8 599.2,346.8" fill="#a6a6a6"/>
<polygon points="601.6,344.4 604.8,344.3 603.8,346.2 600.7,346.2" fill="#c6c6c6"/>
<polygon points="598.8,347.8 607.0,347.8 605.4,350.9 597.3,350.9" fill="#a6a6a6"/>
<polygon points="599.6,348.4 602.7,348.4 601.8,350.3 598.7,350.3" fill="#c6c6c6"/>
<polygon points="603.1,348.6 606.5,348.6 606.0,349.5 602.7,349.5" fill="#80c8be"/>
<polygon points="596.8,351.9 604.9,351.8 603.3,354.9 595.3,355.0" fill="#a6a6a6"/>
<polygon points="597.6,352.5 600.7,352.5 599.8,354.3 596.7,354.3" fill="#c6c6c6"/>
<polygon points="601.1,352.7 604.4,352.6 603.9,353.5 600.7,353.6" fill="#8d8dd6"/>
<polygon points="594.9,355.9 602.8,355.9 601.2,359.0 593.4,359.0" fill="#a6a6a6"/>
<polygon points="595.7,356.5 598.7,356.5 597.8,358.4 594.8,358.4" fill="#c6c6c6"/>
<polygon points="592.9,360.0 600.7,359.9 599.2,363.0 591.4,363.1" fill="#a6a6a6"/>
<polygon points="593.7,360.6 596.7,360.6 595.8,362.4 592.8,362.5" fill="#c6c6c6"/>
<polygon points="597.1,360.8 600.2,360.8 599.8,361.6 596.6,361.7" fill="#80c8be"/>
<polygon points="591.0,364.1 598.7,364.0 597.1,367.1 589.5,367.2" fill="#a6a6a6"/>
<polygon points="591.7,364.7 594.7,364.6 593.8,366.5 590.8,366.5" fill="#c6c6c6"/>
<polygon points="589.0,368.1 596.6,368.1 595.0,371.1 587.5,371.2" fill="#b2b2b2"/>
<polygon points="589.8,368.7 592.7,368.7 591.8,370.6 588.9,370.6" fill="#c6c6c6"/>
<polygon points="618.8,327.5 627.6,327.5 625.9,330.6 617.2,330.6" fill="#a6a6a6"/>
<polygon points="619.7,328.1 623.1,328.1 622.1,330.0 618.7,330.0" fill="#c6c6c6"/>
<polygon points="623.5,328.3 627.1,328.3 626.6,329.2 623.0,329.2" fill="#80c8be"/>
<polygon points="616.7,331.5 625.4,331.5 623.7,334.6 615.1,334.6" fill="#a6a6a6"/>
<polygon points="617.6,332.1 620.9,332.1 619.9,334.0 616.6,334.0" fill="#c6c6c6"/>
<polygon points="621.3,332.3 624.8,332.3 624.4,333.2 620.8,333.2" fill="#80c8be"/>
<polygon points="614.6,335.6 623.2,335.6 621.5,338.7 613.0,338.7" fill="#999999"/>
<polygon points="615.5,336.2 618.8,336.2 617.8,338.1 614.5,338.1" fill="#c6c6c6"/>
<polygon points="612.5,339.7 621.0,339.6 619.3,342.7 610.9,342.7" fill="#a6a6a6"/>
<polygon points="613.4,340.3 616.6,340.3 615.6,342.1 612.4,342.1" fill="#c6c6c6"/>
<polygon points="610.4,343.7 618.7,343.7 617.0,346.8 608.8,346.8" fill="#a6a6a6"/>
<polygon points="611.2,344.3 614.4,344.3 613.4,346.2 610.3,346.2" fill="#c6c6c6"/>
<polygon points="608.3,347.8 616.5,347.7 614.8,350.8 606.7,350.8" fill="#999999"/>
<polygon points="609.1,348.4 612.3,348.4 611.3,350.2 608.2,350.2" fill="#c6c6c6"/>
<polygon points="612.6,348.6 616.0,348.5 615.5,349.4 612.2,349.4" fill="#80c8be"/>
<polygon points="606.2,351.8 614.3,351.8 612.6,354.9 604.6,354.9" fill="#b2b2b2"/>
<polygon points="607.0,352.4 610.1,352.4 609.1,354.3 606.0,354.3" fill="#c6c6c6"/>
<polygon points="604.1,355.9 612.1,355.8 610.4,358.9 602.5,359.0" fill="#a6a6a6"/>
<polygon points="604.9,356.5 608.0,356.5 607.0,358.3 603.9,358.3" fill="#c6c6c6"/>
<polygon points="602.0,359.9 609.9,359.9 608.2,363.0 600.4,363.0" fill="#a6a6a6"/>
<polygon points="602.8,360.5 605.8,360.5 604.8,362.4 601.8,362.4" fill="#c6c6c6"/>
<polygon points="606.1,360.7 609.3,360.7 608.8,361.6 605.7,361.6" fill="#8d8dd6"/>
<polygon points="599.9,364.0 607.6,363.9 605.9,367.0 598.3,367.1" fill="#999999"/>
<polygon points="600.7,364.6 603.6,364.6 602.6,366.4 599.7,366.5" fill="#c6c6c6"/>
<polygon points="604.0,364.8 607.1,364.7 606.6,365.6 603.5,365.7" fill="#d86a6a"/>
<polygon points="597.8,368.0 605.4,368.0 603.7,371.0 596.2,371.1" fill="#a6a6a6"/>
<polygon points="598.6,368.6 601.5,368.6 600.5,370.5 597.6,370.5" fill="#c6c6c6"/>
<polygon points="601.8,368.8 604.9,368.8 604.4,369.7 601.3,369.7" fill="#80c8be"/>
<polygon points="641.5,327.0 662.0,327.0 632.3,371.2 615.0,371.4" fill="#767676"/>
<polygon points="641.9,327.5 650.7,327.5 648.8,330.5 640.1,330.6" fill="#a6a6a6"/>
<polygon points="642.8,328.1 646.2,328.1 645.0,329.9 641.7,329.9" fill="#c6c6c6"/>
<polygon points="646.5,328.3 650.1,328.3 649.6,329.2 646.0,329.2" fill="#80c8be"/>
<polygon points="639.5,331.5 648.2,331.5 646.2,334.6 637.7,334.6" fill="#a6a6a6"/>
<polygon points="640.3,332.1 643.7,332.1 642.5,334.0 639.2,334.0" fill="#c6c6c6"/>
<polygon points="644.1,332.3 647.6,332.3 647.0,333.2 643.5,333.2" fill="#8d8dd6"/>
<polygon points="637.1,335.6 645.6,335.5 643.7,338.6 635.2,338.6" fill="#999999"/>
<polygon points="637.9,336.2 641.2,336.2 640.0,338.0 636.8,338.0" fill="#c6c6c6"/>
<polygon points="641.6,336.4 645.0,336.3 644.5,337.2 641.0,337.2" fill="#d86a6a"/>
<polygon points="634.7,339.6 643.1,339.6 641.2,342.6 632.8,342.7" fill="#a6a6a6"/>
<polygon points="635.5,340.2 638.7,340.2 637.6,342.0 634.3,342.1" fill="#c6c6c6"/>
<polygon points="632.2,343.6 640.5,343.6 638.6,346.7 630.4,346.7" fill="#999999"/>
<polygon points="633.0,344.2 636.2,344.2 635.1,346.1 631.9,346.1" fill="#c6c6c6"/>
<polygon points="629.8,347.7 638.0,347.6 636.1,350.7 628.0,350.7" fill="#b2b2b2"/>
<polygon points="630.6,348.3 633.7,348.3 632.6,350.1 629.5,350.1" fill="#c6c6c6"/>
<polygon points="634.1,348.5 637.4,348.4 636.8,349.3 633.5,349.3" fill="#8d8dd6"/>
<polygon points="627.4,351.7 635.5,351.7 633.5,354.7 625.6,354.8" fill="#b2b2b2"/>
<polygon points="628.2,352.3 631.2,352.3 630.1,354.1 627.0,354.2" fill="#c6c6c6"/>
<polygon points="631.6,352.5 634.9,352.5 634.3,353.3 631.0,353.4" fill="#80c8be"/>
<polygon points="625.0,355.7 632.9,355.7 631.0,358.7 623.1,358.8" fill="#a6a6a6"/>
<polygon points="625.7,356.3 628.8,356.3 627.6,358.2 624.6,358.2" fill="#c6c6c6"/>
<polygon points="622.6,359.8 630.4,359.7 628.4,362.8 620.7,362.8" fill="#b2b2b2"/>
<polygon points="623.3,360.4 626.3,360.3 625.1,362.2 622.2,362.2" fill="#c6c6c6"/>
<polygon points="626.6,360.5 629.8,360.5 629.2,361.4 626.0,361.4" fill="#80c8be"/>
<polygon points="620.1,363.8 627.8,363.7 625.9,366.8 618.3,366.9" fill="#999999"/>
<polygon points="620.8,364.4 623.8,364.4 622.6,366.2 619.7,366.3" fill="#c6c6c6"/>
<polygon points="617.7,367.8 625.3,367.8 623.3,370.8 615.9,370.9" fill="#a6a6a6"/>
<polygon points="618.4,368.4 621.3,368.4 620.1,370.3 617.3,370.3" fill="#c6c6c6"/>
<polygon points="652.2,327.5 661.0,327.5 658.9,330.5 650.2,330.5" fill="#a6a6a6"/>
<polygon points="653.0,328.1 656.4,328.1 655.2,329.9 651.8,329.9" fill="#c6c6c6"/>
<polygon points="656.7,328.3 660.3,328.3 659.7,329.2 656.2,329.2" fill="#80c8be"/>
<polygon points="649.6,331.5 658.3,331.5 656.2,334.6 647.6,334.6" fill="#999999"/>
<polygon points="650.4,332.1 653.7,332.1 652.5,334.0 649.2,334.0" fill="#c6c6c6"/>
<polygon points="654.1,332.3 657.6,332.3 657.0,333.2 653.5,333.2" fill="#80c8be"/>
<polygon points="647.0,335.5 655.6,335.5 653.5,338.6 645.1,338.6" fill="#a6a6a6"/>
<polygon points="647.8,336.1 651.1,336.1 649.9,338.0 646.6,338.0" fill="#c6c6c6"/>
<polygon points="644.5,339.6 652.9,339.5 650.8,342.6 642.5,342.6" fill="#b2b2b2"/>
<polygon points="645.3,340.2 648.5,340.2 647.3,342.0 644.1,342.0" fill="#c6c6c6"/>
<polygon points="648.8,340.4 652.3,340.3 651.7,341.2 648.3,341.2" fill="#8d8dd6"/>
<polygon points="641.9,343.6 650.2,343.6 648.2,346.6 639.9,346.7" fill="#a6a6a6"/>
<polygon points="642.7,344.2 645.8,344.2 644.6,346.0 641.5,346.0" fill="#c6c6c6"/>
<polygon points="646.2,344.4 649.6,344.4 649.0,345.3 645.6,345.3" fill="#80c8be"/>
<polygon points="639.3,347.6 647.5,347.6 645.5,350.6 637.4,350.7" fill="#a6a6a6"/>
<polygon points="640.1,348.2 643.2,348.2 642.0,350.1 638.9,350.1" fill="#c6c6c6"/>
<polygon points="636.8,351.6 644.8,351.6 642.8,354.7 634.8,354.7" fill="#a6a6a6"/>
<polygon points="637.5,352.2 640.6,352.2 639.4,354.1 636.3,354.1" fill="#c6c6c6"/>
<polygon points="640.9,352.4 644.2,352.4 643.6,353.3 640.3,353.3" fill="#d86a6a"/>
<polygon points="634.2,355.7 642.1,355.6 640.1,358.7 632.3,358.7" fill="#a6a6a6"/>
<polygon points="634.9,356.3 638.0,356.3 636.7,358.1 633.7,358.1" fill="#c6c6c6"/>
<polygon points="631.6,359.7 639.4,359.6 637.4,362.7 629.7,362.8" fill="#a6a6a6"/>
<polygon points="632.3,360.3 635.3,360.3 634.1,362.1 631.1,362.2" fill="#c6c6c6"/>
<polygon points="629.1,363.7 636.8,363.7 634.7,366.7 627.1,366.8" fill="#a6a6a6"/>
<polygon points="629.8,364.3 632.7,364.3 631.5,366.2 628.6,366.2" fill="#c6c6c6"/>
<polygon points="633.0,364.5 636.1,364.5 635.5,365.4 632.4,365.4" fill="#8d8dd6"/>
<polygon points="626.5,367.8 634.1,367.7 632.0,370.7 624.6,370.8" fill="#a6a6a6"/>
<polygon points="627.2,368.4 630.1,368.3 628.9,370.2 626.0,370.2" fill="#c6c6c6"/>
<polygon points="676.6,327.0 697.0,327.0 662.0,370.9 644.7,371.1" fill="#767676"/>
<polygon points="677.0,327.5 685.7,327.5 683.4,330.5 674.8,330.5" fill="#a6a6a6"/>
<polygon points="677.7,328.1 681.1,328.1 679.7,329.9 676.4,329.9" fill="#c6c6c6"/>
<polygon points="674.1,331.5 682.7,331.5 680.4,334.5 671.8,334.5" fill="#b2b2b2"/>
<polygon points="674.8,332.1 678.1,332.1 676.8,333.9 673.5,333.9" fill="#c6c6c6"/>
<polygon points="671.1,335.5 679.7,335.5 677.4,338.5 668.9,338.5" fill="#a6a6a6"/>
<polygon points="671.9,336.1 675.2,336.1 673.8,337.9 670.5,337.9" fill="#c6c6c6"/>
<polygon points="668.2,339.5 676.6,339.5 674.3,342.5 666.0,342.5" fill="#a6a6a6"/>
<polygon points="669.0,340.1 672.2,340.1 670.8,341.9 667.6,341.9" fill="#c6c6c6"/>
<polygon points="665.3,343.5 673.6,343.5 671.3,346.5 663.1,346.6" fill="#b2b2b2"/>
<polygon points="666.0,344.1 669.2,344.1 667.8,345.9 664.7,345.9" fill="#c6c6c6"/>
<polygon points="662.4,347.5 670.6,347.5 668.3,350.5 660.2,350.6" fill="#b2b2b2"/>
<polygon points="663.1,348.1 666.2,348.1 664.9,349.9 661.8,350.0" fill="#c6c6c6"/>
<polygon points="659.5,351.5 667.5,351.5 665.2,354.5 657.3,354.6" fill="#a6a6a6"/>
<polygon points="660.2,352.1 663.2,352.1 661.9,353.9 658.8,354.0" fill="#c6c6c6"/>
<polygon points="656.6,355.5 664.5,355.5 662.2,358.5 654.4,358.6" fill="#a6a6a6"/>
<polygon points="657.2,356.1 660.3,356.1 658.9,357.9 655.9,358.0" fill="#c6c6c6"/>
<polygon points="653.7,359.5 661.5,359.5 659.2,362.5 651.5,362.6" fill="#a6a6a6"/>
<polygon points="654.3,360.1 657.3,360.1 655.9,361.9 653.0,362.0" fill="#c6c6c6"/>
<polygon points="657.6,360.3 660.8,360.3 660.1,361.2 656.9,361.2" fill="#80c8be"/>
<polygon points="650.8,363.5 658.4,363.5 656.1,366.5 648.5,366.6" fill="#a6a6a6"/>
<polygon points="651.4,364.1 654.3,364.1 653.0,365.9 650.0,366.0" fill="#c6c6c6"/>
<polygon points="647.8,367.5 655.4,367.5 653.1,370.5 645.6,370.6" fill="#b2b2b2"/>
<polygon points="648.5,368.1 651.3,368.1 650.0,369.9 647.1,370.0" fill="#c6c6c6"/>
<polygon points="651.6,368.3 654.7,368.3 654.0,369.2 651.0,369.2" fill="#8d8dd6"/>
<polygon points="687.1,327.5 695.9,327.5 693.5,330.5 684.8,330.5" fill="#b2b2b2"/>
<polygon points="687.9,328.1 691.3,328.1 689.8,329.9 686.5,329.9" fill="#c6c6c6"/>
<polygon points="691.6,328.3 695.2,328.3 694.5,329.2 690.9,329.2" fill="#80c8be"/>
<polygon points="684.1,331.5 692.7,331.5 690.3,334.5 681.8,334.5" fill="#a6a6a6"/>
<polygon points="684.8,332.1 688.1,332.1 686.7,333.9 683.4,333.9" fill="#c6c6c6"/>
<polygon points="681.0,335.5 689.6,335.5 687.1,338.5 678.7,338.5" fill="#999999"/>
<polygon points="681.8,336.1 685.0,336.1 683.6,337.9 680.4,337.9" fill="#c6c6c6"/>
<polygon points="678.0,339.5 686.4,339.5 684.0,342.5 675.7,342.5" fill="#a6a6a6"/>
<polygon points="678.7,340.1 681.9,340.1 680.5,341.9 677.3,341.9" fill="#c6c6c6"/>
<polygon points="682.2,340.3 685.7,340.2 685.0,341.1 681.6,341.1" fill="#80c8be"/>
<polygon points="674.9,343.5 683.2,343.4 680.8,346.5 672.6,346.5" fill="#a6a6a6"/>
<polygon points="675.6,344.1 678.8,344.1 677.4,345.9 674.2,345.9" fill="#c6c6c6"/>
<polygon points="671.9,347.5 680.0,347.4 677.6,350.5 669.6,350.5" fill="#a6a6a6"/>
<polygon points="672.6,348.1 675.7,348.0 674.3,349.9 671.2,349.9" fill="#c6c6c6"/>
<polygon points="668.8,351.5 676.9,351.4 674.5,354.5 666.5,354.5" fill="#a6a6a6"/>
<polygon points="669.5,352.1 672.6,352.0 671.1,353.9 668.1,353.9" fill="#c6c6c6"/>
<polygon points="672.9,352.2 676.1,352.2 675.4,353.1 672.2,353.1" fill="#8d8dd6"/>
<polygon points="665.8,355.5 673.7,355.4 671.3,358.4 663.5,358.5" fill="#a6a6a6"/>
<polygon points="666.4,356.1 669.5,356.0 668.0,357.9 665.0,357.9" fill="#c6c6c6"/>
<polygon points="662.7,359.5 670.5,359.4 668.1,362.4 660.4,362.5" fill="#a6a6a6"/>
<polygon points="663.4,360.1 666.3,360.0 664.9,361.9 661.9,361.9" fill="#c6c6c6"/>
<polygon points="659.7,363.5 667.3,363.4 664.9,366.4 657.4,366.5" fill="#a6a6a6"/>
<polygon points="660.3,364.1 663.2,364.0 661.8,365.9 658.9,365.9" fill="#c6c6c6"/>
<polygon points="656.6,367.5 664.2,367.4 661.8,370.4 654.3,370.5" fill="#b2b2b2"/>
<polygon points="657.2,368.0 660.1,368.0 658.7,369.9 655.8,369.9" fill="#c6c6c6"/>
<polygon points="660.4,368.2 663.4,368.2 662.8,369.1 659.7,369.1" fill="#80c8be"/>
<polygon points="710.0,327.0 730.0,327.0 690.0,370.6 673.0,370.8" fill="#767676"/>
<polygon points="710.3,327.5 718.9,327.5 716.2,330.5 707.7,330.5" fill="#b2b2b2"/>
<polygon points="711.0,328.1 714.3,328.1 712.7,329.9 709.4,329.9" fill="#c6c6c6"/>
<polygon points="714.6,328.3 718.1,328.3 717.3,329.1 713.8,329.1" fill="#80c8be"/>
<polygon points="706.9,331.5 715.4,331.4 712.7,334.5 704.4,334.5" fill="#b2b2b2"/>
<polygon points="707.6,332.1 710.8,332.0 709.3,333.9 706.0,333.9" fill="#c6c6c6"/>
<polygon points="703.6,335.4 711.9,335.4 709.3,338.4 701.0,338.5" fill="#a6a6a6"/>
<polygon points="704.2,336.0 707.4,336.0 705.8,337.9 702.7,337.9" fill="#c6c6c6"/>
<polygon points="700.2,339.4 708.4,339.4 705.8,342.4 697.6,342.4" fill="#999999"/>
<polygon points="700.8,340.0 704.0,340.0 702.4,341.8 699.3,341.8" fill="#c6c6c6"/>
<polygon points="696.8,343.4 704.9,343.4 702.3,346.4 694.3,346.4" fill="#999999"/>
<polygon points="697.4,344.0 700.5,344.0 699.0,345.8 695.9,345.8" fill="#c6c6c6"/>
<polygon points="693.4,347.4 701.4,347.3 698.8,350.3 690.9,350.4" fill="#a6a6a6"/>
<polygon points="694.1,348.0 697.1,347.9 695.5,349.8 692.5,349.8" fill="#c6c6c6"/>
<polygon points="697.4,348.1 700.7,348.1 699.9,349.0 696.6,349.0" fill="#d86a6a"/>
<polygon points="690.1,351.3 698.0,351.3 695.3,354.3 687.5,354.4" fill="#b2b2b2"/>
<polygon points="690.7,351.9 693.7,351.9 692.1,353.7 689.1,353.8" fill="#c6c6c6"/>
<polygon points="686.7,355.3 694.5,355.3 691.8,358.3 684.1,358.3" fill="#a6a6a6"/>
<polygon points="687.3,355.9 690.2,355.9 688.7,357.7 685.7,357.7" fill="#c6c6c6"/>
<polygon points="690.5,356.1 693.7,356.1 692.9,356.9 689.8,357.0" fill="#8d8dd6"/>
<polygon points="683.3,359.3 691.0,359.2 688.3,362.3 680.8,362.3" fill="#999999"/>
<polygon points="683.9,359.9 686.8,359.9 685.2,361.7 682.3,361.7" fill="#c6c6c6"/>
<polygon points="680.0,363.3 687.5,363.2 684.8,366.2 677.4,366.3" fill="#a6a6a6"/>
<polygon points="680.5,363.9 683.4,363.8 681.8,365.7 678.9,365.7" fill="#c6c6c6"/>
<polygon points="683.7,364.0 686.7,364.0 685.9,364.9 682.9,364.9" fill="#80c8be"/>
<polygon points="676.6,367.3 684.0,367.2 681.4,370.2 674.0,370.3" fill="#b2b2b2"/>
<polygon points="677.1,367.8 680.0,367.8 678.4,369.6 675.6,369.7" fill="#c6c6c6"/>
<polygon points="680.2,368.0 683.2,368.0 682.5,368.9 679.5,368.9" fill="#80c8be"/>
<polygon points="720.3,327.5 728.9,327.5 726.1,330.5 717.6,330.5" fill="#a6a6a6"/>
<polygon points="720.9,328.1 724.2,328.1 722.6,329.9 719.3,329.9" fill="#c6c6c6"/>
<polygon points="724.6,328.3 728.0,328.3 727.2,329.1 723.8,329.1" fill="#80c8be"/>
<polygon points="716.8,331.4 725.2,331.4 722.5,334.4 714.1,334.5" fill="#a6a6a6"/>
<polygon points="717.4,332.0 720.7,332.0 719.0,333.9 715.8,333.9" fill="#c6c6c6"/>
<polygon points="721.0,332.2 724.4,332.2 723.6,333.1 720.2,333.1" fill="#80c8be"/>
<polygon points="713.3,335.4 721.6,335.4 718.9,338.4 710.6,338.4" fill="#b2b2b2"/>
<polygon points="713.9,336.0 717.1,336.0 715.5,337.8 712.3,337.8" fill="#c6c6c6"/>
<polygon points="717.4,336.2 720.8,336.2 720.0,337.1 716.6,337.1" fill="#80c8be"/>
<polygon points="709.8,339.4 718.0,339.4 715.2,342.4 707.1,342.4" fill="#999999"/>
<polygon points="710.4,340.0 713.5,340.0 711.9,341.8 708.8,341.8" fill="#c6c6c6"/>
<polygon points="713.8,340.2 717.2,340.2 716.4,341.0 713.0,341.0" fill="#80c8be"/>
<polygon points="706.3,343.4 714.4,343.3 711.6,346.3 703.6,346.4" fill="#b2b2b2"/>
<polygon points="706.9,343.9 710.0,343.9 708.3,345.8 705.2,345.8" fill="#c6c6c6"/>
<polygon points="710.3,344.1 713.6,344.1 712.8,345.0 709.5,345.0" fill="#80c8be"/>
<polygon points="702.7,347.3 710.7,347.3 708.0,350.3 700.1,350.3" fill="#b2b2b2"/>
<polygon points="703.3,347.9 706.4,347.9 704.8,349.7 701.7,349.7" fill="#c6c6c6"/>
<polygon points="699.2,351.3 707.1,351.3 704.4,354.3 696.6,354.3" fill="#b2b2b2"/>
<polygon points="699.8,351.9 702.8,351.9 701.2,353.7 698.2,353.7" fill="#c6c6c6"/>
<polygon points="703.1,352.1 706.3,352.0 705.5,352.9 702.3,352.9" fill="#80c8be"/>
<polygon points="695.7,355.3 703.5,355.2 700.7,358.2 693.1,358.3" fill="#999999"/>
<polygon points="696.3,355.9 699.3,355.8 697.6,357.7 694.7,357.7" fill="#c6c6c6"/>
<polygon points="699.5,356.0 702.7,356.0 701.9,356.9 698.7,356.9" fill="#d86a6a"/>
<polygon points="692.2,359.2 699.9,359.2 697.1,362.2 689.6,362.3" fill="#a6a6a6"/>
<polygon points="692.8,359.8 695.7,359.8 694.1,361.6 691.1,361.6" fill="#c6c6c6"/>
<polygon points="696.0,360.0 699.1,360.0 698.3,360.8 695.2,360.9" fill="#80c8be"/>
<polygon points="688.7,363.2 696.3,363.1 693.5,366.1 686.1,366.2" fill="#999999"/>
<polygon points="689.2,363.8 692.1,363.8 690.5,365.6 687.6,365.6" fill="#c6c6c6"/>
<polygon points="692.4,364.0 695.4,363.9 694.6,364.8 691.6,364.8" fill="#d86a6a"/>
<polygon points="685.2,367.2 692.6,367.1 689.9,370.1 682.5,370.2" fill="#b2b2b2"/>
<polygon points="685.7,367.8 688.6,367.7 686.9,369.6 684.1,369.6" fill="#c6c6c6"/>
<line x1="752.0" y1="286.0" x2="746.0" y2="296.0" stroke="#8c7645" stroke-width="0.6"/>
<polygon points="761.5,296.0 781.8,296.0 706.9,371.4 691.5,371.6" fill="#767676"/>
<polygon points="761.5,296.8 770.2,296.8 765.6,301.5 757.1,301.5" fill="#b2b2b2"/>
<polygon points="761.8,297.7 765.2,297.7 762.4,300.6 759.1,300.6" fill="#c6c6c6"/>
<polygon points="765.4,298.0 768.9,298.0 767.6,299.4 764.1,299.4" fill="#80c8be"/>
<polygon points="755.7,303.1 764.2,303.0 759.6,307.8 751.2,307.8" fill="#a6a6a6"/>
<polygon points="756.0,304.0 759.2,304.0 756.5,306.9 753.3,306.9" fill="#c6c6c6"/>
<polygon points="759.4,304.3 762.9,304.3 761.6,305.7 758.1,305.7" fill="#80c8be"/>
<polygon points="749.8,309.3 758.2,309.3 753.6,314.1 745.4,314.1" fill="#a6a6a6"/>
<polygon points="750.1,310.3 753.3,310.3 750.6,313.2 747.4,313.2" fill="#c6c6c6"/>
<polygon points="753.5,310.6 756.9,310.6 755.5,312.0 752.2,312.0" fill="#8d8dd6"/>
<polygon points="744.0,315.6 752.1,315.6 747.6,320.4 739.5,320.4" fill="#b2b2b2"/>
<polygon points="744.2,316.6 747.3,316.6 744.6,319.5 741.5,319.5" fill="#c6c6c6"/>
<polygon points="747.5,316.9 750.8,316.9 749.5,318.3 746.2,318.3" fill="#80c8be"/>
<polygon points="738.1,321.9 746.1,321.9 741.5,326.7 733.7,326.7" fill="#a6a6a6"/>
<polygon points="738.3,322.9 741.4,322.9 738.7,325.8 735.6,325.8" fill="#c6c6c6"/>
<polygon points="741.6,323.2 744.8,323.2 743.5,324.6 740.3,324.6" fill="#8d8dd6"/>
<polygon points="732.3,328.2 740.1,328.2 735.5,333.0 727.8,333.0" fill="#a6a6a6"/>
<polygon points="732.5,329.2 735.5,329.2 732.7,332.1 729.8,332.1" fill="#c6c6c6"/>
<polygon points="726.4,334.5 734.1,334.5 729.5,339.3 722.0,339.3" fill="#a6a6a6"/>
<polygon points="726.6,335.5 729.5,335.5 726.8,338.4 723.9,338.4" fill="#c6c6c6"/>
<polygon points="729.7,335.8 732.8,335.8 731.5,337.1 728.4,337.2" fill="#8d8dd6"/>
<polygon points="720.6,340.8 728.1,340.8 723.5,345.6 716.1,345.6" fill="#b2b2b2"/>
<polygon points="720.7,341.8 723.6,341.8 720.9,344.6 718.0,344.7" fill="#c6c6c6"/>
<polygon points="723.7,342.1 726.8,342.0 725.4,343.4 722.4,343.5" fill="#8d8dd6"/>
<polygon points="714.7,347.1 722.0,347.1 717.5,351.9 710.3,351.9" fill="#a6a6a6"/>
<polygon points="714.8,348.1 717.6,348.0 714.9,350.9 712.1,351.0" fill="#c6c6c6"/>
<polygon points="708.8,353.4 716.0,353.4 711.4,358.2 704.4,358.2" fill="#999999"/>
<polygon points="709.0,354.4 711.7,354.3 709.0,357.2 706.3,357.3" fill="#c6c6c6"/>
<polygon points="711.8,354.7 714.7,354.6 713.4,356.0 710.5,356.0" fill="#80c8be"/>
<polygon points="703.0,359.7 710.0,359.7 705.4,364.4 698.5,364.5" fill="#a6a6a6"/>
<polygon points="703.1,360.7 705.8,360.6 703.0,363.5 700.4,363.6" fill="#c6c6c6"/>
<polygon points="697.1,366.0 704.0,366.0 699.4,370.7 692.7,370.8" fill="#a6a6a6"/>
<polygon points="697.2,367.0 699.8,366.9 697.1,369.8 694.5,369.8" fill="#c6c6c6"/>
<polygon points="699.9,367.2 702.7,367.2 701.3,368.6 698.6,368.6" fill="#80c8be"/>
<polygon points="771.6,296.8 780.3,296.8 775.6,301.5 767.0,301.5" fill="#b2b2b2"/>
<polygon points="771.9,297.7 775.3,297.7 772.4,300.6 769.1,300.6" fill="#c6c6c6"/>
<polygon points="775.5,298.0 779.0,298.0 777.6,299.4 774.1,299.4" fill="#80c8be"/>
<polygon points="765.6,303.0 774.1,303.0 769.4,307.8 761.0,307.8" fill="#b2b2b2"/>
<polygon points="765.9,304.0 769.1,304.0 766.3,306.9 763.1,306.9" fill="#c6c6c6"/>
<polygon points="769.3,304.3 772.8,304.3 771.4,305.7 768.0,305.7" fill="#80c8be"/>
<polygon points="759.5,309.3 767.9,309.3 763.2,314.1 754.9,314.1" fill="#b2b2b2"/>
<polygon points="759.8,310.3 763.0,310.3 760.2,313.2 757.0,313.2" fill="#c6c6c6"/>
<polygon points="753.5,315.6 761.7,315.6 756.9,320.4 748.9,320.4" fill="#a6a6a6"/>
<polygon points="753.7,316.6 756.8,316.6 754.0,319.4 750.9,319.5" fill="#c6c6c6"/>
<polygon points="757.0,316.9 760.3,316.9 759.0,318.2 755.7,318.3" fill="#80c8be"/>
<polygon points="747.4,321.9 755.4,321.9 750.7,326.7 742.8,326.7" fill="#a6a6a6"/>
<polygon points="747.6,322.9 750.7,322.8 747.9,325.7 744.8,325.7" fill="#c6c6c6"/>
<polygon points="741.4,328.2 749.2,328.2 744.5,332.9 736.8,333.0" fill="#a6a6a6"/>
<polygon points="741.6,329.1 744.6,329.1 741.7,332.0 738.8,332.0" fill="#c6c6c6"/>
<polygon points="735.3,334.5 743.0,334.5 738.3,339.2 730.7,339.3" fill="#a6a6a6"/>
<polygon points="735.5,335.4 738.4,335.4 735.6,338.3 732.7,338.3" fill="#c6c6c6"/>
<polygon points="738.6,335.7 741.7,335.7 740.3,337.1 737.2,337.1" fill="#80c8be"/>
<polygon points="729.3,340.8 736.8,340.7 732.0,345.5 724.7,345.6" fill="#999999"/>
<polygon points="729.4,341.7 732.3,341.7 729.5,344.6 726.6,344.6" fill="#c6c6c6"/>
<polygon points="723.2,347.1 730.6,347.0 725.8,351.8 718.6,351.9" fill="#a6a6a6"/>
<polygon points="723.3,348.0 726.1,348.0 723.3,350.9 720.5,350.9" fill="#c6c6c6"/>
<polygon points="726.3,348.3 729.2,348.3 727.9,349.7 724.9,349.7" fill="#80c8be"/>
<polygon points="717.2,353.4 724.3,353.3 719.6,358.1 712.6,358.1" fill="#999999"/>
<polygon points="717.3,354.3 720.0,354.3 717.2,357.2 714.5,357.2" fill="#c6c6c6"/>
<polygon points="711.1,359.7 718.1,359.6 713.4,364.4 706.5,364.4" fill="#b2b2b2"/>
<polygon points="711.2,360.6 713.9,360.6 711.0,363.5 708.4,363.5" fill="#c6c6c6"/>
<polygon points="713.9,360.9 716.8,360.8 715.4,362.2 712.6,362.3" fill="#d86a6a"/>
<polygon points="705.1,365.9 711.9,365.9 707.1,370.6 700.5,370.7" fill="#999999"/>
<polygon points="705.1,366.9 707.7,366.8 704.9,369.7 702.3,369.8" fill="#c6c6c6"/>
<polygon points="798.4,296.0 818.7,296.0 735.2,371.1 719.6,371.3" fill="#767676"/>
<polygon points="798.3,296.8 807.0,296.8 801.9,301.5 793.3,301.5" fill="#a6a6a6"/>
<polygon points="798.5,297.7 801.9,297.7 798.8,300.6 795.5,300.6" fill="#c6c6c6"/>
<polygon points="802.0,298.0 805.6,298.0 804.1,299.4 800.6,299.4" fill="#80c8be"/>
<polygon points="791.7,303.0 800.3,303.0 795.2,307.8 786.7,307.8" fill="#a6a6a6"/>
<polygon points="791.9,304.0 795.2,304.0 792.1,306.8 788.9,306.8" fill="#c6c6c6"/>
<polygon points="785.2,309.3 793.5,309.3 788.4,314.0 780.2,314.1" fill="#a6a6a6"/>
<polygon points="785.3,310.2 788.5,310.2 785.5,313.1 782.3,313.1" fill="#c6c6c6"/>
<polygon points="778.6,315.6 786.8,315.5 781.7,320.3 773.6,320.3" fill="#a6a6a6"/>
<polygon points="778.7,316.5 781.9,316.5 778.8,319.4 775.7,319.4" fill="#c6c6c6"/>
<polygon points="782.0,316.8 785.3,316.8 783.9,318.2 780.5,318.2" fill="#8d8dd6"/>
<polygon points="772.0,321.8 780.0,321.8 774.9,326.6 767.0,326.6" fill="#999999"/>
<polygon points="772.1,322.8 775.2,322.8 772.1,325.6 769.1,325.7" fill="#c6c6c6"/>
<polygon points="775.3,323.1 778.6,323.1 777.1,324.4 773.9,324.5" fill="#80c8be"/>
<polygon points="765.4,328.1 773.3,328.1 768.2,332.8 760.4,332.9" fill="#a6a6a6"/>
<polygon points="765.5,329.0 768.5,329.0 765.5,331.9 762.5,331.9" fill="#c6c6c6"/>
<polygon points="758.9,334.4 766.5,334.3 761.4,339.1 753.9,339.1" fill="#999999"/>
<polygon points="758.9,335.3 761.9,335.3 758.8,338.2 755.9,338.2" fill="#c6c6c6"/>
<polygon points="762.0,335.6 765.1,335.6 763.6,337.0 760.5,337.0" fill="#80c8be"/>
<polygon points="752.3,340.6 759.8,340.6 754.7,345.4 747.3,345.4" fill="#a6a6a6"/>
<polygon points="752.3,341.6 755.2,341.6 752.1,344.4 749.3,344.5" fill="#c6c6c6"/>
<polygon points="745.7,346.9 753.0,346.9 747.9,351.6 740.7,351.7" fill="#a6a6a6"/>
<polygon points="745.7,347.9 748.5,347.8 745.5,350.7 742.7,350.7" fill="#c6c6c6"/>
<polygon points="748.6,348.1 751.6,348.1 750.1,349.5 747.2,349.5" fill="#d86a6a"/>
<polygon points="739.1,353.2 746.3,353.1 741.2,357.9 734.1,358.0" fill="#a6a6a6"/>
<polygon points="739.1,354.1 741.9,354.1 738.8,357.0 736.1,357.0" fill="#c6c6c6"/>
<polygon points="741.9,354.4 744.9,354.4 743.4,355.8 740.5,355.8" fill="#80c8be"/>
<polygon points="732.5,359.5 739.5,359.4 734.4,364.2 727.5,364.2" fill="#a6a6a6"/>
<polygon points="732.5,360.4 735.2,360.4 732.1,363.3 729.5,363.3" fill="#c6c6c6"/>
<polygon points="735.3,360.7 738.1,360.7 736.6,362.0 733.8,362.1" fill="#80c8be"/>
<polygon points="726.0,365.7 732.8,365.7 727.7,370.4 721.0,370.5" fill="#a6a6a6"/>
<polygon points="725.9,366.7 728.5,366.6 725.5,369.5 722.9,369.5" fill="#c6c6c6"/>
<polygon points="808.4,296.8 817.2,296.8 811.9,301.5 803.3,301.5" fill="#a6a6a6"/>
<polygon points="808.6,297.7 812.0,297.7 808.8,300.6 805.5,300.6" fill="#c6c6c6"/>
<polygon points="812.1,298.0 815.7,298.0 814.1,299.4 810.6,299.4" fill="#80c8be"/>
<polygon points="801.7,303.0 810.2,303.0 804.9,307.8 796.5,307.8" fill="#b2b2b2"/>
<polygon points="801.8,304.0 805.1,304.0 801.9,306.8 798.7,306.8" fill="#c6c6c6"/>
<polygon points="794.9,309.3 803.3,309.3 798.0,314.0 789.7,314.0" fill="#a6a6a6"/>
<polygon points="795.0,310.2 798.2,310.2 795.1,313.1 791.9,313.1" fill="#c6c6c6"/>
<polygon points="788.1,315.5 796.3,315.5 791.0,320.3 783.0,320.3" fill="#a6a6a6"/>
<polygon points="788.2,316.5 791.4,316.5 788.2,319.4 785.1,319.4" fill="#c6c6c6"/>
<polygon points="781.3,321.8 789.4,321.8 784.1,326.5 776.2,326.6" fill="#a6a6a6"/>
<polygon points="781.4,322.7 784.5,322.7 781.3,325.6 778.3,325.6" fill="#c6c6c6"/>
<polygon points="774.6,328.1 782.4,328.0 777.1,332.8 769.4,332.8" fill="#999999"/>
<polygon points="774.6,329.0 777.6,329.0 774.5,331.9 771.5,331.9" fill="#c6c6c6"/>
<polygon points="777.8,329.3 780.9,329.3 779.4,330.7 776.2,330.7" fill="#8d8dd6"/>
<polygon points="767.8,334.3 775.5,334.3 770.2,339.1 762.6,339.1" fill="#b2b2b2"/>
<polygon points="767.8,335.3 770.8,335.3 767.6,338.1 764.7,338.1" fill="#c6c6c6"/>
<polygon points="770.9,335.6 774.0,335.5 772.5,336.9 769.4,336.9" fill="#d86a6a"/>
<polygon points="761.0,340.6 768.5,340.6 763.2,345.3 755.9,345.4" fill="#a6a6a6"/>
<polygon points="761.0,341.5 763.9,341.5 760.7,344.4 757.9,344.4" fill="#c6c6c6"/>
<polygon points="764.0,341.8 767.0,341.8 765.5,343.2 762.5,343.2" fill="#80c8be"/>
<polygon points="754.2,346.9 761.6,346.8 756.3,351.6 749.1,351.6" fill="#a6a6a6"/>
<polygon points="754.2,347.8 757.0,347.8 753.9,350.7 751.1,350.7" fill="#c6c6c6"/>
<polygon points="757.1,348.1 760.1,348.1 758.6,349.4 755.6,349.5" fill="#80c8be"/>
<polygon points="747.5,353.1 754.6,353.1 749.3,357.8 742.3,357.9" fill="#b2b2b2"/>
<polygon points="747.4,354.1 750.2,354.0 747.0,356.9 744.3,356.9" fill="#c6c6c6"/>
<polygon points="740.7,359.4 747.7,359.3 742.4,364.1 735.5,364.1" fill="#b2b2b2"/>
<polygon points="740.6,360.3 743.3,360.3 740.1,363.2 737.5,363.2" fill="#c6c6c6"/>
<polygon points="743.4,360.6 746.2,360.6 744.7,362.0 741.9,362.0" fill="#80c8be"/>
<polygon points="733.9,365.7 740.7,365.6 735.4,370.3 728.7,370.4" fill="#b2b2b2"/>
<polygon points="733.8,366.6 736.4,366.6 733.3,369.4 730.7,369.5" fill="#c6c6c6"/>
<polygon points="306.0,260.8 372.0,260.8 372.0,266.3 306.0,266.3" fill="#939393"/>
<line x1="306.0" y1="261.3" x2="372.0" y2="261.3" stroke="#5fb3b0" stroke-width="1.0"/>
<line x1="306.0" y1="265.8" x2="372.0" y2="265.8" stroke="#5fb3b0" stroke-width="1.0"/>
<polygon points="376.0,259.0 491.0,259.0 491.0,268.5 376.0,268.5" fill="#939393"/>
<line x1="376.0" y1="259.5" x2="491.0" y2="259.5" stroke="#5fb3b0" stroke-width="1.0"/>
<line x1="376.0" y1="268.0" x2="491.0" y2="268.0" stroke="#5fb3b0" stroke-width="1.0"/>
<polygon points="493.0,261.0 556.0,261.0 556.0,266.0 493.0,266.0" fill="#939393"/>
<line x1="493.0" y1="261.5" x2="556.0" y2="261.5" stroke="#5fb3b0" stroke-width="1.0"/>
<line x1="493.0" y1="265.5" x2="556.0" y2="265.5" stroke="#5fb3b0" stroke-width="1.0"/>
<polygon points="299.4,261.8 303.0,261.8 303.0,272.3 299.4,272.3" fill="#b39a5c"/>
<polygon points="557.0,261.0 562.0,261.0 562.0,272.0 557.0,272.0" fill="#a38a50"/>
<polygon points="373.2,271.0 491.0,271.0 492.0,384.8 398.0,384.8" fill="#a3a3a3"/>
<polygon points="375.0,279.1 491.1,279.1 491.1,280.5 375.3,280.5" fill="#9494d8"/>
<line x1="373.2" y1="271.0" x2="491.0" y2="271.0" stroke="#d4d4d4" stroke-width="0.9"/>
<polygon points="377.2,289.4 491.2,289.4 491.2,290.9 377.5,290.9" fill="#86cfc2"/>
<line x1="375.5" y1="281.3" x2="491.1" y2="281.3" stroke="#d4d4d4" stroke-width="0.9"/>
<polygon points="379.5,299.8 491.3,299.8 491.3,301.2 379.8,301.2" fill="#86cfc2"/>
<line x1="377.7" y1="291.7" x2="491.2" y2="291.7" stroke="#d4d4d4" stroke-width="0.9"/>
<polygon points="381.7,310.1 491.3,310.1 491.4,311.6 382.0,311.6" fill="#d9d9d9"/>
<line x1="380.0" y1="302.0" x2="491.3" y2="302.0" stroke="#d4d4d4" stroke-width="0.9"/>
<polygon points="384.0,320.5 491.4,320.5 491.4,321.9 384.3,321.9" fill="#86cfc2"/>
<line x1="382.2" y1="312.4" x2="491.4" y2="312.4" stroke="#d4d4d4" stroke-width="0.9"/>
<polygon points="386.2,330.8 491.5,330.8 491.5,332.2 386.5,332.2" fill="#9494d8"/>
<line x1="384.5" y1="322.7" x2="491.5" y2="322.7" stroke="#d4d4d4" stroke-width="0.9"/>
<polygon points="388.5,341.1 491.6,341.1 491.6,342.6 388.8,342.6" fill="#86cfc2"/>
<line x1="386.7" y1="333.1" x2="491.5" y2="333.1" stroke="#d4d4d4" stroke-width="0.9"/>
<polygon points="390.7,351.5 491.7,351.5 491.7,352.9 391.1,352.9" fill="#d9d9d9"/>
<line x1="389.0" y1="343.4" x2="491.6" y2="343.4" stroke="#d4d4d4" stroke-width="0.9"/>
<polygon points="393.0,361.8 491.8,361.8 491.8,363.3 393.3,363.3" fill="#d9d9d9"/>
<line x1="391.2" y1="353.8" x2="491.7" y2="353.8" stroke="#d4d4d4" stroke-width="0.9"/>
<polygon points="395.2,372.2 491.9,372.2 491.9,373.6 395.6,373.6" fill="#d9d9d9"/>
<line x1="393.5" y1="364.1" x2="491.8" y2="364.1" stroke="#d4d4d4" stroke-width="0.9"/>
<polygon points="397.5,382.5 492.0,382.5 492.0,384.0 397.8,384.0" fill="#9494d8"/>
<line x1="395.7" y1="374.5" x2="491.9" y2="374.5" stroke="#d4d4d4" stroke-width="0.9"/>
<line x1="373.2" y1="271.0" x2="398.0" y2="384.8" stroke="#d4d4d4" stroke-width="0.9"/>
<line x1="392.8" y1="271.0" x2="413.7" y2="384.8" stroke="#d4d4d4" stroke-width="0.9"/>
<line x1="412.5" y1="271.0" x2="429.3" y2="384.8" stroke="#d4d4d4" stroke-width="0.9"/>
<line x1="432.1" y1="271.0" x2="445.0" y2="384.8" stroke="#d4d4d4" stroke-width="0.9"/>
<line x1="451.7" y1="271.0" x2="460.7" y2="384.8" stroke="#d4d4d4" stroke-width="0.9"/>
<line x1="471.4" y1="271.0" x2="476.3" y2="384.8" stroke="#d4d4d4" stroke-width="0.9"/>
<line x1="491.0" y1="271.0" x2="492.0" y2="384.8" stroke="#d4d4d4" stroke-width="0.9"/>
<polygon points="376.5,272.6 380.4,272.6 381.6,278.2 377.7,278.2" fill="#b8b8b8"/>
<polygon points="378.7,282.9 382.5,282.9 383.7,288.6 379.9,288.6" fill="#b8b8b8"/>
<polygon points="380.9,293.2 384.6,293.2 385.8,298.9 382.1,298.9" fill="#b8b8b8"/>
<polygon points="385.3,313.9 388.9,313.9 390.1,319.6 386.5,319.6" fill="#b8b8b8"/>
<polygon points="387.5,324.3 391.0,324.3 392.2,330.0 388.7,330.0" fill="#b8b8b8"/>
<polygon points="391.9,345.0 395.3,345.0 396.5,350.7 393.1,350.7" fill="#b8b8b8"/>
<polygon points="396.3,365.7 399.5,365.7 400.7,371.4 397.5,371.4" fill="#b8b8b8"/>
<polygon points="398.5,376.0 401.7,376.0 402.8,381.7 399.7,381.7" fill="#b8b8b8"/>
<polygon points="396.1,272.6 400.0,272.6 400.9,278.2 397.1,278.2" fill="#b8b8b8"/>
<polygon points="407.1,334.6 410.6,334.6 411.5,340.3 408.1,340.3" fill="#b8b8b8"/>
<polygon points="410.8,355.3 414.1,355.3 415.1,361.0 411.8,361.0" fill="#b8b8b8"/>
<polygon points="412.6,365.7 415.9,365.7 416.9,371.4 413.6,371.4" fill="#b8b8b8"/>
<polygon points="418.6,293.2 422.4,293.2 423.1,298.9 419.4,298.9" fill="#b8b8b8"/>
<polygon points="421.6,313.9 425.2,313.9 426.0,319.6 422.4,319.6" fill="#b8b8b8"/>
<polygon points="424.5,334.6 428.0,334.6 428.8,340.3 425.3,340.3" fill="#b8b8b8"/>
<polygon points="426.0,345.0 429.4,345.0 430.2,350.7 426.8,350.7" fill="#b8b8b8"/>
<polygon points="427.5,355.3 430.8,355.3 431.6,361.0 428.3,361.0" fill="#b8b8b8"/>
<polygon points="428.9,365.7 432.2,365.7 433.0,371.4 429.8,371.4" fill="#b8b8b8"/>
<polygon points="436.3,282.9 440.2,282.9 440.8,288.6 436.9,288.6" fill="#b8b8b8"/>
<polygon points="439.7,313.9 443.3,313.9 443.9,319.6 440.3,319.6" fill="#b8b8b8"/>
<polygon points="440.8,324.3 444.4,324.3 444.9,330.0 441.4,330.0" fill="#b8b8b8"/>
<polygon points="443.0,345.0 446.5,345.0 447.0,350.7 443.7,350.7" fill="#b8b8b8"/>
<polygon points="444.2,355.3 447.5,355.3 448.1,361.0 444.8,361.0" fill="#b8b8b8"/>
<polygon points="445.3,365.7 448.5,365.7 449.1,371.4 445.9,371.4" fill="#b8b8b8"/>
<polygon points="446.4,376.0 449.6,376.0 450.2,381.7 447.0,381.7" fill="#b8b8b8"/>
<polygon points="454.8,272.6 458.7,272.6 459.1,278.2 455.2,278.2" fill="#b8b8b8"/>
<polygon points="460.9,355.3 464.2,355.3 464.6,361.0 461.3,361.0" fill="#b8b8b8"/>
<polygon points="474.8,282.9 478.6,282.9 478.8,288.6 475.0,288.6" fill="#b8b8b8"/>
<polygon points="475.6,303.6 479.3,303.6 479.4,309.3 475.8,309.3" fill="#b8b8b8"/>
<polygon points="476.8,334.6 480.2,334.6 480.4,340.3 477.0,340.3" fill="#b8b8b8"/>
<polygon points="477.6,355.3 480.9,355.3 481.1,361.0 477.8,361.0" fill="#b8b8b8"/>
<polygon points="477.9,365.7 481.2,365.7 481.4,371.4 478.2,371.4" fill="#b8b8b8"/>
<polygon points="365.0,271.0 505.0,271.0 505.0,278.2 365.0,278.2" fill="#b79d5f"/>
<polygon points="382.0,301.2 491.0,301.2 491.0,307.0 383.0,307.0" fill="#b79d5f"/>
<polygon points="390.0,316.2 491.0,316.2 491.0,322.0 391.0,322.0" fill="#b79d5f"/>
<polygon points="385.8,278.0 388.2,278.0 394.0,308.0 391.6,308.0" fill="#b79d5f"/>
<polygon points="396.2,278.0 398.6,278.0 404.4,308.0 402.0,308.0" fill="#b79d5f"/>
<polygon points="405.5,278.0 407.9,278.0 411.2,308.0 408.8,308.0" fill="#b79d5f"/>
<polygon points="455.2,278.0 457.6,278.0 458.7,308.0 456.3,308.0" fill="#b79d5f"/>
<polygon points="463.3,278.0 465.7,278.0 466.7,308.0 464.3,308.0" fill="#b79d5f"/>
<polygon points="474.8,278.0 477.2,278.0 478.2,308.0 475.8,308.0" fill="#b79d5f"/>
<polygon points="407.8,273.5 456.4,273.5 457.6,304.8 411.3,308.2" fill="#b79d5f"/>
<line x1="408.0" y1="276.5" x2="456.4" y2="276.5" stroke="#9c8550" stroke-width="0.5"/>
<line x1="411.0" y1="306.5" x2="457.6" y2="303.5" stroke="#9c8550" stroke-width="0.5"/>
<polygon points="418.2,307.0 419.8,307.0 421.8,322.0 420.2,322.0" fill="#b79d5f"/>
<polygon points="430.2,307.0 431.8,307.0 433.3,322.0 431.7,322.0" fill="#b79d5f"/>
<polygon points="442.2,307.0 443.8,307.0 444.8,322.0 443.2,322.0" fill="#b79d5f"/>
<polygon points="399.7,307.0 407.8,307.0 421.7,365.0 413.6,365.0" fill="#b79d5f"/>
<polygon points="465.7,307.0 473.8,307.0 475.0,365.0 466.8,365.0" fill="#b79d5f"/>
<polygon points="370.5,259.0 375.4,259.0 375.4,278.0 370.5,278.0" fill="#b79d5f"/>
<polygon points="372.5,276.0 376.2,276.0 399.5,372.0 396.0,372.0" fill="#b79d5f"/>
<polygon points="486.5,259.0 491.0,259.0 491.0,370.0 486.5,370.0" fill="#b79d5f"/>
<polygon points="300.0,271.6 340.0,271.6 341.0,275.0 299.4,275.0" fill="#c3a868"/>
<polygon points="299.4,274.0 340.7,274.0 383.5,384.8 358.4,386.3" fill="#b79d5f"/>
<line x1="299.4" y1="274.0" x2="358.4" y2="386.3" stroke="#8c7645" stroke-width="0.6"/>
<polygon points="340.7,274.0 373.2,274.0 373.2,280.0 340.7,280.0" fill="#b79d5f"/>
<polygon points="340.7,280.0 373.2,280.0 398.0,384.8 383.5,384.8" fill="#a3a3a3"/>
<polygon points="343.7,287.4 375.0,287.4 375.3,288.8 344.3,288.8" fill="#86cfc2"/>
<line x1="340.7" y1="280.0" x2="373.2" y2="280.0" stroke="#d4d4d4" stroke-width="0.9"/>
<polygon points="347.6,297.0 377.2,297.0 377.5,298.3 348.2,298.3" fill="#9494d8"/>
<line x1="344.6" y1="289.5" x2="375.5" y2="289.5" stroke="#d4d4d4" stroke-width="0.9"/>
<polygon points="351.5,306.5 379.5,306.5 379.8,307.8 352.1,307.8" fill="#d9d9d9"/>
<line x1="348.5" y1="299.1" x2="377.7" y2="299.1" stroke="#d4d4d4" stroke-width="0.9"/>
<polygon points="355.4,316.0 381.7,316.0 382.0,317.3 356.0,317.3" fill="#86cfc2"/>
<line x1="352.4" y1="308.6" x2="380.0" y2="308.6" stroke="#d4d4d4" stroke-width="0.9"/>
<polygon points="359.3,325.5 384.0,325.5 384.3,326.9 359.8,326.9" fill="#d9d9d9"/>
<line x1="356.3" y1="318.1" x2="382.2" y2="318.1" stroke="#d4d4d4" stroke-width="0.9"/>
<polygon points="363.2,335.1 386.2,335.1 386.5,336.4 363.7,336.4" fill="#86cfc2"/>
<line x1="360.2" y1="327.6" x2="384.5" y2="327.6" stroke="#d4d4d4" stroke-width="0.9"/>
<polygon points="367.1,344.6 388.5,344.6 388.8,345.9 367.6,345.9" fill="#86cfc2"/>
<line x1="364.0" y1="337.2" x2="386.7" y2="337.2" stroke="#d4d4d4" stroke-width="0.9"/>
<polygon points="371.0,354.1 390.7,354.1 391.1,355.5 371.5,355.5" fill="#86cfc2"/>
<line x1="367.9" y1="346.7" x2="389.0" y2="346.7" stroke="#d4d4d4" stroke-width="0.9"/>
<polygon points="374.9,363.6 393.0,363.6 393.3,365.0 375.4,365.0" fill="#d9d9d9"/>
<line x1="371.8" y1="356.2" x2="391.2" y2="356.2" stroke="#d4d4d4" stroke-width="0.9"/>
<polygon points="378.8,373.2 395.2,373.2 395.6,374.5 379.3,374.5" fill="#d9d9d9"/>
<line x1="375.7" y1="365.7" x2="393.5" y2="365.7" stroke="#d4d4d4" stroke-width="0.9"/>
<polygon points="382.6,382.7 397.5,382.7 397.8,384.0 383.2,384.0" fill="#86cfc2"/>
<line x1="379.6" y1="375.3" x2="395.7" y2="375.3" stroke="#d4d4d4" stroke-width="0.9"/>
<line x1="340.7" y1="280.0" x2="383.5" y2="384.8" stroke="#d4d4d4" stroke-width="0.9"/>
<line x1="356.9" y1="280.0" x2="390.8" y2="384.8" stroke="#d4d4d4" stroke-width="0.9"/>
<line x1="373.2" y1="280.0" x2="398.0" y2="384.8" stroke="#d4d4d4" stroke-width="0.9"/>
<polygon points="343.7,281.4 346.9,281.4 348.9,286.7 345.8,286.7" fill="#b8b8b8"/>
<polygon points="347.5,291.0 350.5,291.0 352.5,296.2 349.5,296.2" fill="#b8b8b8"/>
<polygon points="351.2,300.5 354.1,300.5 356.1,305.7 353.3,305.7" fill="#b8b8b8"/>
<polygon points="355.0,310.0 357.7,310.0 359.7,315.3 357.1,315.3" fill="#b8b8b8"/>
<polygon points="358.8,319.5 361.3,319.5 363.3,324.8 360.8,324.8" fill="#b8b8b8"/>
<polygon points="381.4,376.7 383.0,376.7 385.0,381.9 383.5,381.9" fill="#b8b8b8"/>
<polygon points="359.8,281.4 363.1,281.4 364.6,286.7 361.5,286.7" fill="#b8b8b8"/>
<polygon points="362.8,291.0 365.8,291.0 367.4,296.2 364.4,296.2" fill="#b8b8b8"/>
<polygon points="365.7,300.5 368.6,300.5 370.2,305.7 367.4,305.7" fill="#b8b8b8"/>
<polygon points="374.6,329.1 377.0,329.1 378.5,334.3 376.2,334.3" fill="#b8b8b8"/>
<polygon points="380.5,348.1 382.6,348.1 384.1,353.4 382.1,353.4" fill="#b8b8b8"/>
<polygon points="383.4,357.6 385.3,357.6 386.9,362.9 385.1,362.9" fill="#b8b8b8"/>
<polygon points="341.5,280.5 372.5,280.5 373.5,284.0 342.5,284.0" fill="#e4e4e4"/>
<line x1="300.0" y1="306.6" x2="352.0" y2="306.0" stroke="#9c7f4a" stroke-width="0.5"/>
<polygon points="490.6,268.0 561.4,268.0 561.4,272.7 523.0,278.6 490.6,278.6" fill="#cdb070"/>
<polygon points="523.0,278.6 561.4,272.7 534.9,384.8 511.3,384.8" fill="#b79d5f"/>
<line x1="561.4" y1="272.7" x2="534.9" y2="384.8" stroke="#8c7645" stroke-width="0.6"/>
<polygon points="490.6,280.0 523.0,280.0 511.3,384.8 492.0,384.8" fill="#a3a3a3"/>
<polygon points="490.7,287.4 522.2,287.4 522.0,288.8 490.7,288.8" fill="#86cfc2"/>
<line x1="490.6" y1="280.0" x2="523.0" y2="280.0" stroke="#d4d4d4" stroke-width="0.9"/>
<polygon points="490.8,297.0 521.1,297.0 521.0,298.3 490.8,298.3" fill="#86cfc2"/>
<line x1="490.7" y1="289.5" x2="521.9" y2="289.5" stroke="#d4d4d4" stroke-width="0.9"/>
<polygon points="491.0,306.5 520.0,306.5 519.9,307.8 491.0,307.8" fill="#d9d9d9"/>
<line x1="490.9" y1="299.1" x2="520.9" y2="299.1" stroke="#d4d4d4" stroke-width="0.9"/>
<polygon points="491.1,316.0 519.0,316.0 518.8,317.3 491.1,317.3" fill="#86cfc2"/>
<line x1="491.0" y1="308.6" x2="519.8" y2="308.6" stroke="#d4d4d4" stroke-width="0.9"/>
<polygon points="491.2,325.5 517.9,325.5 517.8,326.9 491.2,326.9" fill="#86cfc2"/>
<line x1="491.1" y1="318.1" x2="518.7" y2="318.1" stroke="#d4d4d4" stroke-width="0.9"/>
<polygon points="491.3,335.1 516.9,335.1 516.7,336.4 491.4,336.4" fill="#9494d8"/>
<line x1="491.2" y1="327.6" x2="517.7" y2="327.6" stroke="#d4d4d4" stroke-width="0.9"/>
<polygon points="491.5,344.6 515.8,344.6 515.6,345.9 491.5,345.9" fill="#9494d8"/>
<line x1="491.4" y1="337.2" x2="516.6" y2="337.2" stroke="#d4d4d4" stroke-width="0.9"/>
<polygon points="491.6,354.1 514.7,354.1 514.6,355.5 491.6,355.5" fill="#86cfc2"/>
<line x1="491.5" y1="346.7" x2="515.6" y2="346.7" stroke="#d4d4d4" stroke-width="0.9"/>
<polygon points="491.7,363.6 513.7,363.6 513.5,365.0 491.7,365.0" fill="#86cfc2"/>
<line x1="491.6" y1="356.2" x2="514.5" y2="356.2" stroke="#d4d4d4" stroke-width="0.9"/>
<polygon points="491.8,373.2 512.6,373.2 512.4,374.5 491.9,374.5" fill="#86cfc2"/>
<line x1="491.7" y1="365.7" x2="513.4" y2="365.7" stroke="#d4d4d4" stroke-width="0.9"/>
<polygon points="492.0,382.7 511.5,382.7 511.4,384.0 492.0,384.0" fill="#d9d9d9"/>
<line x1="491.9" y1="375.3" x2="512.4" y2="375.3" stroke="#d4d4d4" stroke-width="0.9"/>
<line x1="490.6" y1="280.0" x2="492.0" y2="384.8" stroke="#d4d4d4" stroke-width="0.9"/>
<line x1="506.8" y1="280.0" x2="501.6" y2="384.8" stroke="#d4d4d4" stroke-width="0.9"/>
<line x1="523.0" y1="280.0" x2="511.3" y2="384.8" stroke="#d4d4d4" stroke-width="0.9"/>
<polygon points="493.0,281.4 496.3,281.4 496.2,286.7 493.1,286.7" fill="#b8b8b8"/>
<polygon points="493.2,319.5 495.9,319.5 495.9,324.8 493.2,324.8" fill="#b8b8b8"/>
<polygon points="493.2,329.1 495.9,329.1 495.8,334.3 493.2,334.3" fill="#b8b8b8"/>
<polygon points="493.3,338.6 495.8,338.6 495.7,343.8 493.3,343.8" fill="#b8b8b8"/>
<polygon points="493.3,348.1 495.7,348.1 495.6,353.4 493.3,353.4" fill="#b8b8b8"/>
<polygon points="493.3,357.6 495.6,357.6 495.6,362.9 493.4,362.9" fill="#b8b8b8"/>
<polygon points="493.4,367.2 495.5,367.2 495.5,372.4 493.4,372.4" fill="#b8b8b8"/>
<polygon points="509.1,281.4 512.4,281.4 512.0,286.7 508.8,286.7" fill="#b8b8b8"/>
<polygon points="508.6,291.0 511.7,291.0 511.3,296.2 508.3,296.2" fill="#b8b8b8"/>
<polygon points="508.0,300.5 511.0,300.5 510.6,305.7 507.7,305.7" fill="#b8b8b8"/>
<polygon points="506.9,319.5 509.7,319.5 509.3,324.8 506.6,324.8" fill="#b8b8b8"/>
<polygon points="506.4,329.1 509.0,329.1 508.6,334.3 506.1,334.3" fill="#b8b8b8"/>
<polygon points="505.8,338.6 508.3,338.6 507.9,343.8 505.5,343.8" fill="#b8b8b8"/>
<polygon points="505.2,348.1 507.6,348.1 507.3,353.4 504.9,353.4" fill="#b8b8b8"/>
<polygon points="491.0,280.5 522.5,280.5 522.0,284.0 491.0,284.0" fill="#e4e4e4"/>
<line x1="523.0" y1="304.0" x2="560.0" y2="301.0" stroke="#9c7f4a" stroke-width="0.5"/>
<polygon points="400.0,360.0 487.0,360.0 489.0,412.0 398.0,412.0" fill="url(#roof)"/>
<polygon points="396.0,366.0 401.0,366.0 398.0,420.0 393.0,420.0" fill="#8f8f8f" stroke="#5fb3b0" stroke-width="0.8"/>
<polygon points="486.0,366.0 491.0,366.0 491.5,420.0 488.0,420.0" fill="#8f8f8f" stroke="#5fb3b0" stroke-width="0.8"/>
<polygon points="442.0,360.0 445.0,360.0 445.5,412.0 442.5,412.0" fill="#8f8f8f" stroke="#5fb3b0" stroke-width="0.8"/>
<polygon points="393.0,411.5 491.5,411.5 491.5,423.3 393.0,423.3" fill="#8d8d8d" stroke="#5fb3b0" stroke-width="0.9"/>
<line x1="396.0" y1="416.8" x2="489.0" y2="416.8" stroke="#555555" stroke-width="0.9"/>
<line x1="396.0" y1="415.5" x2="489.0" y2="415.5" stroke="#5fb3b0" stroke-width="0.6"/>
<polygon points="406.0,423.7 485.8,423.7 485.8,451.0 406.0,451.0" fill="#b39b5e"/>
<line x1="406.0" y1="427.0" x2="485.8" y2="427.0" stroke="#a08a56" stroke-width="0.9"/>
<line x1="406.0" y1="430.5" x2="485.8" y2="430.5" stroke="#a08a56" stroke-width="0.9"/>
<line x1="406.0" y1="434.0" x2="485.8" y2="434.0" stroke="#a08a56" stroke-width="0.9"/>
<line x1="406.0" y1="437.5" x2="485.8" y2="437.5" stroke="#a08a56" stroke-width="0.9"/>
<line x1="406.0" y1="441.0" x2="485.8" y2="441.0" stroke="#a08a56" stroke-width="0.9"/>
<line x1="406.0" y1="444.5" x2="485.8" y2="444.5" stroke="#a08a56" stroke-width="0.9"/>
<line x1="406.0" y1="448.0" x2="485.8" y2="448.0" stroke="#a08a56" stroke-width="0.9"/>
<line x1="409.5" y1="423.7" x2="409.2" y2="451.0" stroke="#a09070" stroke-width="0.6"/>
<line x1="430.5" y1="423.7" x2="430.2" y2="451.0" stroke="#a09070" stroke-width="0.6"/>
<line x1="451.8" y1="423.7" x2="451.5" y2="451.0" stroke="#a09070" stroke-width="0.6"/>
<line x1="473.0" y1="423.7" x2="472.7" y2="451.0" stroke="#a09070" stroke-width="0.6"/>
<g opacity="0.7">
<line x1="16.0" y1="307.8" x2="856.0" y2="302.4" stroke="#a595c0" stroke-width="0.8"/>
<line x1="16.0" y1="401.0" x2="856.0" y2="393.6" stroke="#b0a2c8" stroke-width="0.9"/>
<line x1="16.0" y1="433.8" x2="856.0" y2="426.6" stroke="#b0a2c8" stroke-width="0.9"/>
</g>
<ellipse cx="139.8" cy="428.2" rx="5.4" ry="5" fill="#f2f2f2" stroke="#111" stroke-width="0.9"/>
<text x="139.8" y="430.1" font-size="5.5" font-weight="bold" font-style="italic" text-anchor="middle" fill="#111">1</text>
<ellipse cx="174.9" cy="428.0" rx="5.4" ry="5" fill="#f2f2f2" stroke="#111" stroke-width="0.9"/>
<text x="174.9" y="429.9" font-size="5.5" font-weight="bold" font-style="italic" text-anchor="middle" fill="#111">2</text>
<ellipse cx="192.2" cy="427.9" rx="5.4" ry="5" fill="#f2f2f2" stroke="#111" stroke-width="0.9"/>
<text x="192.2" y="429.8" font-size="5.5" font-weight="bold" font-style="italic" text-anchor="middle" fill="#111">3</text>
<ellipse cx="226.7" cy="427.7" rx="5.4" ry="5" fill="#f2f2f2" stroke="#111" stroke-width="0.9"/>
<text x="226.7" y="429.6" font-size="5.5" font-weight="bold" font-style="italic" text-anchor="middle" fill="#111">4</text>
<ellipse cx="261.8" cy="427.5" rx="5.4" ry="5" fill="#f2f2f2" stroke="#111" stroke-width="0.9"/>
<text x="261.8" y="429.4" font-size="5.5" font-weight="bold" font-style="italic" text-anchor="middle" fill="#111">5</text>
<ellipse cx="271.0" cy="427.5" rx="5.4" ry="5" fill="#f2f2f2" stroke="#111" stroke-width="0.9"/>
<text x="271.0" y="429.4" font-size="5.5" font-weight="bold" font-style="italic" text-anchor="middle" fill="#111">6</text>
<ellipse cx="290.4" cy="427.4" rx="5.4" ry="5" fill="#f2f2f2" stroke="#111" stroke-width="0.9"/>
<text x="290.4" y="429.3" font-size="5.5" font-weight="bold" font-style="italic" text-anchor="middle" fill="#111">7</text>
<ellipse cx="314.2" cy="427.2" rx="5.4" ry="5" fill="#f2f2f2" stroke="#111" stroke-width="0.9"/>
<text x="314.2" y="429.1" font-size="5.5" font-weight="bold" font-style="italic" text-anchor="middle" fill="#111">8</text>
<ellipse cx="335.5" cy="427.1" rx="5.4" ry="5" fill="#f2f2f2" stroke="#111" stroke-width="0.9"/>
<text x="335.5" y="429.0" font-size="5.5" font-weight="bold" font-style="italic" text-anchor="middle" fill="#111">9</text>
<ellipse cx="338.5" cy="427.1" rx="5.4" ry="5" fill="#f2f2f2" stroke="#111" stroke-width="0.9"/>
<text x="338.5" y="429.0" font-size="5.0" font-weight="bold" font-style="italic" text-anchor="middle" fill="#111">10</text>
<ellipse cx="358.0" cy="427.0" rx="5.4" ry="5" fill="#f2f2f2" stroke="#111" stroke-width="0.9"/>
<text x="358.0" y="428.9" font-size="5.0" font-weight="bold" font-style="italic" text-anchor="middle" fill="#111">11</text>
<ellipse cx="402.4" cy="426.8" rx="5.4" ry="5" fill="#f2f2f2" stroke="#111" stroke-width="0.9"/>
<text x="402.4" y="428.7" font-size="5.0" font-weight="bold" font-style="italic" text-anchor="middle" fill="#111">12</text>
<ellipse cx="489.0" cy="426.3" rx="5.4" ry="5" fill="#f2f2f2" stroke="#111" stroke-width="0.9"/>
<text x="489.0" y="428.2" font-size="5.0" font-weight="bold" font-style="italic" text-anchor="middle" fill="#111">13</text>
<ellipse cx="532.7" cy="426.0" rx="5.4" ry="5" fill="#f2f2f2" stroke="#111" stroke-width="0.9"/>
<text x="532.7" y="427.9" font-size="5.0" font-weight="bold" font-style="italic" text-anchor="middle" fill="#111">14</text>
<ellipse cx="541.3" cy="426.0" rx="5.4" ry="5" fill="#f2f2f2" stroke="#111" stroke-width="0.9"/>
<text x="541.3" y="427.9" font-size="5.0" font-weight="bold" font-style="italic" text-anchor="middle" fill="#111">15</text>
<ellipse cx="554.9" cy="425.9" rx="5.4" ry="5" fill="#f2f2f2" stroke="#111" stroke-width="0.9"/>
<text x="554.9" y="427.8" font-size="5.0" font-weight="bold" font-style="italic" text-anchor="middle" fill="#111">16</text>
<ellipse cx="576.6" cy="425.8" rx="5.4" ry="5" fill="#f2f2f2" stroke="#111" stroke-width="0.9"/>
<text x="576.6" y="427.7" font-size="5.0" font-weight="bold" font-style="italic" text-anchor="middle" fill="#111">17</text>
<ellipse cx="662.7" cy="425.3" rx="5.4" ry="5" fill="#f2f2f2" stroke="#111" stroke-width="0.9"/>
<text x="662.7" y="427.2" font-size="5.0" font-weight="bold" font-style="italic" text-anchor="middle" fill="#111">18</text>
<ellipse cx="698.0" cy="425.1" rx="5.4" ry="5" fill="#f2f2f2" stroke="#111" stroke-width="0.9"/>
<text x="698.0" y="427.0" font-size="5.0" font-weight="bold" font-style="italic" text-anchor="middle" fill="#111">19</text>
<ellipse cx="714.7" cy="425.0" rx="5.4" ry="5" fill="#f2f2f2" stroke="#111" stroke-width="0.9"/>
<text x="714.7" y="426.9" font-size="5.0" font-weight="bold" font-style="italic" text-anchor="middle" fill="#111">20</text>
<ellipse cx="750.0" cy="424.8" rx="5.4" ry="5" fill="#f2f2f2" stroke="#111" stroke-width="0.9"/>
<text x="750.0" y="426.7" font-size="5.0" font-weight="bold" font-style="italic" text-anchor="middle" fill="#111">21</text>
<ellipse cx="110" cy="374.6" rx="5.4" ry="4.8" fill="#f4f4f4" stroke="#222" stroke-width="0.7"/>
<text x="110" y="376.5" font-size="5" font-weight="bold" font-style="italic" text-anchor="middle" fill="#111">B</text>
<ellipse cx="107" cy="383.7" rx="5.4" ry="4.8" fill="#f4f4f4" stroke="#222" stroke-width="0.7"/>
<text x="107" y="385.59999999999997" font-size="5" font-weight="bold" font-style="italic" text-anchor="middle" fill="#111">A</text>
<path d="M143,376.2 L152.4,382" stroke="#111" stroke-width="0.9"/>
<path d="M152.4,382.2 H174" stroke="#888" stroke-width="1.6"/>
<text x="174.5" y="383.8" font-size="5" fill="#222">x</text>
<text x="139.5" y="374.8" font-size="5" fill="#222">z</text>
<text x="158" y="361" font-size="5" fill="#222">y</text>
<path d="M768.5,366.5 q-2.2,3 0,6.5" fill="none" stroke="#333" stroke-width="0.7"/>
<path d="M770,375 q-2.2,3 0,6.5" fill="none" stroke="#333" stroke-width="0.7"/>
<text x="510.5" y="443.6" font-size="19.4" font-weight="bold" fill="#ffffff" textLength="45" lengthAdjust="spacingAndGlyphs">BIM</text>
<path transform="translate(556.8,428.2)" d="M4,0.8 l1.8,2.6 M10.3,0.3 v3 M16.5,0.8 l-1.8,2.6 M1.5,7.3 v-3 h17.6 v3 M5.5,8.3 h9 l-4.2,3.2 M10.3,11.3 v4.8 l-2.8,-0.8 M1.2,12.6 h18" fill="none" stroke="#fff" stroke-width="2.7" stroke-linejoin="miter" stroke-linecap="butt"/>
<path transform="translate(580.4,428.2)" d="M2,2.2 h15.4 v13.6 l-3,-1.3 M4.5,6 l5,3 M2.5,15.3 l13,-5.5" fill="none" stroke="#fff" stroke-width="2.7" stroke-linejoin="miter" stroke-linecap="butt"/>
<path transform="translate(603,428.2)" d="M1.8,17 v-15.3 h19 v15 l-2.5,-0.8 M5,5.5 l4.2,8.5 M9.2,5.5 l-4.2,8.5 M12,5.5 l4.2,8.5 M16.2,5.5 l-4.2,8.5" fill="none" stroke="#fff" stroke-width="2.7" stroke-linejoin="miter" stroke-linecap="butt"/>
<text x="627" y="443.6" font-size="19.4" font-weight="bold" fill="#ffffff" textLength="198" lengthAdjust="spacingAndGlyphs">ɯɯɯ.bimxxɯ.com</text>
<defs><linearGradient id="tb" x1="0" y1="0" x2="0" y2="1"><stop offset="0" stop-color="#8fadd0"/><stop offset="1" stop-color="#b1cbe5"/></linearGradient><linearGradient id="btn" x1="0" y1="0" x2="0" y2="1"><stop offset="0" stop-color="#e6f1fa"/><stop offset="0.5" stop-color="#b9daf1"/><stop offset="0.52" stop-color="#8fc6ec"/><stop offset="1" stop-color="#9fd0f0"/></linearGradient></defs>
<rect x="0" y="0" width="856" height="10" fill="url(#tb)"/>
<rect x="0" y="9.6" width="856" height="1.1" fill="#ffffff"/>
<rect x="0" y="10.7" width="856" height="8.6" fill="#d9deef"/>
<rect x="0" y="19.3" width="856" height="10.8" fill="#d9d9d9"/>
<rect x="144" y="19.3" width="127" height="10.8" fill="#ffffff"/>
<rect x="398" y="19.3" width="0.8" height="10.8" fill="#c4c4c4"/>
<rect x="0" y="0" width="7.5" height="9" fill="#e8532a"/>
<text x="0.5" y="8" font-size="9" font-weight="bold" fill="#ffffff">P</text>
<rect x="4" y="7.2" width="3.5" height="1.6" fill="#3a8a3a"/>
<text x="12.0" y="7.2" font-size="6.4" fill="#1f2833">0</text>
<text x="15.6" y="7.2" font-size="6.4" fill="#1f2833">6</text>
<text x="19.1" y="7.2" font-size="6.4" fill="#1f2833">1</text>
<text x="22.7" y="7.2" font-size="6.4" fill="#1f2833">3</text>
<path d="M27.5,3.0H31.4M27.4,4.5H30.9M27.5,5.9H30.5M27.4,7.4H30.9M30.1,2.5V7.0M27.7,3.3V7.4M27.5,3.5V7.7" stroke="#1f2833" stroke-width="0.7" fill="none"/>
<path d="M33.0,3.0H37.2M32.2,5.2H36.1M33.3,7.4H36.9M34.3,3.0V6.9M34.0,2.7V6.6" stroke="#1f2833" stroke-width="0.7" fill="none"/>
<path d="M38.6,3.0H42.2M39.3,5.2H43.3M39.1,7.4H42.9M41.6,2.9V6.7M40.9,2.5V6.8" stroke="#1f2833" stroke-width="0.7" fill="none"/>
<path d="M44.3,3.0H49.0M44.9,4.5H47.7M44.1,5.9H49.0M44.4,7.4H49.1M46.3,3.0V6.9M47.1,2.7V7.0" stroke="#1f2833" stroke-width="0.7" fill="none"/>
<path d="M50.9,3.0H54.6M49.8,5.2H53.8M49.7,7.4H53.6M51.2,3.0V7.1M51.3,3.2V6.8" stroke="#1f2833" stroke-width="0.7" fill="none"/>
<path d="M55.6,3.0H59.9M55.7,4.5H59.7M56.7,5.9H60.4M55.8,7.4H60.6M57.1,3.5V7.3M58.4,2.4V6.8" stroke="#1f2833" stroke-width="0.7" fill="none"/>
<text x="62.9" y="7.2" font-size="6.4" fill="#1f2833">-</text>
<text x="66.8" y="7.2" font-size="6.4" fill="#1f2833">P</text>
<text x="71.1" y="7.2" font-size="6.4" fill="#1f2833">K</text>
<text x="75.4" y="7.2" font-size="6.4" fill="#1f2833">P</text>
<text x="79.7" y="7.2" font-size="6.4" fill="#1f2833">M</text>
<text x="85.0" y="7.2" font-size="6.4" fill="#1f2833">-</text>
<text x="87.1" y="7.2" font-size="6.4" fill="#1f2833">A</text>
<text x="91.4" y="7.2" font-size="6.4" fill="#1f2833">R</text>
<text x="96.0" y="7.2" font-size="6.4" fill="#1f2833">C</text>
<text x="100.6" y="7.2" font-size="6.4" fill="#1f2833">H</text>
<text x="105.2" y="7.2" font-size="6.4" fill="#1f2833">I</text>
<text x="107.0" y="7.2" font-size="6.4" fill="#1f2833">C</text>
<text x="111.6" y="7.2" font-size="6.4" fill="#1f2833">A</text>
<text x="115.9" y="7.2" font-size="6.4" fill="#1f2833">D</text>
<text x="122.3" y="7.2" font-size="6.4" fill="#1f2833">2</text>
<text x="125.9" y="7.2" font-size="6.4" fill="#1f2833">1</text>
<path d="M3.0,12.5H7.8M3.1,14.0H7.1M2.7,15.5H6.8M3.4,17.0H7.0M5.0,12.5V16.4M5.8,12.8V16.4M5.0,12.5V16.6" stroke="#2a2a2a" stroke-width="0.7" fill="none"/>
<path d="M9.7,12.5H13.0M8.9,14.7H13.7M9.9,17.0H12.9M12.8,12.5V16.7M10.1,11.8V17.3" stroke="#2a2a2a" stroke-width="0.7" fill="none"/>
<text x="14.5" y="16.8" font-size="6.4" fill="#2a2a2a">(</text>
<text x="16.6" y="16.8" font-size="6.4" fill="#2a2a2a">F</text>
<text x="20.6" y="16.8" font-size="6.4" fill="#2a2a2a">)</text>
<path d="M28.6,12.5H32.2M28.2,14.7H33.0M28.3,17.0H32.4M32.1,11.9V16.8M31.0,12.5V16.3M29.4,12.9V17.1" stroke="#2a2a2a" stroke-width="0.7" fill="none"/>
<path d="M34.0,12.5H38.3M33.7,14.7H37.9M34.1,17.0H38.5M35.0,11.9V16.7M35.9,12.6V16.8" stroke="#2a2a2a" stroke-width="0.7" fill="none"/>
<text x="39.5" y="16.8" font-size="6.4" fill="#2a2a2a">(</text>
<text x="41.6" y="16.8" font-size="6.4" fill="#2a2a2a">Q</text>
<text x="46.6" y="16.8" font-size="6.4" fill="#2a2a2a">)</text>
<path d="M55.9,12.5H60.5M55.8,14.7H59.7M55.5,17.0H59.2M58.4,12.4V17.1M57.3,13.0V16.3M58.1,12.7V17.3" stroke="#2a2a2a" stroke-width="0.7" fill="none"/>
<path d="M62.2,12.5H66.5M61.6,14.7H66.2M62.4,17.0H66.4M65.5,11.8V16.8M62.2,12.6V16.7" stroke="#2a2a2a" stroke-width="0.7" fill="none"/>
<text x="67.0" y="16.8" font-size="6.4" fill="#2a2a2a">(</text>
<text x="69.1" y="16.8" font-size="6.4" fill="#2a2a2a">B</text>
<text x="73.4" y="16.8" font-size="6.4" fill="#2a2a2a">)</text>
<path d="M82.4,12.5H85.7M82.5,14.7H87.1M82.8,17.0H86.7M86.0,12.6V16.8M84.3,12.4V16.8" stroke="#2a2a2a" stroke-width="0.7" fill="none"/>
<path d="M88.1,12.5H91.8M87.7,14.7H93.1M87.8,17.0H92.8M92.0,12.1V16.2M89.8,12.6V16.4M89.3,12.9V17.0" stroke="#2a2a2a" stroke-width="0.7" fill="none"/>
<text x="93.5" y="16.8" font-size="6.4" fill="#2a2a2a">(</text>
<text x="95.6" y="16.8" font-size="6.4" fill="#2a2a2a">I</text>
<text x="97.4" y="16.8" font-size="6.4" fill="#2a2a2a">)</text>
<path d="M106.8,12.5H110.5M106.7,14.0H110.5M107.0,15.5H111.3M107.1,17.0H110.4M108.5,12.5V16.6M107.7,12.4V17.2" stroke="#2a2a2a" stroke-width="0.7" fill="none"/>
<path d="M113.1,12.5H117.5M112.5,14.7H116.4M112.7,17.0H116.6M116.1,12.2V16.8M115.6,12.6V17.2" stroke="#2a2a2a" stroke-width="0.7" fill="none"/>
<text x="118.0" y="16.8" font-size="6.4" fill="#2a2a2a">(</text>
<text x="120.1" y="16.8" font-size="6.4" fill="#2a2a2a">N</text>
<text x="124.8" y="16.8" font-size="6.4" fill="#2a2a2a">)</text>
<path d="M133.6,12.5H138.4M133.5,14.0H138.0M134.0,15.5H137.5M133.6,17.0H138.1M134.2,11.9V16.7M134.3,12.8V16.5M134.7,11.8V17.0" stroke="#2a2a2a" stroke-width="0.7" fill="none"/>
<path d="M139.3,12.5H143.9M140.0,14.0H143.7M139.2,15.5H143.4M140.3,17.0H143.5M140.2,12.3V17.1M140.8,12.1V16.6M142.7,12.4V16.9" stroke="#2a2a2a" stroke-width="0.7" fill="none"/>
<text x="145.0" y="16.8" font-size="6.4" fill="#2a2a2a">(</text>
<text x="147.1" y="16.8" font-size="6.4" fill="#2a2a2a">O</text>
<text x="152.1" y="16.8" font-size="6.4" fill="#2a2a2a">)</text>
<path d="M160.7,12.5H165.3M161.3,14.7H164.3M161.4,17.0H165.2M162.8,12.0V17.3M161.2,12.4V17.0" stroke="#2a2a2a" stroke-width="0.7" fill="none"/>
<path d="M166.8,12.5H171.1M166.4,14.0H171.2M167.2,15.5H171.1M167.1,17.0H170.5M170.7,12.9V16.8M170.0,12.2V17.3" stroke="#2a2a2a" stroke-width="0.7" fill="none"/>
<path d="M172.6,12.5H176.3M172.8,14.7H177.0M173.2,17.0H176.9M174.0,12.8V16.7M173.3,12.4V17.0" stroke="#2a2a2a" stroke-width="0.7" fill="none"/>
<path d="M178.8,12.5H183.7M179.4,14.7H182.9M179.1,17.0H182.8M181.3,12.6V17.1M180.8,12.4V17.2" stroke="#2a2a2a" stroke-width="0.7" fill="none"/>
<text x="184.1" y="16.8" font-size="6.4" fill="#2a2a2a">(</text>
<text x="186.2" y="16.8" font-size="6.4" fill="#2a2a2a">T</text>
<text x="189.7" y="16.8" font-size="6.4" fill="#2a2a2a">)</text>
<path d="M198.8,12.5H203.4M198.9,14.7H202.6M198.6,17.0H203.4M199.9,12.8V17.4M201.0,12.5V16.4M201.1,12.4V16.9" stroke="#2a2a2a" stroke-width="0.7" fill="none"/>
<path d="M204.9,12.5H208.2M205.4,14.7H209.0M205.5,17.0H208.3M207.6,11.9V16.8M206.7,12.9V17.3" stroke="#2a2a2a" stroke-width="0.7" fill="none"/>
<text x="210.0" y="16.8" font-size="6.4" fill="#2a2a2a">(</text>
<text x="212.1" y="16.8" font-size="6.4" fill="#2a2a2a">W</text>
<text x="218.2" y="16.8" font-size="6.4" fill="#2a2a2a">)</text>
<text x="226.5" y="16.8" font-size="6.4" fill="#2a2a2a">P</text>
<text x="230.8" y="16.8" font-size="6.4" fill="#2a2a2a">K</text>
<text x="235.1" y="16.8" font-size="6.4" fill="#2a2a2a">P</text>
<text x="239.4" y="16.8" font-size="6.4" fill="#2a2a2a">M</text>
<text x="244.7" y="16.8" font-size="6.4" fill="#2a2a2a">-</text>
<text x="246.8" y="16.8" font-size="6.4" fill="#2a2a2a">A</text>
<text x="251.1" y="16.8" font-size="6.4" fill="#2a2a2a">C</text>
<path d="M256.1,12.5H260.5M256.3,14.0H261.1M257.1,15.5H261.2M256.5,17.0H260.0M259.1,12.9V16.4M259.6,11.8V16.4" stroke="#2a2a2a" stroke-width="0.7" fill="none"/>
<path d="M261.8,12.5H266.3M262.8,14.7H266.2M262.5,17.0H266.6M263.3,12.4V16.5M263.6,12.4V16.7M264.2,12.3V16.8" stroke="#2a2a2a" stroke-width="0.7" fill="none"/>
<path d="M268.6,12.5H273.1M268.6,14.7H272.2M268.1,17.0H272.7M271.9,12.1V17.1M271.8,12.9V16.6M270.0,12.9V16.5" stroke="#2a2a2a" stroke-width="0.7" fill="none"/>
<path d="M275.1,12.5H278.1M274.2,14.7H278.9M274.2,17.0H278.0M276.8,12.6V16.4M277.1,12.7V16.3" stroke="#2a2a2a" stroke-width="0.7" fill="none"/>
<path d="M284.4,12.5H288.6M283.3,14.0H287.9M284.1,15.5H287.9M284.0,17.0H287.4M285.9,11.8V17.1M286.4,12.9V16.8" stroke="#2a2a2a" stroke-width="0.7" fill="none"/>
<path d="M289.4,12.5H293.4M290.3,14.7H294.6M290.4,17.0H293.3M290.7,12.6V16.3M290.5,12.2V16.7" stroke="#2a2a2a" stroke-width="0.7" fill="none"/>
<text x="296.8" y="16.8" font-size="6.4" fill="#2a2a2a">(</text>
<text x="298.9" y="16.8" font-size="6.4" fill="#2a2a2a">H</text>
<text x="303.5" y="16.8" font-size="6.4" fill="#2a2a2a">)</text>
<path d="M19.5,22.5 h3 l1.2,1.5 h3.5 v4.8 h-7.7 z" fill="#fff" stroke="#444" stroke-width="0.6"/>
<text x="28.7" y="27.0" font-size="6.5" fill="#2a2a2a">[</text>
<text x="30.5" y="27.0" font-size="6.5" fill="#2a2a2a">1</text>
<text x="34.1" y="27.0" font-size="6.5" fill="#2a2a2a">.</text>
<path d="M38.5,22.7H42.8M37.9,24.2H42.9M39.0,25.7H42.2M38.5,27.2H43.0M42.2,22.7V26.5M41.8,22.4V26.5" stroke="#2a2a2a" stroke-width="0.7" fill="none"/>
<path d="M44.7,22.7H48.2M44.7,24.2H48.4M44.9,25.7H48.3M44.1,27.2H49.0M47.9,22.5V27.5M48.1,22.8V27.3" stroke="#2a2a2a" stroke-width="0.7" fill="none"/>
<text x="49.8" y="27.0" font-size="6.5" fill="#2a2a2a">]</text>
<path d="M146.5,22.8 l2,-0.8 h4.5 v5.5 l-2,0.9 h-4.5 z M146.5,22.8 h4.5 v5.6 M151,22.8 l2,-0.8" fill="#fff" stroke="#444" stroke-width="0.6"/>
<text x="155.5" y="27.0" font-size="6.5" fill="#2a2a2a">[</text>
<text x="157.3" y="27.0" font-size="6.5" fill="#2a2a2a">3</text>
<text x="160.9" y="27.0" font-size="6.5" fill="#2a2a2a">D</text>
<text x="167.4" y="27.0" font-size="6.5" fill="#2a2a2a">/</text>
<path d="M171.7,22.7H176.3M171.3,24.9H175.7M171.8,27.2H175.2M175.8,23.1V26.5M173.2,23.1V26.8" stroke="#2a2a2a" stroke-width="0.7" fill="none"/>
<path d="M178.1,22.7H182.1M177.9,24.9H181.8M178.6,27.2H182.2M178.7,22.5V27.1M178.7,22.1V26.7M179.8,22.6V27.3" stroke="#2a2a2a" stroke-width="0.7" fill="none"/>
<text x="183.1" y="27.0" font-size="6.5" fill="#2a2a2a">]</text>
<text x="263.2" y="27.6" font-size="8" font-weight="bold" fill="#222">×</text>
<path d="M273.5,28.4 v-3.8 l3.5,-2.2 l3.5,2.2 v3.8 z" fill="#fff" stroke="#444" stroke-width="0.6"/>
<text x="282.5" y="27.0" font-size="6.5" fill="#2a2a2a">[</text>
<path d="M284.5,22.7H288.8M284.8,24.2H289.0M285.2,25.7H289.1M285.1,27.2H289.7M287.8,22.9V26.5M287.6,22.9V26.5" stroke="#2a2a2a" stroke-width="0.7" fill="none"/>
<path d="M292.8,22.7H297.7M293.4,24.9H297.1M293.1,27.2H296.9M294.8,22.6V27.1M294.6,22.3V27.2" stroke="#2a2a2a" stroke-width="0.7" fill="none"/>
<path d="M299.2,22.7H303.4M298.3,24.2H303.4M299.1,25.7H303.2M298.8,27.2H303.3M302.5,22.9V26.5M302.9,23.1V26.5" stroke="#2a2a2a" stroke-width="0.7" fill="none"/>
<path d="M304.9,22.7H309.0M305.6,24.9H308.7M305.0,27.2H309.7M308.6,22.2V27.5M306.2,22.8V26.5M306.9,22.1V27.4" stroke="#2a2a2a" stroke-width="0.7" fill="none"/>
<text x="310.2" y="27.0" font-size="6.5" fill="#2a2a2a">]</text>
<rect x="0" y="19.3" width="16.7" height="456" fill="#efefef"/>
<rect x="16.7" y="19.3" width="0.6" height="456" fill="#d8dadc"/>
<path d="M4,21.3 h7" stroke="#b0b0b0" stroke-width="0.7"/>
<rect x="0.4" y="23.6" width="15.9" height="12.5" rx="2" fill="#e6e6e6" stroke="#9a9a9a" stroke-width="0.8"/>
<path d="M5.2,25.8 v8.2 l2,-2 l1.7,2.9 l1.3,-0.7 l-1.7,-2.9 l2.8,-0.3 z" fill="#7a7a7a"/>
<rect x="0" y="52.3" width="16.2" height="7.4" fill="#d9d9d9"/>
<path d="M1.1,54.3H4.4M1.0,55.7H5.2M1.0,57.1H4.6M1.2,58.6H4.8M3.2,54.8V58.9M3.9,53.9V58.0M4.4,54.5V58.5" stroke="#333" stroke-width="0.7" fill="none"/>
<path d="M6.5,54.3H10.8M7.1,55.7H10.9M6.4,57.1H10.3M6.4,58.6H11.3M10.4,54.7V58.8M7.3,53.7V58.1M8.6,54.3V58.0" stroke="#333" stroke-width="0.7" fill="none"/>
<rect x="0" y="283" width="16.2" height="7.4" fill="#d9d9d9"/>
<path d="M0.5,285.1H4.3M1.3,286.5H5.0M1.2,287.9H4.7M1.0,289.4H4.5M3.1,284.6V289.6M4.1,284.9V289.6" stroke="#333" stroke-width="0.7" fill="none"/>
<path d="M6.7,285.1H11.0M6.6,287.2H10.1M6.3,289.4H11.1M8.2,285.1V289.5M10.2,284.9V289.1M7.5,285.4V288.7" stroke="#333" stroke-width="0.7" fill="none"/>
<path d="M3.5,41.3 h9 v5.5 h-9 z" fill="none" stroke="#505050" stroke-width="0.6"/>
<path d="M3.5,65.5 l9,-1.5 v5 l-9,1.5 z" fill="none" stroke="#505050" stroke-width="0.6"/>
<path d="M5,78.5 h5 v6.5 l-5,0.5 z M8.5,81.5 v1" fill="none" stroke="#505050" stroke-width="0.6"/>
<path d="M4.5,92 h7 v6 h-7 z M8,92 v6 M4.5,95 h7" fill="none" stroke="#505050" stroke-width="0.6"/>
<path d="M6.5,105.5 h3 v8.5 h-3 z" fill="none" stroke="#505050" stroke-width="0.6"/>
<path d="M3,120.5 l10,3.5 v1.5 l-10,-3.5 z" fill="none" stroke="#505050" stroke-width="0.6"/>
<path d="M2,137 l5,-3 l7,2 l-5,3 z" fill="none" stroke="#505050" stroke-width="0.6"/>
<path d="M3,147 l5,-2 l5,3 l-5,2 z M3,149 l5,3 l5,-1 M4,151 l5,2 l4,-1" fill="none" stroke="#505050" stroke-width="0.6"/>
<path d="M3,165 l10,-3 M3,162 l10,-3 M5,160 v6 M9,159 v6 M12,158 v6" fill="none" stroke="#505050" stroke-width="0.6"/>
<path d="M2,178 l4,-4 h5 l3,5 l-6,3 z M6,174 l2,5" fill="none" stroke="#505050" stroke-width="0.6"/>
<path d="M2,188 l6,3 l6,-4 l-3,9 l-3,-5 l-3,4 z" fill="none" stroke="#505050" stroke-width="0.6"/>
<path d="M3,204 l5,-3 l6,4 l-5,3 z M3,206 l6,3 l5,-2" fill="none" stroke="#505050" stroke-width="0.6"/>
<path d="M3,214.5 h10 v10 h-10 z M3,218 h10 M3,221 h10 M7,214.5 v10 M10,214.5 v10" fill="none" stroke="#505050" stroke-width="0.6"/>
<path d="M5,234 l3,-6 l4,2 v6 l-4,1 z" fill="none" stroke="#505050" stroke-width="0.6"/>
<path d="M5,241 h4 v5 h-4 z M5,246 v5 M9,246 v5 M4,246 h6" fill="none" stroke="#505050" stroke-width="0.6"/>
<path d="M4,256 h8 v8 h-8 z M6,258 h4 v3 h-4 z" fill="none" stroke="#505050" stroke-width="0.6"/>
<path d="M1,272 l6,-2 l8,3 l-5,3 z M3,274 l6,-2 l5,2" fill="none" stroke="#505050" stroke-width="0.6"/>
<path d="M2.5,299.5 h11 M2.5,299.5 l1.5,-1 M2.5,299.5 l1.5,1 M13.5,299.5 l-1.5,-1 M13.5,299.5 l-1.5,1 M3,297 v5 M13,297 v5" fill="none" stroke="#505050" stroke-width="0.5"/>
<text x="6.2" y="297" font-size="2.6" fill="#444">4.3</text>
<path d="M3,312.7 h10 M8,307.7 v10" fill="none" stroke="#505050" stroke-width="0.6"/>
<circle cx="8" cy="312.7" r="3" fill="none" stroke="#505050" stroke-width="0.6"/>
<text x="3.8" y="331" font-size="9.5" fill="#6a6a6a">A</text>
<path d="M2,344 l4,-3 M2,344 h2 M2,344 v-2" fill="none" stroke="#505050" stroke-width="0.6"/>
<text x="6.5" y="343.5" font-size="6" fill="#555">A1</text>
<path d="M3,351 l7,-1 l4,3 l-3,3 h-8 z" fill="#a0a0a0" stroke="#555" stroke-width="0.5"/>
<path d="M3,372 l10,-9" fill="none" stroke="#505050" stroke-width="0.6"/>
<circle cx="8" cy="381" r="4" fill="none" stroke="#505050" stroke-width="0.6"/>
<path d="M3,399 v-4 l3,-3 h6 l1,-1" fill="none" stroke="#505050" stroke-width="0.6"/>
<path d="M3,404 h8 l2,2 v6 h-10 z M5,406 h4 v3 h-4 z" fill="none" stroke="#505050" stroke-width="0.6"/>
<path d="M2,419 h3 l2,3 h4 M11,422 l1,-2 l1,2 z" fill="none" stroke="#505050" stroke-width="0.6"/>
<path d="M2,437 h11 M7,434 l1,-2 l1,2 z" fill="none" stroke="#505050" stroke-width="0.6"/>
<path d="M8,445 v10 M3,450 h10" fill="none" stroke="#505050" stroke-width="0.6"/>
<rect x="5.5" y="447.5" width="5" height="5" fill="#fff" stroke="#505050" stroke-width="0.5"/>
<path d="M3,458 h8 l2,2 v7 h-10 z M5,465 l5,-4" fill="none" stroke="#505050" stroke-width="0.6"/>
<path d="M4,474 h8" fill="none" stroke="#505050" stroke-width="0.6"/>
<rect x="17.2" y="243" width="8.8" height="34" fill="#e1e4e6"/>
<path d="M21.5,245 v2 M21.5,249 v2 M21.5,253 v2" stroke="#f0a050" stroke-width="0.8"/>
<path d="M21.5,262 v12 M19.5,266 l4,4 M23.5,266 l-4,4 M19.5,268 h4" stroke="#444" stroke-width="0.6" fill="none"/>
<rect x="432.6" y="14.6" width="103.4" height="21.6" rx="1" fill="#f1f1f1" stroke="#cfcfcf" stroke-width="0.6"/>
<rect x="433.2" y="15.2" width="5.9" height="5.9" fill="#b84a46" stroke="#7a2a2a" stroke-width="0.4"/>
<path d="M434.6,16.6 l3.1,3.1 M437.7,16.6 l-3.1,3.1" stroke="#fff" stroke-width="0.8"/>
<path d="M436.5,25 v7" stroke="#999" stroke-width="0.6"/>
<rect x="445" y="15.9" width="18.4" height="18.7" rx="1" fill="url(#btn)" stroke="#4a7db0" stroke-width="0.7"/>
<rect x="465.6" y="15.9" width="18.4" height="18.7" rx="1" fill="url(#btn)" stroke="#4a7db0" stroke-width="0.7"/>
<rect x="486" y="15.9" width="18.4" height="18.7" rx="1" fill="url(#btn)" stroke="#4a7db0" stroke-width="0.7"/>
<rect x="506.3" y="15.9" width="18.4" height="18.7" rx="1" fill="url(#btn)" stroke="#4a7db0" stroke-width="0.7"/>
<path d="M447,28 l14,-11 h2 v3 l-13,12 h-3 z" fill="#f4f8fc" stroke="#4a6e9c" stroke-width="0.5"/>
<path d="M449.5,30.5 l13,-11.5" stroke="#5a84b8" stroke-width="1.2"/>
<path d="M452,33 l11,-10" stroke="#ffffff" stroke-width="1.4"/>
<path d="M455,34 l8,-7" stroke="#6a90c0" stroke-width="1"/>
<path d="M446.3,26.5 h7 v1.6 h-2.5 v3.2 h2.5 v1.6 h-7 v-1.6 h2.5 v-3.2 h-2.5 z" fill="#8fdc98" stroke="#3a9a4a" stroke-width="0.5"/>
<path d="M468,20 v9 M470,19 v11 M473,19 v11 M476,19 v11 M479,19 v11" stroke="#777" stroke-width="1.6"/>
<rect x="467.5" y="30.5" width="14" height="1.6" fill="#8a8a8a"/>
<ellipse cx="495" cy="20" rx="6" ry="1.6" fill="#8a8a8a"/>
<path d="M493,21 v6 M497,21 v6 M491,28 h8" stroke="#666" stroke-width="1"/>
<path d="M489,33 l2,-3 M492,33 l1,-3 M495,33 v-3 M498,33 l-1,-3 M501,33 l-2,-3" stroke="#8aa0b8" stroke-width="0.5"/>
<rect x="509.5" y="19" width="12" height="12.5" fill="#ebebeb" stroke="#999" stroke-width="0.6"/>
<path d="M513.5,23 v1.5 M517.5,23 v1.5 M515.5,27 v1" stroke="#555" stroke-width="0.8"/>
</svg>
</body></html>
